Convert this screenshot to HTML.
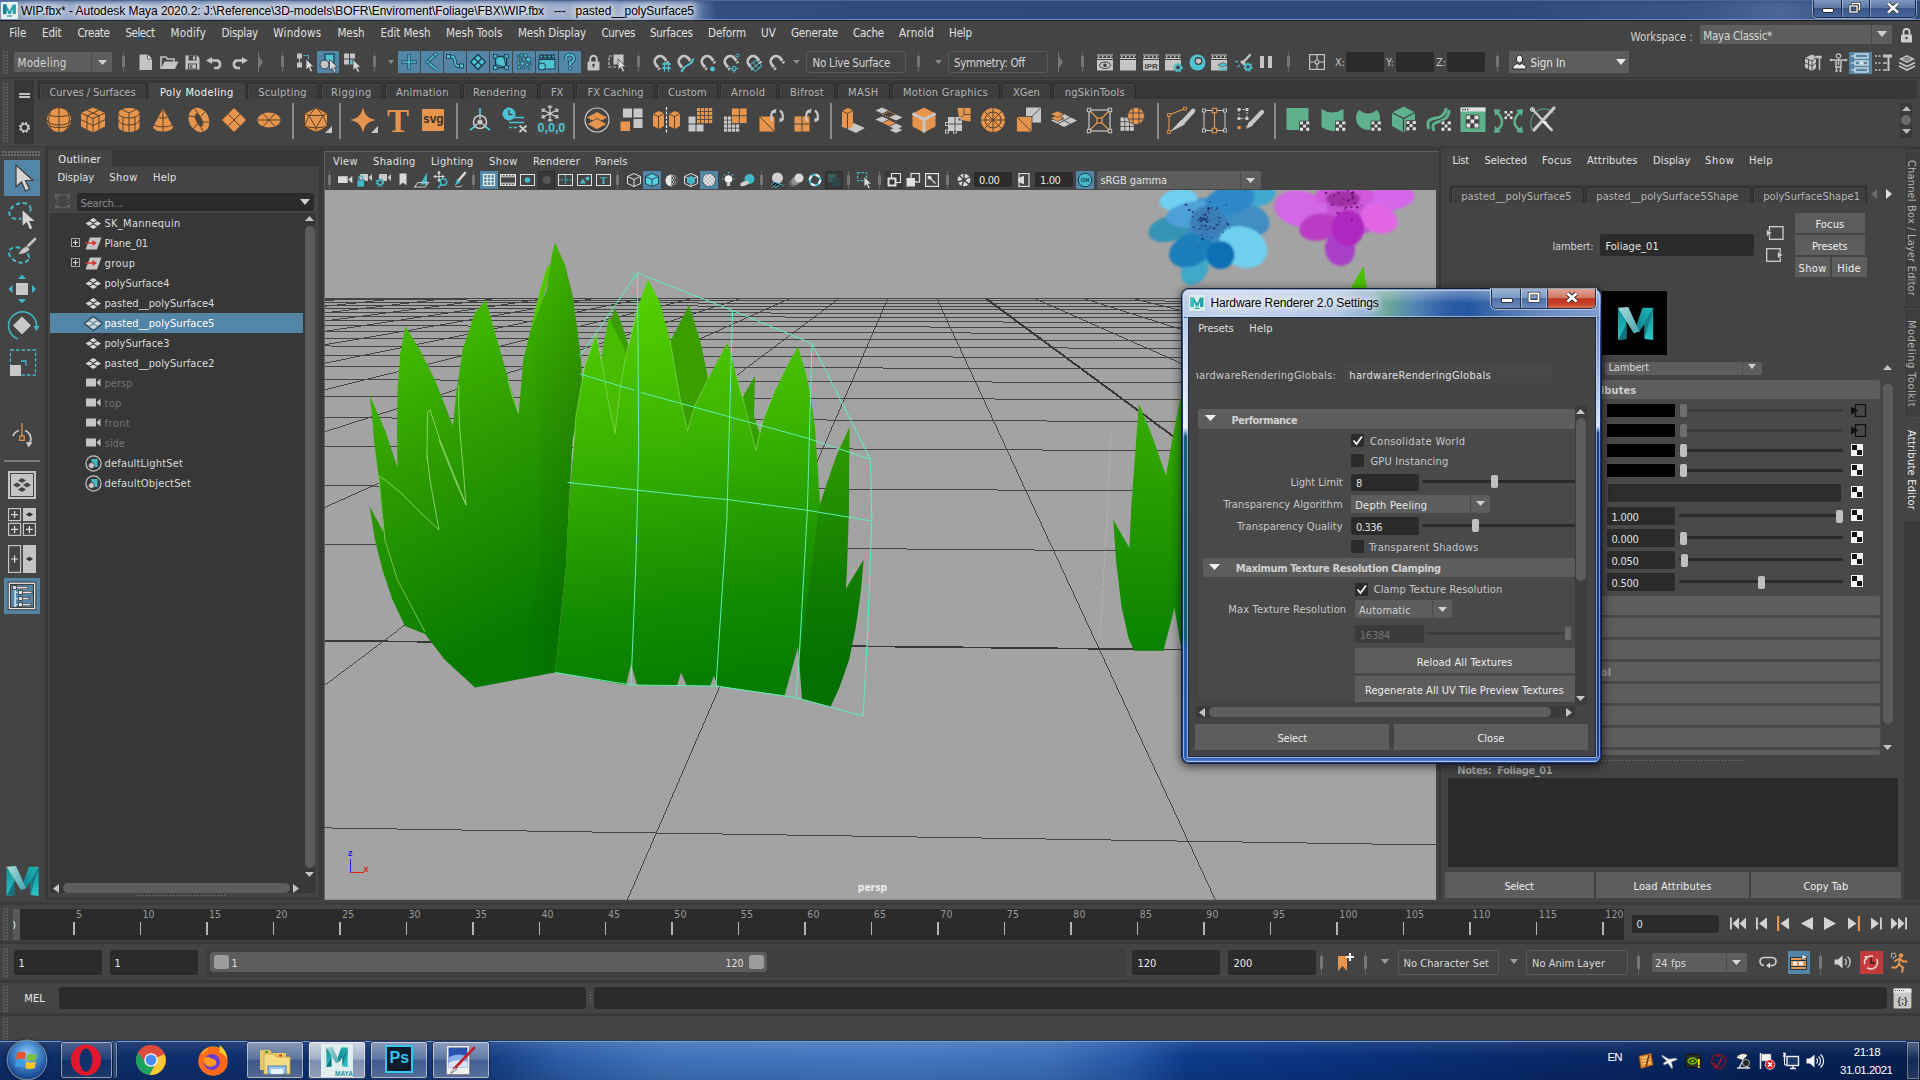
<!DOCTYPE html>
<html><head><meta charset="utf-8"><title>Maya</title><style>
html,body{margin:0;padding:0}
body{width:1920px;height:1080px;overflow:hidden;background:#444;position:relative;font-family:"DejaVu Sans Condensed","Liberation Sans",sans-serif;font-size:11px;color:#ddd}
body *{position:absolute;box-sizing:border-box}
.t{white-space:nowrap;line-height:14px;margin-top:1px}
svg{overflow:visible}
</style></head><body>
<!-- top -->
<div style="left:0px;top:0px;width:1920px;height:21px;background:#2e4b7c;background:linear-gradient(90deg,#7f93b8 0px,#9aaac8 60px,#a9b6cf 350px,#9aabca 640px,#8fa2c4 690px,#4f6c9e 704px,#31507f 716px,#2e4b7d 900px,#2c4a7b 1500px,#385688 1700px,#4a6797 1780px,#3a5788 1830px,#2f4c7e 1920px);"></div>
<div style="left:0px;top:0px;width:1920px;height:5px;background:linear-gradient(rgba(45,75,125,.55),rgba(45,75,125,0))"></div>
<div style="left:0px;top:0px;width:1920px;height:1px;background:#4a6898;"></div>
<div style="left:0px;top:19px;width:1920px;height:1px;background:#7d9ccc;opacity:.8"></div>
<div style="left:0px;top:20px;width:1920px;height:1px;background:#1a1a1a;"></div>
<div style="left:1px;top:2px;width:17px;height:17px;background:#e8f0f0;border-radius:1px"></div>
<svg style="left:2px;top:3px;" width="15" height="15" viewBox="0 0 15 15"><path d="M1 1.5 L4.2 1.5 L7.5 8 L10.8 1.5 L14 1.5 L14 11 L10.6 11 L10.6 6.5 L8.6 11 L6.4 11 L4.4 6.5 L4.4 11 L1 11 Z" fill="#2aa3ad"/><path d="M1 1.5 L4.2 1.5 L4.4 11 L1 11Z" fill="#1c7f8c"/><rect x="5" y="12.3" width="5" height="1.4" fill="#2aa3ad"/></svg>
<span class="t" style="left:21px;top:4px;color:#000;font-size:12px;letter-spacing:-0.052px;font-family:Liberation Sans,sans-serif;text-shadow:0 0 6px #fff,0 0 8px #fff,0 0 10px rgba(255,255,255,.8);white-space:pre;margin-top:0;">WIP.fbx* - Autodesk Maya 2020.2: J:\Reference\3D-models\BOFR\Enviroment\Foliage\FBX\WIP.fbx&nbsp;&nbsp; ---&nbsp;&nbsp; pasted__polySurface5</span>
<div style="left:1813px;top:0px;width:103px;height:18px;border:1px solid #1c2c4a;border-top:none;border-radius:0 0 5px 5px;box-shadow:0 0 0 1px rgba(255,255,255,.45);background:linear-gradient(#8098c0 0%,#5b78a8 45%,#38568a 50%,#46669c 100%);box-sizing:border-box"></div>
<div style="left:1841px;top:0px;width:1px;height:17px;background:#1c2c4a;box-shadow:1px 0 0 rgba(255,255,255,.35)"></div>
<div style="left:1869px;top:0px;width:1px;height:17px;background:#1c2c4a;box-shadow:1px 0 0 rgba(255,255,255,.35)"></div>
<div style="left:1822px;top:8px;width:12px;height:5px;background:#fff;border:1px solid #2a2a2a;border-radius:1px"></div>
<svg style="left:1848px;top:2px;" width="14" height="12" viewBox="0 0 14 12"><rect x="4.5" y="1.5" width="7" height="6" fill="none" stroke="#333" stroke-width="2.6"/><rect x="4.5" y="1.5" width="7" height="6" fill="none" stroke="#fff" stroke-width="1.3"/><rect x="2" y="4" width="7" height="6" fill="#3a5a90" stroke="#333" stroke-width="2.6"/><rect x="2" y="4" width="7" height="6" fill="none" stroke="#fff" stroke-width="1.3"/></svg>
<svg style="left:1886px;top:2px;" width="14" height="12" viewBox="0 0 14 12"><path d="M2 1.5 L12 10.5 M12 1.5 L2 10.5" stroke="#333" stroke-width="4.2"/><path d="M2 1.5 L12 10.5 M12 1.5 L2 10.5" stroke="#fff" stroke-width="2.4"/></svg>
<div style="left:0px;top:21px;width:1920px;height:26px;background:#444;"></div>
<span class="t" style="left:9.25px;top:25px;color:#e0e0e0;font-size:11.5px;letter-spacing:-0.059px;">File</span>
<span class="t" style="left:42px;top:25px;color:#e0e0e0;font-size:11.5px;letter-spacing:-0.134px;">Edit</span>
<span class="t" style="left:77.5px;top:25px;color:#e0e0e0;font-size:11.5px;letter-spacing:-0.392px;">Create</span>
<span class="t" style="left:125.5px;top:25px;color:#e0e0e0;font-size:11.5px;letter-spacing:-0.487px;">Select</span>
<span class="t" style="left:170.5px;top:25px;color:#e0e0e0;font-size:11.5px;letter-spacing:0.207px;">Modify</span>
<span class="t" style="left:221.5px;top:25px;color:#e0e0e0;font-size:11.5px;letter-spacing:-0.234px;">Display</span>
<span class="t" style="left:273.25px;top:25px;color:#e0e0e0;font-size:11.5px;letter-spacing:0.298px;">Windows</span>
<span class="t" style="left:337.5px;top:25px;color:#e0e0e0;font-size:11.5px;letter-spacing:-0.061px;">Mesh</span>
<span class="t" style="left:380.5px;top:25px;color:#e0e0e0;font-size:11.5px;letter-spacing:-0.063px;">Edit Mesh</span>
<span class="t" style="left:446px;top:25px;color:#e0e0e0;font-size:11.5px;letter-spacing:0.069px;">Mesh Tools</span>
<span class="t" style="left:518px;top:25px;color:#e0e0e0;font-size:11.5px;letter-spacing:-0.056px;">Mesh Display</span>
<span class="t" style="left:601.5px;top:25px;color:#e0e0e0;font-size:11.5px;letter-spacing:-0.402px;">Curves</span>
<span class="t" style="left:650px;top:25px;color:#e0e0e0;font-size:11.5px;letter-spacing:-0.288px;">Surfaces</span>
<span class="t" style="left:708px;top:25px;color:#e0e0e0;font-size:11.5px;letter-spacing:-0.072px;">Deform</span>
<span class="t" style="left:761px;top:25px;color:#e0e0e0;font-size:11.5px;letter-spacing:0.175px;">UV</span>
<span class="t" style="left:791px;top:25px;color:#e0e0e0;font-size:11.5px;letter-spacing:-0.166px;">Generate</span>
<span class="t" style="left:853px;top:25px;color:#e0e0e0;font-size:11.5px;letter-spacing:-0.236px;">Cache</span>
<span class="t" style="left:899px;top:25px;color:#e0e0e0;font-size:11.5px;letter-spacing:0.257px;">Arnold</span>
<span class="t" style="left:949px;top:25px;color:#e0e0e0;font-size:11.5px;letter-spacing:-0.149px;">Help</span>
<span class="t" style="left:1630.5px;top:29px;color:#cfcfcf;font-size:11.5px;letter-spacing:-0.114px;">Workspace :</span>
<div style="left:1700px;top:25px;width:192px;height:19px;background:#5d5d5d;border-radius:2px"></div>
<div style="left:1871px;top:25px;width:1px;height:19px;background:#4a4a4a;"></div>
<span class="t" style="left:1703.25px;top:28px;color:#d8d8d8;font-size:11.5px;letter-spacing:-0.248px;">Maya Classic*</span>
<svg style="left:1877px;top:31px;" width="10" height="6" viewBox="0 0 10 6"><path d="M0 0 L10 0 L5 6Z" fill="#d0d0d0"/></svg>
<svg style="left:1900px;top:27px;" width="13" height="16" viewBox="0 0 13 16"><path d="M3.5 8 V5 a3 3 0 0 1 6 0 V8" fill="none" stroke="#cfcfcf" stroke-width="1.8"/><rect x="1" y="7.5" width="11" height="8" rx="1" fill="#cfcfcf"/><circle cx="6.5" cy="11" r="1.3" fill="#444"/></svg>
<!-- status -->
<div style="left:0px;top:47px;width:1920px;height:31px;background:#444;"></div>
<div style="left:0px;top:77px;width:1920px;height:2px;background:#3a3a3a;"></div>
<div style="left:3px;top:51px;width:6px;height:24px;background-image:radial-gradient(circle at 1px 1px,#6c6c6c 0.6px,transparent 0.85px);background-size:3px 3px"></div>
<div style="left:14px;top:52px;width:98px;height:20px;background:#5d5d5d;border-radius:2px"></div>
<div style="left:91px;top:52px;width:1px;height:20px;background:#4c4c4c;"></div>
<span class="t" style="left:17.5px;top:55px;color:#d6d6d6;font-size:11.5px;letter-spacing:0.266px;">Modeling</span>
<svg style="left:98px;top:60px;" width="9" height="5" viewBox="0 0 9 5"><path d="M0 0 L9 0 L4.5 5Z" fill="#cfcfcf"/></svg>
<div style="left:123px;top:52px;width:1px;height:20px;background:#666;"></div><div style="left:122px;top:56px;width:3px;height:11px;background:#777;border-radius:1px"></div>
<svg style="left:139px;top:54px;" width="14" height="17" viewBox="0 0 14 17"><path d="M0.5 0.5 H8.5 L13 5 V16 H0.5Z" fill="#c4c4c4"/><path d="M8.5 0.5 V5 H13" fill="#e6e6e6" stroke="#444" stroke-width=".8"/></svg>
<svg style="left:160px;top:56px;" width="19" height="14" viewBox="0 0 19 14"><path d="M1 13 V1 H6 L7.5 3 H14 V5.5" fill="none" stroke="#c4c4c4" stroke-width="1.6"/><path d="M1 13 L4.5 5.5 H18.5 L15 13Z" fill="#c4c4c4"/></svg>
<svg style="left:185px;top:55px;" width="15" height="15" viewBox="0 0 15 15"><path d="M0.5 0.5 H12 L14.5 3 V14.5 H0.5Z" fill="#c4c4c4"/><rect x="3.5" y="0.5" width="8" height="5" fill="#444"/><rect x="8" y="1.3" width="2" height="3.2" fill="#c4c4c4"/><rect x="3" y="8.5" width="9" height="6" fill="#444"/><rect x="4" y="9.5" width="7" height="4" fill="#c4c4c4"/><rect x="5" y="10.5" width="2.4" height="2.2" fill="#444"/></svg>
<svg style="left:206px;top:57px;" width="18" height="12" viewBox="0 0 18 12"><path d="M6 0 L0 3.5 L6 7Z" fill="#c4c4c4"/><path d="M5 3.5 H11.5 A4 4 0 0 1 11.5 11 H8" fill="none" stroke="#c4c4c4" stroke-width="2.6"/></svg>
<svg style="left:230px;top:57px;" width="18" height="12" viewBox="0 0 18 12"><path d="M12 0 L18 3.5 L12 7Z" fill="#c4c4c4"/><path d="M13 3.5 H6.5 A4 4 0 0 0 6.5 11 H10" fill="none" stroke="#c4c4c4" stroke-width="2.6"/></svg>
<svg style="left:258px;top:52px;" width="5" height="20" viewBox="0 0 5 20"><path d="M0.5 0 V20" stroke="#777" stroke-width="1"/><path d="M1 4 L5 10 L1 16Z" fill="#777"/></svg>
<div style="left:282px;top:52px;width:1px;height:20px;background:#666;"></div><div style="left:281px;top:56px;width:3px;height:11px;background:#777;border-radius:1px"></div>
<svg style="left:296px;top:53px;" width="19" height="19" viewBox="0 0 19 19"><rect x="1" y="0.5" width="5" height="5" fill="#c4c4c4"/><rect x="1" y="9.5" width="5" height="5" fill="#c4c4c4"/><path d="M3.5 5.5 V9.5" stroke="#c4c4c4"/><path d="M7.5 2.5 H12.5 V7 " fill="none" stroke="#4fc3d3" stroke-width="1.2" stroke-dasharray="2 1"/><path d="M10.0 6.0 L10.0 17.0 L12.6 14.6 L14.6 19.0 L16.6 18.0 L14.6 13.8 L18.0 13.8Z" fill="#d8d8d8" stroke="#444" stroke-width="0.8"/></svg>
<div style="left:317px;top:51px;width:22px;height:22px;background:#5285a6;"></div>
<svg style="left:319px;top:53px;" width="19" height="19" viewBox="0 0 19 19"><rect x="6" y="1" width="9" height="9" fill="#4fc3d3" stroke="#1e3a4a" stroke-width="1.2"/><circle cx="5.5" cy="11.5" r="4.5" fill="#c4c4c4" stroke="#1e3a4a" stroke-width="1"/><path d="M10.5 6.5 L10.5 17.5 L13.1 15.1 L15.1 19.5 L17.1 18.5 L15.1 14.3 L18.5 14.3Z" fill="#d8d8d8" stroke="#444" stroke-width="0.8"/></svg>
<svg style="left:343px;top:53px;" width="19" height="19" viewBox="0 0 19 19"><rect x="1" y="0.5" width="5" height="5" fill="#c4c4c4"/><rect x="7" y="0.5" width="5" height="5" fill="#c4c4c4"/><rect x="1" y="6.5" width="5" height="5" fill="#c4c4c4"/><rect x="7" y="6.5" width="4" height="5" fill="#4fc3d3"/><path d="M10.0 6.5 L10.0 17.5 L12.6 15.1 L14.6 19.5 L16.6 18.5 L14.6 14.3 L18.0 14.3Z" fill="#d8d8d8" stroke="#444" stroke-width="0.8"/></svg>
<div style="left:374px;top:52px;width:1px;height:20px;background:#666;"></div><div style="left:373px;top:56px;width:3px;height:11px;background:#777;border-radius:1px"></div>
<svg style="left:388px;top:60px;" width="6" height="4" viewBox="0 0 6 4"><path d="M0 0 L6 0 L3.0 4Z" fill="#8a8a8a"/></svg>
<div style="left:398px;top:51px;width:22px;height:22px;background:#5285a6;"></div>
<svg style="left:398px;top:51px;" width="22" height="22" viewBox="0 0 22 22"><path d="M11 3 V19 M3 11 H19" stroke="#1e3a4a" stroke-width="3"/><path d="M11 3.6 V18.4 M3.6 11 H18.4" stroke="#4fc3d3" stroke-width="1.6"/></svg>
<div style="left:421px;top:51px;width:22px;height:22px;background:#5285a6;"></div>
<svg style="left:421px;top:51px;" width="22" height="22" viewBox="0 0 22 22"><path d="M14 3.5 L6.5 11 L15.5 18.5" fill="none" stroke="#1e3a4a" stroke-width="3.4" stroke-linejoin="round"/><path d="M14 3.5 L6.5 11 L15.5 18.5" fill="none" stroke="#4fc3d3" stroke-width="1.8" stroke-linejoin="round"/><circle cx="14.5" cy="3.5" r="1.8" fill="#4fc3d3" stroke="#1e3a4a" stroke-width=".8"/><circle cx="6.5" cy="11" r="1.8" fill="#4fc3d3" stroke="#1e3a4a" stroke-width=".8"/></svg>
<div style="left:444px;top:51px;width:22px;height:22px;background:#5285a6;"></div>
<svg style="left:444px;top:51px;" width="22" height="22" viewBox="0 0 22 22"><path d="M4.5 5.5 H8 C13 5.5 9 15 14 15 H17.5" fill="none" stroke="#1e3a4a" stroke-width="3.4"/><path d="M4.5 5.5 H8 C13 5.5 9 15 14 15 H17.5" fill="none" stroke="#4fc3d3" stroke-width="1.8"/><rect x="2.5" y="3.5" width="4" height="4" fill="#4fc3d3" stroke="#1e3a4a" stroke-width=".9"/><rect x="15.5" y="13" width="4" height="4" fill="#4fc3d3" stroke="#1e3a4a" stroke-width=".9"/></svg>
<div style="left:467px;top:51px;width:22px;height:22px;background:#5285a6;"></div>
<svg style="left:467px;top:51px;" width="22" height="22" viewBox="0 0 22 22"><path d="M11 3.5 L18.5 11 L11 18.5 L3.5 11Z" fill="#4fc3d3" stroke="#1e3a4a" stroke-width="1.3"/><path d="M7.2 7.2 L14.8 14.8 M14.8 7.2 L7.2 14.8" stroke="#1e3a4a" stroke-width="1.3"/></svg>
<div style="left:490px;top:51px;width:22px;height:22px;background:#5285a6;"></div>
<svg style="left:490px;top:51px;" width="22" height="22" viewBox="0 0 22 22"><path d="M5.5 5.5 H16.5 V16.5 H5.5Z" fill="#4fc3d3" stroke="#1e3a4a" stroke-width="1.6"/><path d="M5.5 13.5 L16.5 16.5 M13.5 5.5 L16.5 16.5" stroke="#1e3a4a" stroke-width=".9"/><rect x="3.5" y="3.5" width="3.6" height="3.6" fill="#4fc3d3" stroke="#1e3a4a" stroke-width=".9"/><rect x="14.8" y="3.5" width="3.6" height="3.6" fill="#4fc3d3" stroke="#1e3a4a" stroke-width=".9"/><rect x="3.5" y="14.8" width="3.6" height="3.6" fill="#4fc3d3" stroke="#1e3a4a" stroke-width=".9"/><rect x="14.8" y="14.8" width="3.6" height="3.6" fill="#4fc3d3" stroke="#1e3a4a" stroke-width=".9"/></svg>
<div style="left:513px;top:51px;width:22px;height:22px;background:#5285a6;"></div>
<svg style="left:513px;top:51px;" width="22" height="22" viewBox="0 0 22 22"><circle cx="5" cy="5" r="1.2" fill="#4fc3d3" stroke="#1e3a4a" stroke-width=".8"/><circle cx="8.5" cy="4" r="1.5" fill="#4fc3d3" stroke="#1e3a4a" stroke-width=".8"/><circle cx="12.5" cy="4.5" r="1.8" fill="#4fc3d3" stroke="#1e3a4a" stroke-width=".8"/><circle cx="7" cy="8" r="1.3" fill="#4fc3d3" stroke="#1e3a4a" stroke-width=".8"/><circle cx="11" cy="8.5" r="1.6" fill="#4fc3d3" stroke="#1e3a4a" stroke-width=".8"/><circle cx="15.5" cy="8.5" r="2.4" fill="#4fc3d3" stroke="#1e3a4a" stroke-width=".8"/><circle cx="5.5" cy="12" r="1.5" fill="#4fc3d3" stroke="#1e3a4a" stroke-width=".8"/><circle cx="9.5" cy="12.5" r="1.9" fill="#4fc3d3" stroke="#1e3a4a" stroke-width=".8"/><circle cx="14" cy="13.5" r="1.6" fill="#4fc3d3" stroke="#1e3a4a" stroke-width=".8"/><circle cx="6" cy="16.5" r="1.7" fill="#4fc3d3" stroke="#1e3a4a" stroke-width=".8"/><circle cx="10.5" cy="17" r="1.3" fill="#4fc3d3" stroke="#1e3a4a" stroke-width=".8"/><circle cx="16" cy="17.5" r="1.2" fill="#4fc3d3" stroke="#1e3a4a" stroke-width=".8"/><circle cx="17.5" cy="13" r="1.0" fill="#4fc3d3" stroke="#1e3a4a" stroke-width=".8"/></svg>
<div style="left:536px;top:51px;width:22px;height:22px;background:#5285a6;"></div>
<svg style="left:536px;top:51px;" width="22" height="22" viewBox="0 0 22 22"><rect x="3" y="8.5" width="16" height="9.5" fill="#4fc3d3" stroke="#1e3a4a" stroke-width="1"/><rect x="3" y="3.5" width="16" height="4" fill="#1e3a4a"/><path d="M4.5 4.2 l2.4 1.3 l-2.4 1.3z" fill="#4fc3d3"/><path d="M8.5 4.2 l2.4 1.3 l-2.4 1.3z" fill="#4fc3d3"/><path d="M12.5 4.2 l2.4 1.3 l-2.4 1.3z" fill="#4fc3d3"/><path d="M16.5 4.2 l2.4 1.3 l-2.4 1.3z" fill="#4fc3d3"/><circle cx="6" cy="15.5" r="3.6" fill="#4fc3d3" stroke="#1e3a4a" stroke-width="1"/></svg>
<div style="left:559px;top:51px;width:22px;height:22px;background:#5285a6;"></div>
<svg style="left:559px;top:51px;" width="22" height="22" viewBox="0 0 22 22"><path d="M7 8 A4 4 0 1 1 11 11.5 V14" fill="none" stroke="#1e3a4a" stroke-width="3.6"/><path d="M7 8 A4 4 0 1 1 11 11.5 V14" fill="none" stroke="#4fc3d3" stroke-width="2"/><circle cx="11" cy="17.3" r="1.7" fill="#4fc3d3" stroke="#1e3a4a" stroke-width=".8"/></svg>
<svg style="left:587px;top:54px;" width="13" height="17" viewBox="0 0 13 17"><path d="M3.3 8 V5 a3.2 3.2 0 0 1 6.4 0 V8" fill="none" stroke="#c4c4c4" stroke-width="2"/><rect x="0.5" y="7.5" width="12" height="9" rx="1" fill="#c4c4c4"/><circle cx="6.5" cy="11" r="1.3" fill="#444"/><rect x="6" y="11" width="1" height="3" fill="#444"/></svg>
<svg style="left:608px;top:54px;" width="19" height="18" viewBox="0 0 19 18"><rect x="5.5" y="0.5" width="10" height="10" fill="#c4c4c4"/><path d="M4 2 H1 V13 H8" fill="none" stroke="#c4c4c4" stroke-width="1.2" stroke-dasharray="3 1.5"/><path d="M10.0 5.0 L10.0 16.0 L12.6 13.6 L14.6 18.0 L16.6 17.0 L14.6 12.8 L18.0 12.8Z" fill="#d8d8d8" stroke="#444" stroke-width="0.8"/></svg>
<div style="left:638px;top:52px;width:1px;height:20px;background:#666;"></div><div style="left:637px;top:56px;width:3px;height:11px;background:#777;border-radius:1px"></div>
<svg style="left:652px;top:53px;" width="19" height="19" viewBox="0 0 19 19"><g transform="rotate(-38 8.5 9)"><path d="M3.2 14.5 V8.3 A5.3 5.3 0 0 1 13.800 8.3 V14.5" fill="none" stroke="#c4c4c4" stroke-width="2.800"/><path d="M1.500 12.200 H5 M12 12.200 H15.500" stroke="#444" stroke-width="1"/></g><path d="M10 11 H19 M10 15 H19 M12.5 9 V18.5 M16.5 9 V18.5" stroke="#4fc3d3" stroke-width="1.3"/></svg>
<svg style="left:676px;top:53px;" width="19" height="19" viewBox="0 0 19 19"><g transform="rotate(-38 8.5 9)"><path d="M3.2 14.5 V8.3 A5.3 5.3 0 0 1 13.800 8.3 V14.5" fill="none" stroke="#c4c4c4" stroke-width="2.800"/><path d="M1.500 12.200 H5 M12 12.200 H15.500" stroke="#444" stroke-width="1"/></g><path d="M6 18 C7 12 16 13 17.5 5.5" fill="none" stroke="#4fc3d3" stroke-width="1.8"/><circle cx="6" cy="18" r="1.3" fill="#4fc3d3"/></svg>
<svg style="left:699px;top:53px;" width="19" height="19" viewBox="0 0 19 19"><g transform="rotate(-38 8.5 9)"><path d="M3.2 14.5 V8.3 A5.3 5.3 0 0 1 13.800 8.3 V14.5" fill="none" stroke="#c4c4c4" stroke-width="2.800"/><path d="M1.500 12.200 H5 M12 12.200 H15.500" stroke="#444" stroke-width="1"/></g><circle cx="13.5" cy="16" r="2.4" fill="#4fc3d3"/></svg>
<svg style="left:722px;top:53px;" width="19" height="19" viewBox="0 0 19 19"><g transform="rotate(-38 8.5 9)"><path d="M3.2 14.5 V8.3 A5.3 5.3 0 0 1 13.800 8.3 V14.5" fill="none" stroke="#c4c4c4" stroke-width="2.800"/><path d="M1.500 12.200 H5 M12 12.200 H15.500" stroke="#444" stroke-width="1"/></g><circle cx="12" cy="15.5" r="2" fill="none" stroke="#4fc3d3" stroke-width="1.2"/><circle cx="15.5" cy="2.5" r="1.6" fill="none" stroke="#4fc3d3" stroke-width="1"/><path d="M8 15.5 H9.5 M14.5 15.5 H16.5 M12 18 V20" stroke="#4fc3d3" stroke-width="1"/></svg>
<svg style="left:745px;top:53px;" width="19" height="19" viewBox="0 0 19 19"><g transform="rotate(-38 8.5 9)"><path d="M3.2 14.5 V8.3 A5.3 5.3 0 0 1 13.800 8.3 V14.5" fill="none" stroke="#c4c4c4" stroke-width="2.800"/><path d="M1.500 12.200 H5 M12 12.200 H15.500" stroke="#444" stroke-width="1"/></g><path d="M5 12 L11 7 L17 13 L10 18.5Z M8 9.5 L14 15.5 M8.5 15 L14 10" fill="none" stroke="#4fc3d3" stroke-width="1"/></svg>
<svg style="left:768px;top:53px;" width="19" height="19" viewBox="0 0 19 19"><g transform="rotate(-38 8.5 9)"><path d="M3.2 14.5 V8.3 A5.3 5.3 0 0 1 13.800 8.3 V14.5" fill="none" stroke="#c4c4c4" stroke-width="2.800"/><path d="M1.500 12.200 H5 M12 12.200 H15.500" stroke="#444" stroke-width="1"/></g></svg>
<svg style="left:793px;top:60px;" width="7" height="4" viewBox="0 0 7 4"><path d="M0 0 L7 0 L3.5 4Z" fill="#8a8a8a"/></svg>
<div style="left:806px;top:51px;width:100px;height:22px;background:#444;border:1px solid #5a5a5a;border-radius:3px"></div>
<span class="t" style="left:812.5px;top:55px;color:#d6d6d6;font-size:11.5px;letter-spacing:-0.245px;">No Live Surface</span>
<div style="left:918px;top:52px;width:1px;height:20px;background:#666;"></div><div style="left:917px;top:56px;width:3px;height:11px;background:#777;border-radius:1px"></div>
<svg style="left:935px;top:60px;" width="7" height="4" viewBox="0 0 7 4"><path d="M0 0 L7 0 L3.5 4Z" fill="#8a8a8a"/></svg>
<div style="left:948px;top:51px;width:100px;height:22px;background:#444;border:1px solid #5a5a5a;border-radius:3px"></div>
<span class="t" style="left:954px;top:55px;color:#d6d6d6;font-size:11.5px;letter-spacing:-0.319px;">Symmetry: Off</span>
<svg style="left:1058px;top:52px;" width="5" height="20" viewBox="0 0 5 20"><path d="M0.5 0 V20" stroke="#777" stroke-width="1"/><path d="M1 4 L5 10 L1 16Z" fill="#777"/></svg>
<div style="left:1082px;top:52px;width:1px;height:20px;background:#666;"></div><div style="left:1081px;top:56px;width:3px;height:11px;background:#777;border-radius:1px"></div>
<svg style="left:1097px;top:54px;" width="17" height="17" viewBox="0 0 17 17"><rect x="0" y="6" width="16" height="10.5" fill="#c4c4c4"/><path d="M0 1 H16 M0 4.5 H16" stroke="#c4c4c4" stroke-width="1"/><path d="M1 1.5 l2 1.2 l-2 1.2z" fill="#c4c4c4"/><path d="M5 1.5 l2 1.2 l-2 1.2z" fill="#c4c4c4"/><path d="M9 1.5 l2 1.2 l-2 1.2z" fill="#c4c4c4"/><path d="M13 1.5 l2 1.2 l-2 1.2z" fill="#c4c4c4"/><ellipse cx="8" cy="11.2" rx="5.5" ry="3.2" fill="#c4c4c4" stroke="#444" stroke-width="1"/><circle cx="8" cy="11.2" r="1.8" fill="#444"/></svg>
<svg style="left:1120px;top:54px;" width="17" height="17" viewBox="0 0 17 17"><rect x="0" y="6" width="16" height="10.5" fill="#c4c4c4"/><path d="M0 1 H16 M0 4.5 H16" stroke="#c4c4c4" stroke-width="1"/><path d="M1 1.5 l2 1.2 l-2 1.2z" fill="#c4c4c4"/><path d="M5 1.5 l2 1.2 l-2 1.2z" fill="#c4c4c4"/><path d="M9 1.5 l2 1.2 l-2 1.2z" fill="#c4c4c4"/><path d="M13 1.5 l2 1.2 l-2 1.2z" fill="#c4c4c4"/></svg>
<svg style="left:1143px;top:54px;" width="17" height="17" viewBox="0 0 17 17"><rect x="0" y="6" width="16" height="10.5" fill="#c4c4c4"/><path d="M0 1 H16 M0 4.5 H16" stroke="#c4c4c4" stroke-width="1"/><path d="M1 1.5 l2 1.2 l-2 1.2z" fill="#c4c4c4"/><path d="M5 1.5 l2 1.2 l-2 1.2z" fill="#c4c4c4"/><path d="M9 1.5 l2 1.2 l-2 1.2z" fill="#c4c4c4"/><path d="M13 1.5 l2 1.2 l-2 1.2z" fill="#c4c4c4"/><text x="1.5" y="14.6" font-size="8" font-weight="bold" fill="#444" font-family="Liberation Sans,sans-serif" style="position:static">IPR</text></svg>
<svg style="left:1165px;top:54px;" width="17" height="17" viewBox="0 0 17 17"><rect x="0" y="6" width="16" height="10.5" fill="#c4c4c4"/><path d="M0 1 H16 M0 4.5 H16" stroke="#c4c4c4" stroke-width="1"/><path d="M1 1.5 l2 1.2 l-2 1.2z" fill="#c4c4c4"/><path d="M5 1.5 l2 1.2 l-2 1.2z" fill="#c4c4c4"/><path d="M9 1.5 l2 1.2 l-2 1.2z" fill="#c4c4c4"/><path d="M13 1.5 l2 1.2 l-2 1.2z" fill="#c4c4c4"/><circle cx="13" cy="13.5" r="3.6" fill="#444" stroke="#4fc3d3" stroke-width="2.2" stroke-dasharray="1.9 1.1"/><circle cx="13" cy="13.5" r="2.6" fill="none" stroke="#4fc3d3" stroke-width="1.3"/></svg>
<svg style="left:1189px;top:54px;" width="17" height="17" viewBox="0 0 17 17"><circle cx="8.5" cy="8.5" r="8" fill="#4fc3d3"/><circle cx="9.5" cy="7" r="4" fill="#444"/><circle cx="9.5" cy="7" r="2.6" fill="#c4c4c4"/></svg>
<svg style="left:1211px;top:54px;" width="17" height="17" viewBox="0 0 17 17"><rect x="0" y="6" width="16" height="10.5" fill="#c4c4c4"/><path d="M0 1 H16 M0 4.5 H16" stroke="#c4c4c4" stroke-width="1"/><path d="M1 1.5 l2 1.2 l-2 1.2z" fill="#c4c4c4"/><path d="M5 1.5 l2 1.2 l-2 1.2z" fill="#c4c4c4"/><path d="M9 1.5 l2 1.2 l-2 1.2z" fill="#c4c4c4"/><path d="M13 1.5 l2 1.2 l-2 1.2z" fill="#c4c4c4"/><path d="M12 8.5 l5 2.3 l-5 2.3 l-5 -2.3z" fill="#4fc3d3" stroke="#444" stroke-width=".6"/><path d="M7.5 13.5 l4.5 2.2 l4.5 -2.2" fill="none" stroke="#4fc3d3" stroke-width="1.6"/></svg>
<svg style="left:1234px;top:53px;" width="19" height="19" viewBox="0 0 19 19"><path d="M16 2 L9.5 9" stroke="#c4c4c4" stroke-width="2.4" stroke-linecap="round"/><path d="M7 8 l4 3.6" stroke="#c4c4c4" stroke-width="3"/><path d="M1 8 l3 1 M3.5 14 l2.5 -2" stroke="#4fc3d3" stroke-width="1.2"/><circle cx="14" cy="14" r="3.4" fill="#444" stroke="#4fc3d3" stroke-width="2.2" stroke-dasharray="1.9 1.0"/><circle cx="14" cy="14" r="2.4" fill="none" stroke="#4fc3d3" stroke-width="1.3"/></svg>
<div style="left:1260px;top:56px;width:4px;height:12px;background:#c4c4c4;"></div>
<div style="left:1268px;top:56px;width:4px;height:12px;background:#c4c4c4;"></div>
<div style="left:1288px;top:52px;width:1px;height:20px;background:#666;"></div><div style="left:1287px;top:56px;width:3px;height:11px;background:#777;border-radius:1px"></div>
<svg style="left:1309px;top:54px;" width="16" height="16" viewBox="0 0 16 16"><rect x="0.6" y="0.6" width="14.8" height="14.8" fill="none" stroke="#c4c4c4" stroke-width="1.2"/><path d="M8 1 V15 M1 8 H15" stroke="#c4c4c4" stroke-width="1.2"/><circle cx="8" cy="8" r="2" fill="#444" stroke="#c4c4c4" stroke-width="1.1"/></svg>
<span class="t" style="left:1335px;top:55px;color:#c8c8c8;font-size:11px;">X:</span>
<div style="left:1346px;top:52px;width:38px;height:20px;background:#2b2b2b;border-radius:2px"></div>
<span class="t" style="left:1386px;top:55px;color:#c8c8c8;font-size:11px;">Y:</span>
<div style="left:1396px;top:52px;width:38px;height:20px;background:#2b2b2b;border-radius:2px"></div>
<span class="t" style="left:1436px;top:55px;color:#c8c8c8;font-size:11px;">Z:</span>
<div style="left:1447px;top:52px;width:38px;height:20px;background:#2b2b2b;border-radius:2px"></div>
<div style="left:1497px;top:52px;width:1px;height:20px;background:#666;"></div><div style="left:1496px;top:56px;width:3px;height:11px;background:#777;border-radius:1px"></div>
<div style="left:1509px;top:51px;width:120px;height:22px;background:#5d5d5d;"></div>
<svg style="left:1512px;top:54px;" width="15" height="16" viewBox="0 0 15 16"><ellipse cx="7.5" cy="5" rx="3.2" ry="4" fill="#eee" stroke="#222" stroke-width="1"/><path d="M0.8 15 C1 10.5 4 10.5 5.5 9.5 C6.8 11 8.2 11 9.5 9.5 C11 10.5 14 10.5 14.2 15Z" fill="#eee" stroke="#222" stroke-width="1"/></svg>
<span class="t" style="left:1530.5px;top:55px;color:#e4e4e4;font-size:11.5px;letter-spacing:-0.067px;">Sign In</span>
<svg style="left:1616px;top:59px;" width="10" height="6" viewBox="0 0 10 6"><path d="M0 0 L10 0 L5 6Z" fill="#e8e8e8"/></svg>
<svg style="left:1804px;top:53px;" width="19" height="19" viewBox="0 0 19 19"><path d="M1 5 L8 1.5 L12 3.5 V15 L8 18 L1 14.5Z" fill="#c4c4c4"/><path d="M1 5 L8 8 V18 M8 8 L12 5 M4.5 6.5 V16.5 M1 9.8 L8 13 L12 10" stroke="#444" stroke-width=".9" fill="none"/><path d="M11 2.5 H18 V5.5 H16.5 V17 H14.5 V5.5 H11Z" fill="#c4c4c4" stroke="#444" stroke-width=".5"/></svg>
<svg style="left:1829px;top:53px;" width="19" height="19" viewBox="0 0 19 19"><circle cx="9.5" cy="3" r="2.2" fill="none" stroke="#c4c4c4" stroke-width="1.2"/><path d="M2 7 H17 M9.5 6 V12 M7 8 V14 H12 V8 M7.5 14 V17 M11.5 14 V17" stroke="#c4c4c4" stroke-width="1.5" fill="none"/><circle cx="2" cy="7" r="1.3" fill="#c4c4c4"/><circle cx="17" cy="7" r="1.3" fill="#c4c4c4"/><circle cx="7.5" cy="18" r="1.2" fill="#c4c4c4"/><circle cx="11.5" cy="18" r="1.2" fill="#c4c4c4"/></svg>
<div style="left:1849px;top:52px;width:23px;height:22px;background:#5285a6;"></div>
<svg style="left:1851px;top:53px;" width="19" height="20" viewBox="0 0 19 20"><rect x="4" y="1" width="13" height="4" fill="none" stroke="#e8e8e8" stroke-width="1.2"/><rect x="4" y="8" width="13" height="4" fill="none" stroke="#e8e8e8" stroke-width="1.2"/><rect x="4" y="15" width="13" height="4" fill="none" stroke="#e8e8e8" stroke-width="1.2"/><path d="M0 3 H4 M0 10 H4 M0 17 H4" stroke="#e8e8e8" stroke-width="1.2"/><rect x="8.5" y="8.6" width="4" height="2.8" fill="#e8e8e8"/></svg>
<svg style="left:1875px;top:53px;" width="19" height="19" viewBox="0 0 19 19"><path d="M0 3 H6 M0 10 H6 M0 17 H6" stroke="#c4c4c4" stroke-width="1.6" stroke-dasharray="2 1.5"/><path d="M8 1.5 H17 V4.5 H14.5 V18 H12.5 V4.5 H8Z" fill="#c4c4c4"/><path d="M8 10 H12 M8 17 H12" stroke="#c4c4c4" stroke-width="1.4"/></svg>
<svg style="left:1898px;top:54px;" width="18" height="18" viewBox="0 0 18 18"><path d="M9 1 L17 5 L9 9 L1 5Z" fill="#c4c4c4"/><path d="M1 8.5 L9 12.5 L17 8.5 M1 12 L9 16 L17 12" fill="none" stroke="#c4c4c4" stroke-width="1.7"/><path d="M5 5 H13 M6.5 3.6 H11.5 M6.5 6.4 H11.5" stroke="#444" stroke-width=".7"/></svg>
<!-- shelf -->
<div style="left:0px;top:79px;width:1920px;height:68px;background:#444;"></div>
<div style="left:3px;top:83px;width:6px;height:60px;background-image:radial-gradient(circle at 1px 1px,#6c6c6c 0.6px,transparent 0.85px);background-size:3px 3px"></div>
<div style="left:14px;top:80px;width:20px;height:63.5px;background:#373737;"></div>
<div style="left:19px;top:93px;width:11px;height:1.6px;background:#c0c0c0;"></div>
<div style="left:19px;top:96px;width:11px;height:1.6px;background:#c0c0c0;"></div>
<svg style="left:18px;top:121px;" width="13" height="13" viewBox="0 0 13 13"><circle cx="6.5" cy="6.5" r="4.2" fill="none" stroke="#c8c8c8" stroke-width="2.6" stroke-dasharray="2 1.3"/><circle cx="6.5" cy="6.5" r="3.4" fill="none" stroke="#c8c8c8" stroke-width="1.4"/></svg>
<div style="left:37px;top:80px;width:1880px;height:19px;background:#373737;"></div>
<div style="left:39px;top:83px;width:108px;height:16px;background:#3d3d3d;border-radius:3px 3px 0 0;border:1px solid #2c2c2c;border-bottom:none;box-shadow:inset 1px 1px 0 #484848"></div>
<span class="t" style="left:49.5px;top:85px;color:#b4b4b4;font-size:11px;letter-spacing:-0.049px;">Curves / Surfaces</span>
<div style="left:149px;top:83px;width:96px;height:17px;background:#444;border-radius:3px 3px 0 0"></div>
<span class="t" style="left:160px;top:85px;color:#f0f0f0;font-size:11px;letter-spacing:0.407px;">Poly Modeling</span>
<div style="left:247px;top:83px;width:72px;height:16px;background:#3d3d3d;border-radius:3px 3px 0 0;border:1px solid #2c2c2c;border-bottom:none;box-shadow:inset 1px 1px 0 #484848"></div>
<span class="t" style="left:258.3px;top:85px;color:#b4b4b4;font-size:11px;letter-spacing:0.242px;">Sculpting</span>
<div style="left:321px;top:83px;width:62px;height:16px;background:#3d3d3d;border-radius:3px 3px 0 0;border:1px solid #2c2c2c;border-bottom:none;box-shadow:inset 1px 1px 0 #484848"></div>
<span class="t" style="left:331px;top:85px;color:#b4b4b4;font-size:11px;letter-spacing:0.457px;">Rigging</span>
<div style="left:385px;top:83px;width:76px;height:16px;background:#3d3d3d;border-radius:3px 3px 0 0;border:1px solid #2c2c2c;border-bottom:none;box-shadow:inset 1px 1px 0 #484848"></div>
<span class="t" style="left:396px;top:85px;color:#b4b4b4;font-size:11px;letter-spacing:0.250px;">Animation</span>
<div style="left:463px;top:83px;width:75px;height:16px;background:#3d3d3d;border-radius:3px 3px 0 0;border:1px solid #2c2c2c;border-bottom:none;box-shadow:inset 1px 1px 0 #484848"></div>
<span class="t" style="left:473px;top:85px;color:#b4b4b4;font-size:11px;letter-spacing:0.356px;">Rendering</span>
<div style="left:540px;top:83px;width:34px;height:16px;background:#3d3d3d;border-radius:3px 3px 0 0;border:1px solid #2c2c2c;border-bottom:none;box-shadow:inset 1px 1px 0 #484848"></div>
<span class="t" style="left:551px;top:85px;color:#b4b4b4;font-size:11px;letter-spacing:-0.236px;">FX</span>
<div style="left:576px;top:83px;width:79px;height:16px;background:#3d3d3d;border-radius:3px 3px 0 0;border:1px solid #2c2c2c;border-bottom:none;box-shadow:inset 1px 1px 0 #484848"></div>
<span class="t" style="left:587.5px;top:85px;color:#b4b4b4;font-size:11px;letter-spacing:0.058px;">FX Caching</span>
<div style="left:657px;top:83px;width:61px;height:16px;background:#3d3d3d;border-radius:3px 3px 0 0;border:1px solid #2c2c2c;border-bottom:none;box-shadow:inset 1px 1px 0 #484848"></div>
<span class="t" style="left:668px;top:85px;color:#b4b4b4;font-size:11px;letter-spacing:0.131px;">Custom</span>
<div style="left:720px;top:83px;width:57px;height:16px;background:#3d3d3d;border-radius:3px 3px 0 0;border:1px solid #2c2c2c;border-bottom:none;box-shadow:inset 1px 1px 0 #484848"></div>
<span class="t" style="left:731px;top:85px;color:#b4b4b4;font-size:11px;letter-spacing:0.416px;">Arnold</span>
<div style="left:779px;top:83px;width:56px;height:16px;background:#3d3d3d;border-radius:3px 3px 0 0;border:1px solid #2c2c2c;border-bottom:none;box-shadow:inset 1px 1px 0 #484848"></div>
<span class="t" style="left:790px;top:85px;color:#b4b4b4;font-size:11px;letter-spacing:0.295px;">Bifrost</span>
<div style="left:837px;top:83px;width:53px;height:16px;background:#3d3d3d;border-radius:3px 3px 0 0;border:1px solid #2c2c2c;border-bottom:none;box-shadow:inset 1px 1px 0 #484848"></div>
<span class="t" style="left:848px;top:85px;color:#b4b4b4;font-size:11px;letter-spacing:0.415px;">MASH</span>
<div style="left:892px;top:83px;width:108px;height:16px;background:#3d3d3d;border-radius:3px 3px 0 0;border:1px solid #2c2c2c;border-bottom:none;box-shadow:inset 1px 1px 0 #484848"></div>
<span class="t" style="left:903px;top:85px;color:#b4b4b4;font-size:11px;letter-spacing:0.307px;">Motion Graphics</span>
<div style="left:1002px;top:83px;width:49px;height:16px;background:#3d3d3d;border-radius:3px 3px 0 0;border:1px solid #2c2c2c;border-bottom:none;box-shadow:inset 1px 1px 0 #484848"></div>
<span class="t" style="left:1013px;top:85px;color:#b4b4b4;font-size:11px;letter-spacing:-0.029px;">XGen</span>
<div style="left:1053px;top:83px;width:83px;height:16px;background:#3d3d3d;border-radius:3px 3px 0 0;border:1px solid #2c2c2c;border-bottom:none;box-shadow:inset 1px 1px 0 #484848"></div>
<span class="t" style="left:1064.7px;top:85px;color:#b4b4b4;font-size:11px;letter-spacing:0.229px;">ngSkinTools</span>
<div style="left:37px;top:99px;width:1880px;height:46.5px;background:#444;"></div>
<div style="left:0px;top:145.5px;width:1920px;height:2px;background:#3c3c3c;"></div>
<svg style="left:46px;top:107px;" width="26" height="26" viewBox="0 0 26 26"><circle cx="13" cy="13" r="12" fill="#e5954d"/><path d="M1 13 A12 5 0 0 0 25 13 M2.5 7.5 A12 4 0 0 0 23.5 7.5 M2.5 18.5 A12 4 0 0 0 23.5 18.5 M13 1 V25 M13 1 A7 12 0 0 0 7 24 M13 1 A7 12 0 0 1 19 24" stroke="#5a4028" stroke-width="1" fill="none"/></svg>
<svg style="left:80px;top:107px;" width="26" height="26" viewBox="0 0 26 26"><path d="M13 0.5 L25 6 V19.5 L13 25.5 L1 19.5 V6Z" fill="#e5954d"/><path d="M1 6 L13 11.5 L25 6 M13 11.5 V25.5 M7 3.2 L19 8.8 V22.5 M19 3.2 L7 8.8 V22.5 M1 12.7 L13 18.5 L25 12.7" stroke="#5a4028" stroke-width="1" fill="none"/></svg>
<svg style="left:116px;top:107px;" width="26" height="26" viewBox="0 0 26 26"><path d="M2.5 6 A10.5 5 0 0 1 23.5 6 V20 A10.5 5 0 0 1 2.5 20Z" fill="#e5954d"/><path d="M2.5 6 A10.5 5 0 0 0 23.5 6 M2.5 13 A10.5 5 0 0 0 23.5 13 M13 11 V25 M7 10 V24 M19 10 V24 M13 6 L6 2.5 M13 6 L20 2.5 M13 6 V11" stroke="#5a4028" stroke-width="1" fill="none"/></svg>
<svg style="left:150px;top:107px;" width="26" height="26" viewBox="0 0 26 26"><path d="M13 1.5 L23 20 A10 4.5 0 0 1 3 20Z" fill="#e5954d"/><path d="M13 1.5 V24.5 M4 18 A10 3.5 0 0 0 22 18 M8.5 10 A5 2 0 0 0 17.500 10" stroke="#5a4028" stroke-width="1" fill="none"/></svg>
<svg style="left:186px;top:107px;" width="26" height="26" viewBox="0 0 26 26"><ellipse cx="13" cy="13" rx="10" ry="12.5" fill="#e5954d" transform="rotate(-25 13 13)"/><ellipse cx="13" cy="13" rx="2.6" ry="6.5" fill="#444" stroke="#5a4028" stroke-width="1" transform="rotate(-25 13 13)"/><path d="M3 9 L10 10 M9 2 L12.5 7.5 M20 4 L15 9 M23 15 L16 15 M17 24 L14 18.5 M7 22 L11 17" stroke="#5a4028" stroke-width="1" fill="none"/></svg>
<svg style="left:221px;top:107px;" width="26" height="26" viewBox="0 0 26 26"><path d="M13 1 L25 13 L13 25 L1 13Z" fill="#e5954d"/><path d="M7 7 L19 19 M19 7 L7 19" stroke="#5a4028" stroke-width="1" fill="none"/></svg>
<svg style="left:256px;top:107px;" width="26" height="26" viewBox="0 0 26 26"><ellipse cx="13" cy="13" rx="11.5" ry="7.5" fill="#e5954d"/><path d="M1.5 13 H24.500 M7 6.5 L19 19.5 M19 6.5 L7 19.5" stroke="#5a4028" stroke-width="1" fill="none"/></svg>
<div style="left:292px;top:103px;width:2px;height:36px;background:#8a8a8a;"></div>
<svg style="left:304px;top:107px;" width="26" height="26" viewBox="0 0 26 26"><path d="M12 0.5 L23.5 6.5 V19.5 L12 25.5 L0.5 19.5 V6.5Z" fill="#e5954d"/><path d="M12 0.5 L23.500 6.5 V19.5 L12 25.5 L0.5 19.5 V6.5Z M12 0.5 L5 8.5 H19Z M5 8.5 L12 21 L19 8.5 M0.500 6.500 L5 8.5 L0.5 19.5 L12 21 L23.5 19.5 L19 8.5 L23.5 6.5 M12 21 V25.5" stroke="#5a4028" stroke-width="1" fill="none"/><path d="M28 19 V26 H21Z" fill="#c8c8c8"/></svg>
<div style="left:339px;top:103px;width:2px;height:36px;background:#8a8a8a;"></div>
<svg style="left:350px;top:107px;" width="26" height="26" viewBox="0 0 26 26"><path d="M13 0 C14.5 8 18 11.500 26 13 C18 14.5 14.5 18 13 26 C11.5 18 8 14.5 0 13 C8 11.5 11.5 8 13 0Z" fill="#e5954d"/><path d="M28 19 V26 H21Z" fill="#c8c8c8"/></svg>
<svg style="left:385px;top:102px;" width="26" height="34" viewBox="0 0 26 34"><text x="13" y="30" text-anchor="middle" font-family="Liberation Serif,serif" font-weight="bold" font-size="33" fill="#e5954d" style="position:static">T</text></svg>
<div style="left:422px;top:109px;width:22px;height:22px;background:#e5954d;"></div>
<span class="t" style="left:423px;top:110.5px;color:#3c3028;font-size:12px;font-weight:bold;font-family:Liberation Sans,sans-serif;letter-spacing:-0.2pxmargin-top:0;">svg</span>
<div style="left:456px;top:103px;width:2px;height:36px;background:#8a8a8a;"></div>
<svg style="left:467px;top:107px;" width="26" height="26" viewBox="0 0 26 26"><path d="M13 1 V9 M3 23 L9 18.500 M23 23 L17 18.5" stroke="#4fc3d3" stroke-width="1.8"/><circle cx="13" cy="15" r="6.5" fill="none" stroke="#c8c8c8" stroke-width="1.6"/><circle cx="13" cy="15" r="2.6" fill="#c8c8c8"/><path d="M13 9 V12 M8 18.500 L10.5 16.8 M18 18.5 L15.5 16.8" stroke="#c8c8c8" stroke-width="1.4"/></svg>
<svg style="left:502px;top:107px;" width="26" height="26" viewBox="0 0 26 26"><circle cx="7" cy="7" r="6.5" fill="#4fc3d3"/><path d="M7 3 V7.500 H10.5" stroke="#444" stroke-width="1.4" fill="none"/><path d="M12 10.500 H22 M7 15.5 H22 M7 20.5 H9.5 M11.5 20.5 H15" stroke="#4fc3d3" stroke-width="1.3"/><path d="M17.500 18.500 L24.5 25 M24.5 18.5 L17.5 25" stroke="#c8c8c8" stroke-width="2"/></svg>
<svg style="left:537px;top:105px;" width="26" height="18" viewBox="0 0 26 18"><path d="M13 8.500 L13.0 0.0 M13.0 3.0 L10.7 1.3 M13.0 3.0 L15.3 1.3 M13 8.500 L21.7 4.3 M18.6 5.8 L19.2 3.2 M18.6 5.8 L21.4 6.6 M13 8.500 L21.7 12.8 M18.6 11.2 L21.4 10.4 M18.6 11.2 L19.2 13.8 M13 8.500 L13.0 17.0 M13.0 14.0 L15.3 15.7 M13.0 14.0 L10.7 15.7 M13 8.500 L4.3 12.8 M7.4 11.2 L6.8 13.8 M7.4 11.2 L4.6 10.4 M13 8.500 L4.3 4.2 M7.4 5.8 L4.6 6.6 M7.4 5.8 L6.8 3.2 " stroke="#c8c8c8" stroke-width="1.300" fill="none"/><circle cx="13" cy="8.500" r="1.800" fill="#c8c8c8"/></svg>
<div style="left:536px;top:122px;width:29px;height:13px;background:#4a4a4a;"></div>
<span class="t" style="left:537.5px;top:119.5px;color:#4fc3d3;font-size:12.5px;font-weight:bold;font-family:Liberation Sans,sans-serif;letter-spacing:-0.2pxmargin-top:0;">0,0,0</span>
<div style="left:573px;top:103px;width:2px;height:36px;background:#8a8a8a;"></div>
<svg style="left:584px;top:107px;" width="26" height="26" viewBox="0 0 26 26"><circle cx="13" cy="13" r="12" fill="none" stroke="#c8c8c8" stroke-width="1.2"/><path d="M13 5 L23 10.5 L13 16 L3 10.500Z" fill="#e5954d"/><path d="M13 11.500 L23 17 L13 22.5 L3 17Z" fill="#e5954d" stroke="#444" stroke-width=".8"/></svg>
<svg style="left:619px;top:107px;" width="26" height="26" viewBox="0 0 26 26"><rect x="4" y="1.500" width="9" height="9" fill="#c8c8c8"/><rect x="14.5" y="1.5" width="9" height="9" fill="#c8c8c8"/><rect x="14.5" y="12" width="9" height="9" fill="#c8c8c8"/><rect x="1.5" y="14.5" width="9.5" height="9.5" fill="#e5954d"/></svg>
<svg style="left:653px;top:107px;" width="26" height="26" viewBox="0 0 26 26"><path d="M0 7 L6 4 L11 6.500 V19 L6 22 L0 19Z" fill="#e5954d"/><path d="M0 7 L5.500 9.5 L11 6.5 M5.5 9.5 V22" stroke="#5a4028" stroke-width="1" fill="none"/><path d="M16 7 L22 4 L27 6.500 V19 L22 22 L16 19Z" fill="#e5954d"/><path d="M16 7 L21.5 9.5 L27 6.5 M21.5 9.5 V22" stroke="#5a4028" stroke-width="1" fill="none"/><path d="M13.5 0 V26" stroke="#e8e8e8" stroke-width="1.2" stroke-dasharray="3 1.5"/></svg>
<svg style="left:688px;top:107px;" width="26" height="26" viewBox="0 0 26 26"><rect x="0.500" y="9.500" width="7" height="7" fill="#c8c8c8"/><rect x="0.5" y="17.5" width="7" height="7" fill="#c8c8c8"/><rect x="8.5" y="17.5" width="7" height="7" fill="#c8c8c8"/><rect x="9" y="1" width="3.2" height="3.2" fill="#e5954d"/><rect x="9" y="5" width="3.2" height="3.2" fill="#e5954d"/><rect x="9" y="9" width="3.2" height="3.2" fill="#e5954d"/><rect x="9" y="13" width="3.2" height="3.2" fill="#e5954d"/><rect x="13" y="1" width="3.2" height="3.2" fill="#e5954d"/><rect x="13" y="5" width="3.2" height="3.2" fill="#e5954d"/><rect x="13" y="9" width="3.2" height="3.2" fill="#e5954d"/><rect x="13" y="13" width="3.2" height="3.2" fill="#e5954d"/><rect x="17" y="1" width="3.2" height="3.2" fill="#e5954d"/><rect x="17" y="5" width="3.2" height="3.2" fill="#e5954d"/><rect x="17" y="9" width="3.2" height="3.2" fill="#e5954d"/><rect x="17" y="13" width="3.2" height="3.2" fill="#e5954d"/><rect x="21" y="1" width="3.2" height="3.2" fill="#e5954d"/><rect x="21" y="5" width="3.2" height="3.2" fill="#e5954d"/><rect x="21" y="9" width="3.2" height="3.2" fill="#e5954d"/><rect x="21" y="13" width="3.2" height="3.2" fill="#e5954d"/></svg>
<svg style="left:723px;top:107px;" width="26" height="26" viewBox="0 0 26 26"><rect x="1" y="9.5" width="3.2" height="3.2" fill="#c8c8c8"/><rect x="1" y="13.5" width="3.2" height="3.2" fill="#c8c8c8"/><rect x="1" y="17.5" width="3.2" height="3.2" fill="#c8c8c8"/><rect x="1" y="21.5" width="3.2" height="3.2" fill="#c8c8c8"/><rect x="5" y="9.5" width="3.2" height="3.2" fill="#c8c8c8"/><rect x="5" y="13.5" width="3.2" height="3.2" fill="#c8c8c8"/><rect x="5" y="17.5" width="3.2" height="3.2" fill="#c8c8c8"/><rect x="5" y="21.5" width="3.2" height="3.2" fill="#c8c8c8"/><rect x="9" y="9.5" width="3.2" height="3.2" fill="#c8c8c8"/><rect x="9" y="13.5" width="3.2" height="3.2" fill="#c8c8c8"/><rect x="9" y="17.5" width="3.2" height="3.2" fill="#c8c8c8"/><rect x="9" y="21.5" width="3.2" height="3.2" fill="#c8c8c8"/><rect x="13" y="9.5" width="3.2" height="3.2" fill="#c8c8c8"/><rect x="13" y="13.5" width="3.2" height="3.2" fill="#c8c8c8"/><rect x="13" y="17.5" width="3.2" height="3.2" fill="#c8c8c8"/><rect x="13" y="21.5" width="3.2" height="3.2" fill="#c8c8c8"/><rect x="8.5" y="1" width="15.5" height="15.5" fill="#e5954d" stroke="#444" stroke-width=".8"/><path d="M16.3 1 V16.500 M8.500 8.700 H24" stroke="#444" stroke-width=".9"/></svg>
<svg style="left:759px;top:107px;" width="26" height="26" viewBox="0 0 26 26"><rect x="0.500" y="9.500" width="15" height="15" fill="#e5954d"/><path d="M0.500 9.500 L15.500 24.5" stroke="#5a4028" stroke-width="1" fill="none"/><path d="M15 3.5 A6 7 0 0 0 13.500 14 M21 3.500 A6 7 0 0 1 22.500 14" fill="none" stroke="#c8c8c8" stroke-width="2.2"/><path d="M12 4.500 L17.500 1.500 L16.500 6.500Z M25.500 12 L20.500 15.500 L20.500 11Z" fill="#c8c8c8"/></svg>
<svg style="left:794px;top:107px;" width="26" height="26" viewBox="0 0 26 26"><rect x="0.500" y="9.500" width="15" height="15" fill="#e5954d"/><path d="M8 9.500 V24.500 M0.500 17 H15.500" stroke="#444" stroke-width="1"/><path d="M15 3.5 A6 7 0 0 0 13.500 14 M21 3.500 A6 7 0 0 1 22.500 14" fill="none" stroke="#c8c8c8" stroke-width="2.2"/><path d="M12 4.500 L17.500 1.500 L16.500 6.500Z M25.500 12 L20.500 15.500 L20.500 11Z" fill="#c8c8c8"/></svg>
<div style="left:830px;top:103px;width:2px;height:36px;background:#8a8a8a;"></div>
<svg style="left:841px;top:107px;" width="26" height="26" viewBox="0 0 26 26"><path d="M8 14 L24 21 L15 26 L0 19Z" fill="#c8c8c8"/><path d="M8 18 L16 14" stroke="#444" stroke-width=".8"/><path d="M1 4 L7 1 L12 3.500 V19.500 L7 22 L1 19Z" fill="#e5954d"/><path d="M1 4 L6.500 6.500 L12 3.500 M6.500 6.500 V22" stroke="#5a4028" stroke-width="1" fill="none"/></svg>
<svg style="left:874px;top:107px;" width="31" height="27" viewBox="0 0 31 27"><path d="M8 0.5 L14.5 3.5 L8 6.5 L1.5 3.5Z" fill="#c8c8c8" /><path d="M22 7.5 L28.5 10.5 L22 13.5 L15.5 10.5Z" fill="#c8c8c8" /><path d="M8 9.5 L14.5 12.5 L8 15.5 L1.5 12.5Z" fill="#c8c8c8" /><path d="M15 13 L21.5 16 L15 19 L8.5 16Z" fill="#e5954d" /><path d="M22 16.5 L28.5 19.5 L22 22.5 L15.5 19.5Z" fill="#c8c8c8" /><path d="M22 20 L28.5 23 L22 26 L15.5 23Z" fill="#c8c8c8" /><path d="M15 4.500 L21.500 7.500 L15 10.500 L8.500 7.500Z" fill="none" stroke="#e5954d" stroke-width="1" stroke-dasharray="1.5 1"/></svg>
<svg style="left:912px;top:107px;" width="24" height="26" viewBox="0 0 24 26"><path d="M12 0.500 L23.500 6.500 V19.500 L12 25.500 L0.500 19.500 V6.500Z" fill="#e5954d"/><path d="M12 25.500 V14 M0.500 6.500 L12 12.500 L23.500 6.500" stroke="#c8c8c8" stroke-width="3" fill="none"/><path d="M12 12.500 l-2 -1 l2 -1 l2 1z" fill="#c8c8c8"/></svg>
<svg style="left:945px;top:107px;" width="26" height="26" viewBox="0 0 26 26"><rect x="3" y="10" width="14" height="14" fill="#c8c8c8"/><path d="M10 10 V24 M3 17 H17" stroke="#444" stroke-width=".9"/><path d="M12 0.500 H26 V15 L16 13.500 L13.500 10Z" fill="#e5954d" stroke="#444" stroke-width=".8"/><path d="M19 0.500 V7.500 H26 M19 7.500 L15 12" stroke="#444" stroke-width=".9" fill="none"/><rect x="0.5" y="15.5" width="3" height="3" fill="#444" stroke="#c8c8c8" stroke-width=".9"/><rect x="0.5" y="23" width="3" height="3" fill="#444" stroke="#c8c8c8" stroke-width=".9"/><rect x="8.5" y="23" width="3" height="3" fill="#444" stroke="#c8c8c8" stroke-width=".9"/><rect x="13" y="11" width="3" height="3" fill="#444" stroke="#c8c8c8" stroke-width=".9"/></svg>
<svg style="left:980px;top:107px;" width="26" height="26" viewBox="0 0 26 26"><circle cx="13" cy="13" r="12" fill="#e5954d"/><circle cx="13" cy="13" r="8" fill="none" stroke="#5a4028" stroke-width="1"/><path d="M13 1 V25 M1 13 H25 M4.500 4.500 L21.500 21.500 M21.500 4.500 L4.500 21.500" stroke="#5a4028" stroke-width="1" fill="none"/></svg>
<svg style="left:1016px;top:107px;" width="26" height="26" viewBox="0 0 26 26"><rect x="10" y="0.500" width="15" height="15" fill="#c8c8c8"/><path d="M10 15.500 L25 0.500" stroke="#444" stroke-width=".9"/><rect x="0.500" y="9.500" width="15.500" height="15.500" fill="#e5954d" stroke="#444" stroke-width=".8"/><path d="M0.500 9.500 L16 25" stroke="#5a4028" stroke-width="1" fill="none"/></svg>
<svg style="left:1050px;top:107px;" width="28" height="26" viewBox="0 0 28 26"><path d="M14 7 L27 13.500 L14 20 L1 13.500Z" fill="#c8c8c8"/><path d="M7.500 10 L20.500 17 M20.500 10 L7.500 17" stroke="#444" stroke-width=".9"/><path d="M7.500 8 L14 11 L7.500 14.500 L0.500 11Z" fill="#e5954d" stroke="#444" stroke-width=".7"/><path d="M7.500 4 L14 7 L7.500 10.500 L0.500 7Z" fill="#e5954d" stroke="#444" stroke-width=".7"/></svg>
<svg style="left:1087px;top:108px;" width="25" height="25" viewBox="0 0 25 25"><rect x="2" y="2" width="21" height="21" fill="none" stroke="#c8c8c8" stroke-width="1.2"/><path d="M3 3 L10 10 M22 3 L15 10 M3 22 L10 15 M22 22 L15 15" stroke="#e5954d" stroke-width="1.2"/><rect x="10" y="10" width="5" height="5" fill="none" stroke="#e5954d" stroke-width="1.3"/><rect x="0.3" y="0.3" width="3.400" height="3.400" fill="#444" stroke="#c8c8c8" stroke-width="1"/><rect x="21.3" y="0.3" width="3.400" height="3.400" fill="#444" stroke="#c8c8c8" stroke-width="1"/><rect x="0.3" y="21.3" width="3.400" height="3.400" fill="#444" stroke="#c8c8c8" stroke-width="1"/><rect x="21.3" y="21.3" width="3.400" height="3.400" fill="#444" stroke="#c8c8c8" stroke-width="1"/></svg>
<svg style="left:1120px;top:107px;" width="26" height="26" viewBox="0 0 26 26"><rect x="0.5" y="10.5" width="3.900" height="3.900" fill="#c8c8c8"/><rect x="0.5" y="15.2" width="3.900" height="3.900" fill="#c8c8c8"/><rect x="0.5" y="19.9" width="3.900" height="3.900" fill="#c8c8c8"/><rect x="5.2" y="10.5" width="3.900" height="3.900" fill="#c8c8c8"/><rect x="5.2" y="15.2" width="3.900" height="3.900" fill="#c8c8c8"/><rect x="5.2" y="19.9" width="3.900" height="3.900" fill="#c8c8c8"/><rect x="9.9" y="10.5" width="3.900" height="3.900" fill="#c8c8c8"/><rect x="9.9" y="15.2" width="3.900" height="3.900" fill="#c8c8c8"/><rect x="9.9" y="19.9" width="3.900" height="3.900" fill="#c8c8c8"/><circle cx="16" cy="9" r="8.500" fill="#e5954d" stroke="#444" stroke-width=".8"/><path d="M13 1 V17 M19 1 V17 M8 6 H24 M8 12 H24" stroke="#444" stroke-width=".9"/></svg>
<div style="left:1157px;top:103px;width:2px;height:36px;background:#8a8a8a;"></div>
<svg style="left:1167px;top:106px;" width="29" height="28" viewBox="0 0 29 28"><path d="M2 9 L18 2.500 M2 9 V26" stroke="#e5954d" stroke-width="1.100" fill="none"/><path d="M26 5 L15 17" stroke="#c8c8c8" stroke-width="4.500" stroke-linecap="round"/><path d="M14 14 L18 18.500 L3 26Z" fill="#c8c8c8"/><rect x="0.6" y="7.6" width="2.800" height="2.800" fill="#444" stroke="#e5954d" stroke-width=".9"/><rect x="16.6" y="1.2" width="2.800" height="2.800" fill="#444" stroke="#e5954d" stroke-width=".9"/><rect x="0.6" y="24.6" width="2.800" height="2.800" fill="#444" stroke="#e5954d" stroke-width=".9"/></svg>
<svg style="left:1202px;top:108px;" width="25" height="25" viewBox="0 0 25 25"><path d="M2 2.500 H23 M2 22.500 H23 M2 2.500 V22.500 M23 2.500 V22.500" stroke="#c8c8c8" stroke-width="1"/><path d="M12.500 2.500 V22.500" stroke="#e5954d" stroke-width="1.200"/><rect x="0.5" y="1" width="3" height="3" fill="#444" stroke="#c8c8c8" stroke-width=".9"/><rect x="21.5" y="1" width="3" height="3" fill="#444" stroke="#c8c8c8" stroke-width=".9"/><rect x="0.5" y="21" width="3" height="3" fill="#444" stroke="#c8c8c8" stroke-width=".9"/><rect x="21.5" y="21" width="3" height="3" fill="#444" stroke="#c8c8c8" stroke-width=".9"/><rect x="10.3" y="0.3" width="4.400" height="4.400" fill="#444" stroke="#e5954d" stroke-width="1.100"/><rect x="10.3" y="20.3" width="4.400" height="4.400" fill="#444" stroke="#e5954d" stroke-width="1.100"/></svg>
<svg style="left:1237px;top:106px;" width="29" height="28" viewBox="0 0 29 28"><path d="M2 3.500 H10 V12.500 H2Z" fill="none" stroke="#c8c8c8" stroke-width="1" stroke-dasharray="2 1.500"/><rect x="0.5" y="2" width="3" height="3" fill="#c8c8c8"/><rect x="8.5" y="2" width="3" height="3" fill="#c8c8c8"/><rect x="0.5" y="11" width="3" height="3" fill="#c8c8c8"/><rect x="8.5" y="11" width="3" height="3" fill="#c8c8c8"/><rect x="0.500" y="20" width="3.200" height="3.200" fill="#e5954d"/><path d="M25 6 L14 17.500" stroke="#c8c8c8" stroke-width="4.200" stroke-linecap="round"/><path d="M12 15.500 L16 19.500 L9 23Z" fill="#c8c8c8"/><path d="M9 20 l2 2" stroke="#e5954d" stroke-width="1"/></svg>
<div style="left:1274px;top:103px;width:2px;height:36px;background:#8a8a8a;"></div>
<svg style="left:1286px;top:107px;" width="26" height="26" viewBox="0 0 26 26"><rect x="0.500" y="1" width="22" height="22" fill="#5fb08c"/><rect x="13.2" y="13.7" width="10.9" height="10.9" fill="#444"/><rect x="14.0" y="14.5" width="3.1" height="3.1" fill="#e0e0e0"/><rect x="14.0" y="17.6" width="3.1" height="3.1" fill="#444"/><rect x="14.0" y="20.7" width="3.1" height="3.1" fill="#e0e0e0"/><rect x="17.1" y="14.5" width="3.1" height="3.1" fill="#444"/><rect x="17.1" y="17.6" width="3.1" height="3.1" fill="#e0e0e0"/><rect x="17.1" y="20.7" width="3.1" height="3.1" fill="#444"/><rect x="20.2" y="14.5" width="3.1" height="3.1" fill="#e0e0e0"/><rect x="20.2" y="17.6" width="3.1" height="3.1" fill="#444"/><rect x="20.2" y="20.7" width="3.1" height="3.1" fill="#e0e0e0"/></svg>
<svg style="left:1321px;top:107px;" width="27" height="26" viewBox="0 0 27 26"><path d="M0.500 2 Q11 9 22.500 2 V22 Q11 27 0.500 20Z" fill="#5fb08c"/><rect x="14.2" y="13.7" width="10.9" height="10.9" fill="#444"/><rect x="15.0" y="14.5" width="3.1" height="3.1" fill="#e0e0e0"/><rect x="15.0" y="17.6" width="3.1" height="3.1" fill="#444"/><rect x="15.0" y="20.7" width="3.1" height="3.1" fill="#e0e0e0"/><rect x="18.1" y="14.5" width="3.1" height="3.1" fill="#444"/><rect x="18.1" y="17.6" width="3.1" height="3.1" fill="#e0e0e0"/><rect x="18.1" y="20.7" width="3.1" height="3.1" fill="#444"/><rect x="21.2" y="14.5" width="3.1" height="3.1" fill="#e0e0e0"/><rect x="21.2" y="17.6" width="3.1" height="3.1" fill="#444"/><rect x="21.2" y="20.7" width="3.1" height="3.1" fill="#e0e0e0"/></svg>
<svg style="left:1356px;top:107px;" width="27" height="26" viewBox="0 0 27 26"><path d="M3 3 Q12 10 21 3 A12 12 0 1 1 3 3Z" fill="#5fb08c"/><rect x="14.7" y="13.7" width="10.9" height="10.9" fill="#444"/><rect x="15.5" y="14.5" width="3.1" height="3.1" fill="#e0e0e0"/><rect x="15.5" y="17.6" width="3.1" height="3.1" fill="#444"/><rect x="15.5" y="20.7" width="3.1" height="3.1" fill="#e0e0e0"/><rect x="18.6" y="14.5" width="3.1" height="3.1" fill="#444"/><rect x="18.6" y="17.6" width="3.1" height="3.1" fill="#e0e0e0"/><rect x="18.6" y="20.7" width="3.1" height="3.1" fill="#444"/><rect x="21.7" y="14.5" width="3.1" height="3.1" fill="#e0e0e0"/><rect x="21.7" y="17.6" width="3.1" height="3.1" fill="#444"/><rect x="21.7" y="20.7" width="3.1" height="3.1" fill="#e0e0e0"/></svg>
<svg style="left:1391px;top:106px;" width="27" height="27" viewBox="0 0 27 27"><path d="M12.500 0.500 L24 6.500 V20 L12.500 26.500 L1 20 V6.500Z" fill="#5fb08c"/><path d="M1 6.500 L12.500 12.500 L24 6.500 M12.500 12.500 V26.500" stroke="#444" stroke-width="1.300" fill="none"/><rect x="14.7" y="14.2" width="10.9" height="10.9" fill="#444"/><rect x="15.5" y="15.0" width="3.1" height="3.1" fill="#e0e0e0"/><rect x="15.5" y="18.1" width="3.1" height="3.1" fill="#444"/><rect x="15.5" y="21.2" width="3.1" height="3.1" fill="#e0e0e0"/><rect x="18.6" y="15.0" width="3.1" height="3.1" fill="#444"/><rect x="18.6" y="18.1" width="3.1" height="3.1" fill="#e0e0e0"/><rect x="18.6" y="21.2" width="3.1" height="3.1" fill="#444"/><rect x="21.7" y="15.0" width="3.1" height="3.1" fill="#e0e0e0"/><rect x="21.7" y="18.1" width="3.1" height="3.1" fill="#444"/><rect x="21.7" y="21.2" width="3.1" height="3.1" fill="#e0e0e0"/></svg>
<svg style="left:1426px;top:107px;" width="27" height="26" viewBox="0 0 27 26"><path d="M3 22 C-2 10 10 12 14 10 C18 8 20 5 20 1" fill="none" stroke="#5fb08c" stroke-width="3"/><path d="M8 24 C4 14 12 16 17 13 C21 11 23 8 23 3" fill="none" stroke="#5fb08c" stroke-width="3"/><rect x="14.7" y="13.7" width="10.9" height="10.9" fill="#444"/><rect x="15.5" y="14.5" width="3.1" height="3.1" fill="#e0e0e0"/><rect x="15.5" y="17.6" width="3.1" height="3.1" fill="#444"/><rect x="15.5" y="20.7" width="3.1" height="3.1" fill="#e0e0e0"/><rect x="18.6" y="14.5" width="3.1" height="3.1" fill="#444"/><rect x="18.6" y="17.6" width="3.1" height="3.1" fill="#e0e0e0"/><rect x="18.6" y="20.7" width="3.1" height="3.1" fill="#444"/><rect x="21.7" y="14.5" width="3.1" height="3.1" fill="#e0e0e0"/><rect x="21.7" y="17.6" width="3.1" height="3.1" fill="#444"/><rect x="21.7" y="20.7" width="3.1" height="3.1" fill="#e0e0e0"/></svg>
<svg style="left:1460px;top:107px;" width="26" height="26" viewBox="0 0 26 26"><rect x="0.500" y="0.500" width="25" height="24.500" fill="#5fb08c"/><rect x="0.500" y="0.500" width="25" height="4" fill="#e0e0e0"/><rect x="2" y="1.800" width="1.500" height="1.500" fill="#444"/><rect x="4.500" y="1.800" width="1.500" height="1.500" fill="#444"/><rect x="7" y="1.800" width="1.500" height="1.500" fill="#444"/><rect x="5.7" y="7.7" width="13.6" height="13.6" fill="#444"/><rect x="6.5" y="8.5" width="4" height="4" fill="#e0e0e0"/><rect x="6.5" y="12.5" width="4" height="4" fill="#444"/><rect x="6.5" y="16.5" width="4" height="4" fill="#e0e0e0"/><rect x="10.5" y="8.5" width="4" height="4" fill="#444"/><rect x="10.5" y="12.5" width="4" height="4" fill="#e0e0e0"/><rect x="10.5" y="16.5" width="4" height="4" fill="#444"/><rect x="14.5" y="8.5" width="4" height="4" fill="#e0e0e0"/><rect x="14.5" y="12.5" width="4" height="4" fill="#444"/><rect x="14.5" y="16.5" width="4" height="4" fill="#e0e0e0"/></svg>
<svg style="left:1494px;top:109px;" width="29" height="24" viewBox="0 0 29 24"><path d="M2 2 Q14 14 2 22 M27 2 Q14 14 27 22" fill="none" stroke="#5fb08c" stroke-width="2.600"/><path d="M0 0 L7 1 L1 7Z M29 0 L22 1 L28 7Z M0 24 L1 17 L7 23Z M29 24 L28 17 L22 23Z" fill="#5fb08c"/><rect x="9.7" y="1.2" width="9.700000000000001" height="9.700000000000001" fill="#444"/><rect x="10.5" y="2.0" width="2.7" height="2.7" fill="#e0e0e0"/><rect x="10.5" y="4.7" width="2.7" height="2.7" fill="#444"/><rect x="10.5" y="7.4" width="2.7" height="2.7" fill="#e0e0e0"/><rect x="13.2" y="2.0" width="2.7" height="2.7" fill="#444"/><rect x="13.2" y="4.7" width="2.7" height="2.7" fill="#e0e0e0"/><rect x="13.2" y="7.4" width="2.7" height="2.7" fill="#444"/><rect x="15.9" y="2.0" width="2.7" height="2.7" fill="#e0e0e0"/><rect x="15.9" y="4.7" width="2.7" height="2.7" fill="#444"/><rect x="15.9" y="7.4" width="2.7" height="2.7" fill="#e0e0e0"/></svg>
<svg style="left:1529px;top:106px;" width="28" height="28" viewBox="0 0 28 28"><path d="M3 24 C-1 12 6 2 16 3 C22 3 25 8 25 8" fill="none" stroke="#5fb08c" stroke-width="1"/><path d="M25 2 L5 24" stroke="#c8c8c8" stroke-width="3.200" stroke-linecap="round"/><path d="M3 3 L23 24" stroke="#c8c8c8" stroke-width="2.400" stroke-linecap="round"/><path d="M12 15 L23 26 L17 15Z" fill="#e8e8e8"/><circle cx="3.500" cy="3.500" r="2" fill="none" stroke="#c8c8c8" stroke-width="1.200"/></svg>
<div style="left:1900px;top:103px;width:12px;height:35px;background:#3a3a3a;"></div>
<svg style="left:1902px;top:106px;" width="9" height="5" viewBox="0 0 9 5"><path d="M0 5 L9 5 L4.500 0Z" fill="#bbb"/></svg>
<div style="left:1901px;top:115px;width:10px;height:10px;background:#6a6a6a;border-radius:5px"></div>
<svg style="left:1902px;top:129px;" width="9" height="5" viewBox="0 0 9 5"><path d="M0 0 L9 0 L4.500 5Z" fill="#bbb"/></svg>
<!-- toolbox -->
<div style="left:0px;top:147px;width:1920px;height:753px;background:#3c3c3c;"></div>
<div style="left:0px;top:147px;width:45px;height:753px;background:#444;"></div>
<div style="left:2px;top:151px;width:39px;height:6px;background-image:radial-gradient(circle at 1px 1px,#707070 0.7px,transparent 0.9px);background-size:3px 3px"></div>
<div style="left:4px;top:160px;width:36px;height:36px;background:#5285a6;"></div>
<svg style="left:4px;top:160px;" width="36" height="36" viewBox="0 0 36 36"><path d="M12 5 L12 27 L17.5 22 L21.5 31 L25.5 29 L21.5 20.5 L29 20.500Z" fill="#d4d4d4" stroke="#3a3a3a" stroke-width="1.2"/></svg>
<svg style="left:4px;top:197px;" width="36" height="36" viewBox="0 0 36 36"><ellipse cx="16" cy="14" rx="11" ry="7.5" fill="none" stroke="#45b8c8" stroke-width="2" stroke-dasharray="4.5 2.500" transform="rotate(-20 16 14)"/><path d="M18 12 L18 30 L22.5 26 L25.500 33 L29 31.500 L26 24.500 L32 24.500Z" fill="#d4d4d4" stroke="#444" stroke-width="1.2"/></svg>
<svg style="left:4px;top:233px;" width="36" height="36" viewBox="0 0 36 36"><ellipse cx="15" cy="22" rx="10.5" ry="7" fill="none" stroke="#45b8c8" stroke-width="2" stroke-dasharray="4.5 2.500" transform="rotate(25 15 22)"/><path d="M31 6 L22 15" stroke="#c8c8c8" stroke-width="2.600" stroke-linecap="round"/><path d="M23 13 L26 16.500 C23 20 18 22 14 21 C16 19 17 15 23 13Z" fill="#c8c8c8" stroke="#444" stroke-width=".8"/></svg>
<svg style="left:4px;top:271px;" width="36" height="36" viewBox="0 0 36 36"><rect x="12" y="12" width="12" height="12" fill="#c8c8c8"/><path d="M18 3.500 L22 8 H14Z M18 32.500 L22 28 H14Z M4.500 18 L8.500 14 V22Z M32 18 L28 14 V22Z" fill="#45b8c8"/></svg>
<svg style="left:4px;top:307px;" width="36" height="36" viewBox="0 0 36 36"><path d="M18 9.500 L27 18.500 L18 27.500 L9 18.500Z" fill="#c8c8c8"/><path d="M14 32 A14 14 0 1 1 32.500 20" fill="none" stroke="#45b8c8" stroke-width="1.500"/><path d="M29.500 19 L35.500 19 L32.500 24Z" fill="#45b8c8"/></svg>
<svg style="left:4px;top:344px;" width="36" height="36" viewBox="0 0 36 36"><rect x="6.500" y="6" width="25" height="25" fill="none" stroke="#45b8c8" stroke-width="1.300" stroke-dasharray="3.500 2"/><rect x="6" y="21" width="11" height="11" fill="#c8c8c8"/><path d="M17 17 H22 V22" fill="none" stroke="#45b8c8" stroke-width="1.300"/></svg>
<svg style="left:8px;top:421px;" width="28" height="32" viewBox="0 0 28 32"><path d="M5 15 A9 9 0 0 1 11 9.500 M17 9.500 A9 9 0 0 1 22 22" fill="none" stroke="#c8c8c8" stroke-width="1.800"/><path d="M18 21 L24.500 21.500 L20.500 26.500Z" fill="#c8c8c8"/><path d="M14 2 V15" stroke="#e5954d" stroke-width="1.200"/><rect x="11.800" y="15" width="4.400" height="4.400" fill="none" stroke="#e5954d" stroke-width="1.200"/></svg>
<div style="left:4px;top:460px;width:36px;height:2px;background:#7a7a7a;"></div>
<div style="left:8px;top:471px;width:28px;height:28px;background:#444;border:2px solid #c4c4c4;"></div>
<div style="left:10px;top:473px;width:24px;height:24px;background:#c4c4c4;border:1.5px solid #444"></div>
<svg style="left:10px;top:473px;" width="24" height="24" viewBox="0 0 24 24"><path d="M12 5.02 L16 7.5 L12 9.98 L8 7.5Z" fill="#444"/><path d="M7 9.52 L11 12 L7 14.48 L3 12Z" fill="#444"/><path d="M17 9.52 L21 12 L17 14.48 L13 12Z" fill="#444"/><path d="M12 14.02 L16 16.5 L12 18.98 L8 16.5Z" fill="#444"/></svg>
<svg style="left:8px;top:508px;" width="28" height="28" viewBox="0 0 28 28"><rect x="0.6" y="0.6" width="12" height="12" fill="#444" stroke="#c4c4c4" stroke-width="1.200"/><path d="M6.6 3.1 V10.1 M3.1 6.6 H10.1" stroke="#e0e0e0" stroke-width="1.200"/><rect x="0.6" y="15.4" width="12" height="12" fill="#444" stroke="#c4c4c4" stroke-width="1.200"/><path d="M6.6 17.9 V24.9 M3.1 21.4 H10.1" stroke="#e0e0e0" stroke-width="1.200"/><rect x="15.4" y="15.4" width="12" height="12" fill="#444" stroke="#c4c4c4" stroke-width="1.200"/><path d="M21.4 17.9 V24.9 M17.9 21.4 H24.9" stroke="#e0e0e0" stroke-width="1.200"/><rect x="15" y="0" width="13" height="13" fill="#c4c4c4"/><path d="M21.5 4.268 L25.1 6.5 L21.5 8.732 L17.9 6.5Z" fill="#333"/></svg>
<svg style="left:8px;top:545px;" width="28" height="28" viewBox="0 0 28 28"><rect x="0.600" y="0.600" width="12" height="26.800" fill="#444" stroke="#c4c4c4" stroke-width="1.200"/><path d="M6.600 10.500 V17.500 M3.100 14 H10.100" stroke="#e0e0e0" stroke-width="1.200"/><rect x="15" y="0" width="13" height="28" fill="#c4c4c4"/><path d="M21.5 11.768 L25.1 14 L21.5 16.232 L17.9 14Z" fill="#333"/></svg>
<div style="left:4px;top:578px;width:36px;height:36px;background:#5285a6;"></div>
<svg style="left:4px;top:578px;" width="36" height="36" viewBox="0 0 36 36"><rect x="3.700" y="3.600" width="28.600" height="28.600" fill="#3a3432"/><rect x="4.700" y="4.600" width="26.600" height="26.600" fill="#e6e6e6"/><rect x="6" y="5.900" width="24" height="24" fill="#3a3432"/><rect x="7" y="6.900" width="22" height="22" fill="#5285a6"/><rect x="10.200" y="12" width="1.800" height="17" fill="#c4d4e4"/><rect x="12.1" y="8.2" width="12.200000000000001" height="2.800" fill="#3a3432"/><rect x="12.1" y="8.8" width="11.4" height="1.600" fill="#e6e6e6"/><rect x="8.1" y="7.3" width="4.600" height="4.600" fill="#3a3432"/><rect x="8.9" y="8.1" width="3" height="3" fill="#e6e6e6"/><rect x="11" y="13.799999999999999" width="3.500" height="1.300" fill="#c4d4e4"/><rect x="18.1" y="13.1" width="10.299999999999999" height="2.800" fill="#3a3432"/><rect x="18.1" y="13.7" width="9.499999999999998" height="1.600" fill="#e6e6e6"/><rect x="14.1" y="12.2" width="4.600" height="4.600" fill="#3a3432"/><rect x="14.9" y="13.0" width="3" height="3" fill="#e6e6e6"/><rect x="11" y="19.900000000000002" width="3.500" height="1.300" fill="#c4d4e4"/><rect x="18.1" y="19.2" width="7.299999999999999" height="2.800" fill="#3a3432"/><rect x="18.1" y="19.8" width="6.499999999999999" height="1.600" fill="#e6e6e6"/><rect x="14.1" y="18.3" width="4.600" height="4.600" fill="#3a3432"/><rect x="14.9" y="19.1" width="3" height="3" fill="#e6e6e6"/><rect x="11" y="25.900000000000002" width="3.500" height="1.300" fill="#c4d4e4"/><rect x="18.1" y="25.2" width="9.200000000000001" height="2.800" fill="#3a3432"/><rect x="18.1" y="25.8" width="8.4" height="1.600" fill="#e6e6e6"/><rect x="14.1" y="24.3" width="4.600" height="4.600" fill="#3a3432"/><rect x="14.9" y="25.1" width="3" height="3" fill="#e6e6e6"/></svg>
<svg style="left:5.5px;top:866px" width="33.2" height="30" viewBox="0 0 35.2 33"><defs><linearGradient id="mA1" x1="0" y1="0" x2="1" y2="1"><stop offset="0" stop-color="#a8dcdc"/><stop offset="1" stop-color="#4aa4a8"/></linearGradient><linearGradient id="mB1" x1="0" y1="0" x2="0" y2="1"><stop offset="0" stop-color="#0f8f98"/><stop offset="1" stop-color="#2cc4c4"/></linearGradient><linearGradient id="mC1" x1="1" y1="0" x2="0" y2="1"><stop offset="0" stop-color="#1fb8bc"/><stop offset="1" stop-color="#0c7884"/></linearGradient></defs><path d="M0 0.800 L8.400 9 V32 L0 33Z" fill="url(#mB1)"/><path d="M0 33 L8.400 17 V32Z" fill="#16707e"/><path d="M35.200 0.800 V33 L26.500 32 V17Z" fill="url(#mB1)"/><path d="M35.200 0.800 L26.500 32 V17Z" fill="#157686" opacity=".85"/><path d="M24.500 0.800 H35.200 L26.500 17 L21.500 24.400 L15.700 26.300 Z" fill="url(#mC1)"/><path d="M0 0.800 L10.300 0 L21.500 24.400 L15.700 26.300 Z" fill="url(#mA1)"/></svg>
<!-- outliner -->
<div style="left:45px;top:147px;width:4px;height:753px;background:#393939;"></div>
<div style="left:48px;top:150px;width:271px;height:16px;background:#373737;"></div>
<div style="left:48px;top:150px;width:64px;height:17px;background:#444;border-radius:3px 3px 0 0"></div>
<span class="t" style="left:58.3px;top:152px;color:#eee;font-size:11px;letter-spacing:0.353px;">Outliner</span>
<div style="left:48px;top:166px;width:271px;height:731px;background:#444;"></div>
<div style="left:319px;top:147px;width:4px;height:753px;background:#393939;"></div>
<span class="t" style="left:57.4px;top:170px;color:#e0e0e0;font-size:11px;letter-spacing:0.045px;">Display</span>
<span class="t" style="left:109.2px;top:170px;color:#e0e0e0;font-size:11px;letter-spacing:0.524px;">Show</span>
<span class="t" style="left:153px;top:170px;color:#e0e0e0;font-size:11px;letter-spacing:0.257px;">Help</span>
<svg style="left:55px;top:193px;" width="15" height="16" viewBox="0 0 15 16"><path d="M4 1.500 H11 M4 14.500 H11 M2 4 V12 M13 4 V12" stroke="#666" stroke-width="1.100" stroke-dasharray="2.500 1.500"/><path d="M0 0 L5 2.500 L0 5Z M0 11 L5 13.500 L0 16Z M10 2.500 L15 0 V5Z M10 13.500 L15 11 V16Z" fill="#606060"/></svg>
<div style="left:77px;top:193px;width:237px;height:18px;background:#2b2b2b;border-radius:3px"></div>
<span class="t" style="left:80.5px;top:195.5px;color:#8c8c8c;font-size:11px;letter-spacing:-0.156px;">Search...</span>
<svg style="left:300px;top:199px;" width="10" height="6" viewBox="0 0 10 6"><path d="M0 0 L10 0 L5 6Z" fill="#d0d0d0"/></svg>
<div style="left:50px;top:213px;width:265px;height:680px;background:#373737;"></div>
<svg style="left:305px;top:216px;" width="9" height="5" viewBox="0 0 9 5"><path d="M0 5 L9 5 L4.500 0Z" fill="#c4c4c4"/></svg>
<div style="left:305px;top:226px;width:10px;height:642px;background:#5d5d5d;border-radius:5px"></div>
<svg style="left:305px;top:872px;" width="9" height="5" viewBox="0 0 9 5"><path d="M0 0 L9 0 L4.500 5Z" fill="#c4c4c4"/></svg>
<svg style="left:84.5px;top:216.5px;" width="17" height="13" viewBox="0 0 17 13"><path d="M8.3 0.9000000000000004 L12.0 3.2 L8.3 5.5 L4.6000000000000005 3.2Z" fill="#d8d8d8"/><path d="M4.2 4.2 L7.9 6.5 L4.2 8.8 L0.5 6.5Z" fill="#d8d8d8"/><path d="M12.4 4.2 L16.1 6.5 L12.4 8.8 L8.7 6.5Z" fill="#d8d8d8"/><path d="M8.3 7.500000000000001 L12.0 9.8 L8.3 12.100000000000001 L4.6000000000000005 9.8Z" fill="#d8d8d8"/></svg>
<span class="t" style="left:104.5px;top:216px;color:#dcdcdc;font-size:11px;letter-spacing:0.288px;">SK_Mannequin</span>
<svg style="left:85px;top:236.5px;" width="17" height="13" viewBox="0 0 17 13"><path d="M5 0.500 H16.500 L12 12.500 H0.500Z" fill="#c4c4c4"/><path d="M0 6 H9" stroke="#e03030" stroke-width="1.400"/><path d="M7.500 3 L12 6 L7.500 9Z" fill="#e03030"/></svg>
<svg style="left:71px;top:238px;" width="9" height="9" viewBox="0 0 9 9"><rect x="0.500" y="0.500" width="8" height="8" fill="none" stroke="#aaa" stroke-width="1"/><path d="M4.500 2 V7 M2 4.500 H7" stroke="#ddd" stroke-width="1"/></svg>
<span class="t" style="left:104.5px;top:236px;color:#dcdcdc;font-size:11px;letter-spacing:-0.148px;">Plane_01</span>
<svg style="left:85px;top:256.5px;" width="17" height="13" viewBox="0 0 17 13"><path d="M5 0.500 H16.500 L12 12.500 H0.500Z" fill="#c4c4c4"/><path d="M0 6 H9" stroke="#e03030" stroke-width="1.400"/><path d="M7.500 3 L12 6 L7.500 9Z" fill="#e03030"/></svg>
<svg style="left:71px;top:258px;" width="9" height="9" viewBox="0 0 9 9"><rect x="0.500" y="0.500" width="8" height="8" fill="none" stroke="#aaa" stroke-width="1"/><path d="M4.500 2 V7 M2 4.500 H7" stroke="#ddd" stroke-width="1"/></svg>
<span class="t" style="left:104.5px;top:256px;color:#dcdcdc;font-size:11px;letter-spacing:0.456px;">group</span>
<svg style="left:84.5px;top:276.5px;" width="17" height="13" viewBox="0 0 17 13"><path d="M8.3 0.9000000000000004 L12.0 3.2 L8.3 5.5 L4.6000000000000005 3.2Z" fill="#d8d8d8"/><path d="M4.2 4.2 L7.9 6.5 L4.2 8.8 L0.5 6.5Z" fill="#d8d8d8"/><path d="M12.4 4.2 L16.1 6.5 L12.4 8.8 L8.7 6.5Z" fill="#d8d8d8"/><path d="M8.3 7.500000000000001 L12.0 9.8 L8.3 12.100000000000001 L4.6000000000000005 9.8Z" fill="#d8d8d8"/></svg>
<span class="t" style="left:104.5px;top:276px;color:#dcdcdc;font-size:11px;letter-spacing:0.005px;">polySurface4</span>
<svg style="left:84.5px;top:296.5px;" width="17" height="13" viewBox="0 0 17 13"><path d="M8.3 0.9000000000000004 L12.0 3.2 L8.3 5.5 L4.6000000000000005 3.2Z" fill="#d8d8d8"/><path d="M4.2 4.2 L7.9 6.5 L4.2 8.8 L0.5 6.5Z" fill="#d8d8d8"/><path d="M12.4 4.2 L16.1 6.5 L12.4 8.8 L8.7 6.5Z" fill="#d8d8d8"/><path d="M8.3 7.500000000000001 L12.0 9.8 L8.3 12.100000000000001 L4.6000000000000005 9.8Z" fill="#d8d8d8"/></svg>
<span class="t" style="left:104.5px;top:296px;color:#dcdcdc;font-size:11px;letter-spacing:0.070px;">pasted__polySurface4</span>
<div style="left:50px;top:313px;width:253px;height:20px;background:#5285a6;"></div>
<svg style="left:84.5px;top:316.5px;" width="17" height="13" viewBox="0 0 17 13"><path d="M8.500 -1 L18 6.500 L8.500 14 L-1 6.500Z" fill="none" stroke="#333" stroke-width="1"/><path d="M8.3 0.9000000000000004 L12.0 3.2 L8.3 5.5 L4.6000000000000005 3.2Z" fill="#d8d8d8"/><path d="M4.2 4.2 L7.9 6.5 L4.2 8.8 L0.5 6.5Z" fill="#d8d8d8"/><path d="M12.4 4.2 L16.1 6.5 L12.4 8.8 L8.7 6.5Z" fill="#d8d8d8"/><path d="M8.3 7.500000000000001 L12.0 9.8 L8.3 12.100000000000001 L4.6000000000000005 9.8Z" fill="#d8d8d8"/></svg>
<span class="t" style="left:104.5px;top:316px;color:#ffffff;font-size:11px;letter-spacing:0.070px;">pasted__polySurface5</span>
<svg style="left:84.5px;top:336.5px;" width="17" height="13" viewBox="0 0 17 13"><path d="M8.3 0.9000000000000004 L12.0 3.2 L8.3 5.5 L4.6000000000000005 3.2Z" fill="#d8d8d8"/><path d="M4.2 4.2 L7.9 6.5 L4.2 8.8 L0.5 6.5Z" fill="#d8d8d8"/><path d="M12.4 4.2 L16.1 6.5 L12.4 8.8 L8.7 6.5Z" fill="#d8d8d8"/><path d="M8.3 7.500000000000001 L12.0 9.8 L8.3 12.100000000000001 L4.6000000000000005 9.8Z" fill="#d8d8d8"/></svg>
<span class="t" style="left:104.5px;top:336px;color:#dcdcdc;font-size:11px;letter-spacing:0.005px;">polySurface3</span>
<svg style="left:84.5px;top:356.5px;" width="17" height="13" viewBox="0 0 17 13"><path d="M8.3 0.9000000000000004 L12.0 3.2 L8.3 5.5 L4.6000000000000005 3.2Z" fill="#d8d8d8"/><path d="M4.2 4.2 L7.9 6.5 L4.2 8.8 L0.5 6.5Z" fill="#d8d8d8"/><path d="M12.4 4.2 L16.1 6.5 L12.4 8.8 L8.7 6.5Z" fill="#d8d8d8"/><path d="M8.3 7.500000000000001 L12.0 9.8 L8.3 12.100000000000001 L4.6000000000000005 9.8Z" fill="#d8d8d8"/></svg>
<span class="t" style="left:104.5px;top:356px;color:#dcdcdc;font-size:11px;letter-spacing:0.070px;">pasted__polySurface2</span>
<svg style="left:86px;top:378px;" width="16" height="10" viewBox="0 0 16 10"><rect x="0" y="0.500" width="10" height="8" fill="#c4c4c4"/><path d="M10.500 4.500 L14.500 0.500 V8.500Z" fill="#c4c4c4"/></svg>
<span class="t" style="left:104.5px;top:376px;color:#767676;font-size:11px;letter-spacing:0.023px;">persp</span>
<svg style="left:86px;top:398px;" width="16" height="10" viewBox="0 0 16 10"><rect x="0" y="0.500" width="10" height="8" fill="#c4c4c4"/><path d="M10.500 4.500 L14.500 0.500 V8.500Z" fill="#c4c4c4"/></svg>
<span class="t" style="left:104.5px;top:396px;color:#767676;font-size:11px;letter-spacing:0.261px;">top</span>
<svg style="left:86px;top:418px;" width="16" height="10" viewBox="0 0 16 10"><rect x="0" y="0.500" width="10" height="8" fill="#c4c4c4"/><path d="M10.500 4.500 L14.500 0.500 V8.500Z" fill="#c4c4c4"/></svg>
<span class="t" style="left:104.5px;top:416px;color:#767676;font-size:11px;letter-spacing:0.498px;">front</span>
<svg style="left:86px;top:438px;" width="16" height="10" viewBox="0 0 16 10"><rect x="0" y="0.500" width="10" height="8" fill="#c4c4c4"/><path d="M10.500 4.500 L14.500 0.500 V8.500Z" fill="#c4c4c4"/></svg>
<span class="t" style="left:104.5px;top:436px;color:#767676;font-size:11px;letter-spacing:0.054px;">side</span>
<svg style="left:84.5px;top:454.5px;" width="17" height="17" viewBox="0 0 17 17"><circle cx="8.500" cy="8.500" r="7.600" fill="none" stroke="#c8c8c8" stroke-width="1.200"/><path d="M6 4 H12.500 V12 H8Z" fill="#45b8c8"/><circle cx="6.500" cy="10.500" r="3" fill="#c8c8c8" stroke="#373737" stroke-width=".8"/></svg>
<span class="t" style="left:104.5px;top:456px;color:#dcdcdc;font-size:11px;letter-spacing:0.181px;">defaultLightSet</span>
<svg style="left:84.5px;top:474.5px;" width="17" height="17" viewBox="0 0 17 17"><circle cx="8.500" cy="8.500" r="7.600" fill="none" stroke="#c8c8c8" stroke-width="1.200"/><path d="M6 4 H12.500 V12 H8Z" fill="#45b8c8"/><circle cx="6.500" cy="10.500" r="3" fill="#c8c8c8" stroke="#373737" stroke-width=".8"/></svg>
<span class="t" style="left:104.5px;top:476px;color:#dcdcdc;font-size:11px;letter-spacing:0.199px;">defaultObjectSet</span>
<svg style="left:53px;top:884px;" width="6" height="9" viewBox="0 0 6 9"><path d="M6 0 L6 9 L0 4.500Z" fill="#c4c4c4"/></svg>
<div style="left:63px;top:883px;width:227px;height:10px;background:#5d5d5d;border-radius:5px"></div>
<svg style="left:293px;top:884px;" width="6" height="9" viewBox="0 0 6 9"><path d="M0 0 L0 9 L6 4.500Z" fill="#c4c4c4"/></svg>
<div style="left:137px;top:895px;width:90px;height:1px;background-image:linear-gradient(90deg,#777 1px,transparent 1px);background-size:3px 1px"></div>
<!-- viewport -->
<div style="left:324px;top:150.5px;width:1115px;height:750px;background:#444;border:1px solid #626262;border-right-color:#444;border-bottom-color:#444"></div>
<span class="t" style="left:333px;top:154px;color:#e0e0e0;font-size:11px;letter-spacing:0.385px;">View</span>
<span class="t" style="left:373px;top:154px;color:#e0e0e0;font-size:11px;letter-spacing:0.355px;">Shading</span>
<span class="t" style="left:431px;top:154px;color:#e0e0e0;font-size:11px;letter-spacing:0.337px;">Lighting</span>
<span class="t" style="left:489px;top:154px;color:#e0e0e0;font-size:11px;letter-spacing:0.574px;">Show</span>
<span class="t" style="left:533px;top:154px;color:#e0e0e0;font-size:11px;letter-spacing:0.237px;">Renderer</span>
<span class="t" style="left:595px;top:154px;color:#e0e0e0;font-size:11px;letter-spacing:0.115px;">Panels</span>
<div style="left:329px;top:171px;width:1px;height:18px;background:#666;"></div><div style="left:328px;top:175px;width:3px;height:10px;background:#777;border-radius:1px"></div>
<svg style="left:338px;top:175px;" width="15" height="10" viewBox="0 0 15 10"><rect x="0" y="1.200" width="9.700" height="6.800" fill="#d8d8d8"/><path d="M10.200 4.600 L14.300 1 V8.200Z" fill="#d8d8d8"/></svg>
<svg style="left:357px;top:172px;" width="15" height="16" viewBox="0 0 15 16"><rect x="3" y="2" width="8" height="7" fill="#c8c8c8"/><path d="M11.500 5.500 L15 2 V9Z" fill="#c8c8c8"/><rect x="0" y="8" width="7.500" height="7" fill="#45b8c8" stroke="#333" stroke-width=".6"/><path d="M1.800 8 V6 a2 2 0 0 1 4 0 V8" fill="none" stroke="#45b8c8" stroke-width="1.300"/></svg>
<svg style="left:375px;top:172px;" width="16" height="16" viewBox="0 0 16 16"><rect x="4" y="2" width="8" height="7" fill="#c8c8c8"/><path d="M12.500 5.500 L16 2 V9Z" fill="#c8c8c8"/><circle cx="5" cy="10.500" r="3.300" fill="#444" stroke="#45b8c8" stroke-width="2" stroke-dasharray="1.700 1"/><circle cx="5" cy="10.500" r="2.200" fill="none" stroke="#45b8c8" stroke-width="1.100"/></svg>
<svg style="left:399px;top:173px;" width="8" height="13" viewBox="0 0 8 13"><path d="M0.500 0.500 H7.500 V12.500 L4 9.500 L0.500 12.500Z" fill="#d8d8d8"/></svg>
<svg style="left:414px;top:172px;" width="15" height="16" viewBox="0 0 15 16"><path d="M6 12.500 L13 0.500 V12.500Z" fill="#45b8c8"/><path d="M0.500 15 L4 10.500 H14.500 L11 15Z" fill="none" stroke="#c8c8c8" stroke-width="1.100"/></svg>
<svg style="left:433px;top:171px;" width="16" height="18" viewBox="0 0 16 18"><path d="M6 0 V11 M0.500 5.500 H11.500" stroke="#d8d8d8" stroke-width="1.200"/><path d="M6 0 l-2 2.500 h4z M6 11 l-2 -2.500 h4z M0.500 5.500 l2.500 -2 v4z M11.500 5.500 l-2.500 -2 v4z" fill="#d8d8d8"/><circle cx="10.500" cy="11" r="3.200" fill="#444" stroke="#45b8c8" stroke-width="1.500"/><path d="M8 13.500 L5 17" stroke="#45b8c8" stroke-width="1.800"/></svg>
<svg style="left:452px;top:172px;" width="15" height="16" viewBox="0 0 15 16"><path d="M13 1 L6.500 8.500" stroke="#d8d8d8" stroke-width="2.600" stroke-linecap="round"/><path d="M5 7 L8.500 10.500 L3 13.500 Z" fill="#45b8c8"/><path d="M3 13.500 C5 16 9 15 10.500 13" fill="none" stroke="#c8c8c8" stroke-width="1"/></svg>
<div style="left:617px;top:171px;width:1px;height:18px;background:#666;"></div><div style="left:616px;top:175px;width:3px;height:10px;background:#777;border-radius:1px"></div>
<div style="left:480px;top:171px;width:18px;height:18px;background:#5285a6;"></div>
<svg style="left:483px;top:174px;" width="12" height="12" viewBox="0 0 12 12"><rect x="0.500" y="0.500" width="11" height="11" fill="none" stroke="#f0f0f0" stroke-width="1.200"/><path d="M4.200 0.500 V11.500 M7.800 0.500 V11.500 M0.500 4.200 H11.500 M0.500 7.800 H11.500" stroke="#f0f0f0" stroke-width="1.100"/></svg>
<svg style="left:500px;top:174px;" width="16" height="12" viewBox="0 0 16 12"><rect x="0.500" y="0.500" width="15" height="11" fill="none" stroke="#e0e0e0" stroke-width="1"/><path d="M0.500 2.800 H15.500 M0.500 9.200 H15.500" stroke="#e0e0e0" stroke-width="1"/><path d="M1.500 1.600 H15 M1.500 10.400 H15" stroke="#e0e0e0" stroke-width="1" stroke-dasharray="1.500 1.500"/></svg>
<svg style="left:520px;top:174px;" width="15" height="12" viewBox="0 0 15 12"><rect x="0.500" y="0.500" width="14" height="11" fill="none" stroke="#e0e0e0" stroke-width="1"/><circle cx="7.500" cy="6" r="2.800" fill="#45b8c8"/></svg>
<div style="left:538px;top:171px;width:17px;height:18px;background:#383838;border:1px solid #2e2e2e"></div>
<div style="left:543px;top:176px;width:8px;height:8px;background:#555;border-radius:4px"></div>
<svg style="left:558px;top:174px;" width="15" height="12" viewBox="0 0 15 12"><rect x="0.500" y="0.500" width="14" height="11" fill="none" stroke="#e0e0e0" stroke-width="1"/><path d="M7.500 1 V11 M1 6 H14" stroke="#45b8c8" stroke-width="1.200" stroke-dasharray="1.500 1"/></svg>
<svg style="left:577px;top:174px;" width="15" height="12" viewBox="0 0 15 12"><rect x="0.500" y="0.500" width="14" height="11" fill="none" stroke="#e0e0e0" stroke-width="1"/><path d="M2.500 9.500 L6 4.500 L9 9.500Z" fill="#45b8c8"/><circle cx="10.500" cy="4.500" r="2" fill="#45b8c8"/></svg>
<svg style="left:596px;top:174px;" width="15" height="12" viewBox="0 0 15 12"><rect x="0.500" y="0.500" width="14" height="11" fill="none" stroke="#e0e0e0" stroke-width="1"/><text x="7.500" y="10.300" text-anchor="middle" font-size="10.500" font-weight="bold" font-family="Liberation Serif,serif" fill="#45b8c8" style="position:static">T</text></svg>
<div style="left:473px;top:171px;width:1px;height:18px;background:#666;"></div><div style="left:472px;top:175px;width:3px;height:10px;background:#777;border-radius:1px"></div>
<svg style="left:627px;top:173px;" width="14" height="14" viewBox="0 0 14 14"><path d="M7 0.500 L13.500 3.500 V10.500 L7 13.500 L0.500 10.500 V3.500Z" fill="none" stroke="#e0e0e0" stroke-width="1"/><path d="M0.500 3.500 L7 6.500 L13.500 3.500 M7 6.500 V13.500" fill="none" stroke="#e0e0e0" stroke-width="1"/></svg>
<div style="left:643px;top:171px;width:18px;height:18px;background:#5285a6;"></div>
<svg style="left:645px;top:173px;" width="14" height="14" viewBox="0 0 14 14"><path d="M7 0.500 L13.500 3.500 V10.500 L7 13.500 L0.500 10.500 V3.500Z" fill="#58d0e0" stroke="#1e3a4a" stroke-width="0.9"/><path d="M0.500 3.500 L7 6.500 L13.500 3.500 M7 6.500 V13.500" fill="none" stroke="#1e3a4a" stroke-width="0.9"/></svg>
<svg style="left:665px;top:174px;" width="13" height="13" viewBox="0 0 13 13"><circle cx="6.500" cy="6.500" r="6" fill="#e8e8e8"/><path d="M6.500 0.500 A6 6 0 0 1 6.500 12.500Z" fill="#444"/><rect x="7" y="1.5" width="1" height="1" fill="#e8e8e8"/><rect x="8" y="3.5" width="1" height="1" fill="#e8e8e8"/><rect x="7" y="5.5" width="1" height="1" fill="#e8e8e8"/><rect x="8" y="7.5" width="1" height="1" fill="#e8e8e8"/><rect x="7" y="9.5" width="1" height="1" fill="#e8e8e8"/><rect x="9" y="1.5" width="1" height="1" fill="#e8e8e8"/><rect x="10" y="3.5" width="1" height="1" fill="#e8e8e8"/><rect x="9" y="5.5" width="1" height="1" fill="#e8e8e8"/><rect x="10" y="7.5" width="1" height="1" fill="#e8e8e8"/><rect x="9" y="9.5" width="1" height="1" fill="#e8e8e8"/><rect x="7" y="1.5" width="1" height="1" fill="#e8e8e8"/><rect x="8" y="3.5" width="1" height="1" fill="#e8e8e8"/><rect x="7" y="5.5" width="1" height="1" fill="#e8e8e8"/><rect x="8" y="7.5" width="1" height="1" fill="#e8e8e8"/><rect x="7" y="9.5" width="1" height="1" fill="#e8e8e8"/></svg>
<svg style="left:684px;top:173px;" width="14" height="14" viewBox="0 0 14 14"><path d="M7 0.500 L13.500 3.500 V10.500 L7 13.500 L0.500 10.500 V3.500Z" fill="none" stroke="#e0e0e0" stroke-width="1"/><path d="M0.500 3.500 L7 6.500 L13.500 3.500 M7 6.500 V13.500" fill="none" stroke="#e0e0e0" stroke-width="1"/><path d="M7 3 L11 5 V9.500 L7 11.500 L3 9.500 V5Z" fill="#45b8c8"/></svg>
<div style="left:700px;top:171px;width:18px;height:18px;background:#5285a6;"></div>
<svg style="left:702px;top:173px;" width="14" height="14" viewBox="0 0 14 14"><circle cx="7" cy="7" r="6.500" fill="#e8e8e8" stroke="#1e3a4a" stroke-width=".6"/><rect x="1.5" y="5.5" width="1" height="1" fill="#333"/><rect x="1.5" y="9.5" width="1" height="1" fill="#333"/><rect x="3.5" y="3.5" width="1" height="1" fill="#333"/><rect x="3.5" y="7.5" width="1" height="1" fill="#333"/><rect x="3.5" y="11.5" width="1" height="1" fill="#333"/><rect x="5.5" y="1.5" width="1" height="1" fill="#333"/><rect x="5.5" y="5.5" width="1" height="1" fill="#333"/><rect x="5.5" y="9.5" width="1" height="1" fill="#333"/><rect x="7.5" y="3.5" width="1" height="1" fill="#333"/><rect x="7.5" y="7.5" width="1" height="1" fill="#333"/><rect x="7.5" y="11.5" width="1" height="1" fill="#333"/><rect x="9.5" y="1.5" width="1" height="1" fill="#333"/><rect x="9.5" y="5.5" width="1" height="1" fill="#333"/><rect x="9.5" y="9.5" width="1" height="1" fill="#333"/><rect x="11.5" y="3.5" width="1" height="1" fill="#333"/><rect x="11.5" y="7.5" width="1" height="1" fill="#333"/></svg>
<svg style="left:721px;top:172px;" width="15" height="16" viewBox="0 0 15 16"><circle cx="7.500" cy="7" r="3.800" fill="#f0f0f0"/><rect x="5.800" y="10.500" width="3.400" height="3.500" fill="#d0d0d0"/><path d="M7.500 0 V1.800 M1 7 H2.500 M12.500 7 H14 M2.800 2.300 L4 3.500 M12.200 2.300 L11 3.500" stroke="#45b8c8" stroke-width="1.100"/></svg>
<svg style="left:740px;top:173px;" width="15" height="14" viewBox="0 0 15 14"><circle cx="9.500" cy="6" r="5" fill="#45b8c8"/><ellipse cx="4.500" cy="10.500" rx="4.500" ry="2.200" fill="#d0d0d0" transform="rotate(-20 4.500 10.500)"/></svg>
<div style="left:761px;top:171px;width:1px;height:18px;background:#666;"></div><div style="left:760px;top:175px;width:3px;height:10px;background:#777;border-radius:1px"></div>
<svg style="left:770px;top:172px;" width="15" height="16" viewBox="0 0 15 16"><circle cx="7.500" cy="6" r="5.500" fill="#d0d0d0"/><path d="M1 13 L5 10 L14 14 M2 15.500 L7 11.500 M5 16 L11 12" stroke="#45b8c8" stroke-width="1"/></svg>
<svg style="left:789px;top:173px;" width="15" height="14" viewBox="0 0 15 14"><circle cx="4" cy="10" r="3.800" fill="#6a6a6a"/><circle cx="6.500" cy="8" r="4" fill="#909090"/><circle cx="10" cy="5" r="4.500" fill="#d8d8d8"/></svg>
<svg style="left:808px;top:173px;" width="14" height="14" viewBox="0 0 14 14"><circle cx="7" cy="7" r="5.200" fill="none" stroke="#45b8c8" stroke-width="2.400"/><circle cx="7" cy="7" r="5.200" fill="none" stroke="#f0f0f0" stroke-width="2.400" stroke-dasharray="4 4.200"/></svg>
<div style="left:825px;top:171px;width:18px;height:18px;background:#383838;border:1px solid #2e2e2e"></div>
<div style="left:828px;top:174px;width:8px;height:8px;background:#3d5a5c;"></div>
<div style="left:832px;top:178px;width:8px;height:8px;background:#2f4a4c;"></div>
<div style="left:848px;top:171px;width:1px;height:18px;background:#666;"></div><div style="left:847px;top:175px;width:3px;height:10px;background:#777;border-radius:1px"></div>
<svg style="left:857px;top:172px;" width="15" height="16" viewBox="0 0 15 16"><rect x="0.600" y="0.600" width="9" height="8" fill="none" stroke="#45b8c8" stroke-width="1.200" stroke-dasharray="2.500 1.500"/><path d="M7.0 4.5 L7.0 14.9 L9.5 12.7 L11.4 16.9 L13.3 15.9 L11.4 11.9 L14.6 11.9Z" fill="#d8d8d8" stroke="#444" stroke-width="0.8"/></svg>
<div style="left:879px;top:171px;width:1px;height:18px;background:#666;"></div><div style="left:878px;top:175px;width:3px;height:10px;background:#777;border-radius:1px"></div>
<div style="left:885px;top:171px;width:18px;height:18px;background:#383838;"></div>
<svg style="left:887px;top:173px;" width="14" height="14" viewBox="0 0 14 14"><rect x="4.500" y="0.500" width="9" height="9" fill="none" stroke="#e0e0e0" stroke-width="1.200"/><rect x="0.500" y="4.500" width="9" height="9" fill="#e0e0e0"/><rect x="2.500" y="6.500" width="5" height="5" fill="#383838"/></svg>
<svg style="left:906px;top:173px;" width="14" height="14" viewBox="0 0 14 14"><rect x="5" y="0.500" width="8.500" height="8.500" fill="none" stroke="#e0e0e0" stroke-width="1.200"/><rect x="0.500" y="5" width="8.500" height="8.500" fill="#e0e0e0"/></svg>
<svg style="left:925px;top:173px;" width="14" height="14" viewBox="0 0 14 14"><rect x="0.600" y="0.600" width="12.800" height="12.800" fill="none" stroke="#e0e0e0" stroke-width="1.200"/><path d="M4 4 L10.500 10.500" stroke="#e0e0e0" stroke-width="1.300"/><circle cx="4.500" cy="4.500" r="2" fill="#e0e0e0"/></svg>
<div style="left:947px;top:171px;width:1px;height:18px;background:#666;"></div><div style="left:946px;top:175px;width:3px;height:10px;background:#777;border-radius:1px"></div>
<svg style="left:957px;top:173px;" width="14" height="14" viewBox="0 0 14 14"><circle cx="7" cy="7" r="6.300" fill="#d8d8d8"/><path d="M7 7 L7 0.500 M7 7 L12.800 4 M7 7 L12 11.500 M7 7 L5 13 M7 7 L0.800 9 M7 7 L2.500 2.500" stroke="#444" stroke-width="1.400"/><circle cx="7" cy="7" r="2" fill="#444"/></svg>
<div style="left:974px;top:172px;width:38px;height:15px;background:#2b2b2b;border-radius:2px"></div>
<span class="t" style="left:979px;top:173px;color:#e8e8e8;font-size:11px;letter-spacing:-0.382px;">0.00</span>
<svg style="left:1018px;top:173px;" width="12" height="14" viewBox="0 0 12 14"><rect x="1" y="0.600" width="10" height="12.800" fill="none" stroke="#d8d8d8" stroke-width="1.200"/><path d="M6 3 A4 4 0 0 0 6 11Z" fill="#d8d8d8"/><circle cx="3" cy="7" r="3" fill="#d8d8d8"/></svg>
<div style="left:1035px;top:172px;width:38px;height:15px;background:#2b2b2b;border-radius:2px"></div>
<span class="t" style="left:1040px;top:173px;color:#e8e8e8;font-size:11px;letter-spacing:-0.382px;">1.00</span>
<div style="left:1076px;top:171px;width:18px;height:18px;background:#5285a6;"></div>
<svg style="left:1077px;top:172px;" width="16" height="16" viewBox="0 0 16 16"><circle cx="8" cy="8" r="6.800" fill="#45b8c8" stroke="#1e3a4a" stroke-width="1"/><text x="8" y="10.200" text-anchor="middle" font-size="5.600" font-weight="bold" font-family="Liberation Sans,sans-serif" fill="#1e3a4a" style="position:static">ON</text></svg>
<div style="left:1097px;top:171px;width:164px;height:18px;background:#5d5d5d;border-radius:2px"></div>
<div style="left:1240px;top:171px;width:1px;height:18px;background:#4a4a4a;"></div>
<span class="t" style="left:1100.5px;top:173px;color:#e0e0e0;font-size:11px;letter-spacing:-0.083px;">sRGB gamma</span>
<svg style="left:1246px;top:178px;" width="9" height="5" viewBox="0 0 9 5"><path d="M0 0 L9 0 L4.500 5Z" fill="#d8d8d8"/></svg>
<svg style="left:325px;top:190px;overflow:hidden" width="1111" height="709.8" viewBox="0 0 1111 709.8"><defs><linearGradient id="g1" x1="0" y1="0" x2="0.25" y2="1"><stop offset="0" stop-color="#54ca00"/><stop offset="0.3" stop-color="#3eb400"/><stop offset="0.55" stop-color="#2c9a00"/><stop offset="1" stop-color="#067800"/></linearGradient><linearGradient id="g2" x1="0" y1="0" x2="0.1" y2="1"><stop offset="0" stop-color="#58d400"/><stop offset="0.4" stop-color="#3cb400"/><stop offset="0.8" stop-color="#128a00"/><stop offset="1" stop-color="#067c00"/></linearGradient><linearGradient id="g3" x1="0" y1="0" x2="0" y2="1"><stop offset="0" stop-color="#3cb000"/><stop offset="1" stop-color="#088000"/></linearGradient><linearGradient id="gsh" x1="0" y1="0" x2="1" y2="0"><stop offset="0" stop-color="#000" stop-opacity="0"/><stop offset="1" stop-color="#000" stop-opacity=".10"/></linearGradient><filter id="bl"><feGaussianBlur stdDeviation="0.8"/></filter></defs><rect x="0" y="0" width="1111" height="709.8" fill="#a3a3a3"/><g shape-rendering="crispEdges"><line x1="0" y1="637.9" x2="1111" y2="655.0" stroke="#444" stroke-width="1"/><line x1="0" y1="450.7" x2="1111" y2="462.3" stroke="#383838" stroke-width="1.7"/><line x1="0" y1="354.4" x2="1111" y2="363.2" stroke="#444" stroke-width="1"/><line x1="0" y1="295.7" x2="1111" y2="302.8" stroke="#444" stroke-width="1"/><line x1="0" y1="256.2" x2="1111" y2="262.1" stroke="#444" stroke-width="1"/><line x1="0" y1="227.7" x2="1111" y2="232.8" stroke="#444" stroke-width="1"/><line x1="0" y1="206.3" x2="1111" y2="210.8" stroke="#444" stroke-width="1"/><line x1="0" y1="189.6" x2="1111" y2="193.6" stroke="#444" stroke-width="1"/><line x1="0" y1="176.2" x2="1111" y2="179.8" stroke="#444" stroke-width="1"/><line x1="0" y1="165.2" x2="1111" y2="168.4" stroke="#444" stroke-width="1"/><line x1="0" y1="156.0" x2="1111" y2="159.0" stroke="#444" stroke-width="1"/><line x1="0" y1="148.2" x2="1111" y2="151.0" stroke="#444" stroke-width="1"/><line x1="0" y1="141.5" x2="1111" y2="144.1" stroke="#444" stroke-width="1"/><line x1="0" y1="135.7" x2="1111" y2="138.1" stroke="#444" stroke-width="1"/><line x1="0" y1="130.6" x2="1111" y2="132.9" stroke="#444" stroke-width="1"/><line x1="0" y1="126.1" x2="1111" y2="128.3" stroke="#444" stroke-width="1"/><line x1="0" y1="122.2" x2="1111" y2="124.2" stroke="#444" stroke-width="1"/><line x1="0" y1="118.6" x2="1111" y2="120.5" stroke="#444" stroke-width="1"/><line x1="0" y1="115.4" x2="1111" y2="117.2" stroke="#444" stroke-width="1"/><line x1="0" y1="112.4" x2="1111" y2="114.2" stroke="#444" stroke-width="1"/><line x1="0" y1="109.8" x2="1111" y2="111.4" stroke="#444" stroke-width="1"/><line x1="0" y1="108.1" x2="1111" y2="109.1" stroke="#444" stroke-width="1"/><line x1="-28.3" y1="108.8" x2="-6755.3" y2="710.0" stroke="#444" stroke-width="1"/><line x1="21.0" y1="108.8" x2="-6167.2" y2="710.0" stroke="#444" stroke-width="1"/><line x1="70.2" y1="108.8" x2="-5579.0" y2="710.0" stroke="#444" stroke-width="1"/><line x1="119.5" y1="108.8" x2="-4990.9" y2="710.0" stroke="#444" stroke-width="1"/><line x1="168.7" y1="108.8" x2="-4402.8" y2="710.0" stroke="#444" stroke-width="1"/><line x1="218.0" y1="108.8" x2="-3814.6" y2="710.0" stroke="#444" stroke-width="1"/><line x1="267.2" y1="108.8" x2="-3226.5" y2="710.0" stroke="#444" stroke-width="1"/><line x1="316.5" y1="108.8" x2="-2638.4" y2="710.0" stroke="#444" stroke-width="1"/><line x1="365.7" y1="108.8" x2="-2050.2" y2="710.0" stroke="#444" stroke-width="1"/><line x1="415.0" y1="108.8" x2="-1462.1" y2="710.0" stroke="#444" stroke-width="1"/><line x1="464.2" y1="108.8" x2="-874.0" y2="710.0" stroke="#444" stroke-width="1"/><line x1="513.5" y1="108.8" x2="-285.8" y2="710.0" stroke="#444" stroke-width="1"/><line x1="562.7" y1="108.8" x2="302.3" y2="710.0" stroke="#444" stroke-width="1"/><line x1="612.0" y1="108.8" x2="890.4" y2="710.0" stroke="#444" stroke-width="1"/><line x1="661.2" y1="108.8" x2="1478.5" y2="710.0" stroke="#383838" stroke-width="2"/><line x1="710.5" y1="108.8" x2="2066.7" y2="710.0" stroke="#444" stroke-width="1"/><line x1="759.7" y1="108.8" x2="2654.8" y2="710.0" stroke="#444" stroke-width="1"/><line x1="809.0" y1="108.8" x2="3242.9" y2="710.0" stroke="#444" stroke-width="1"/><line x1="858.2" y1="108.8" x2="3831.1" y2="710.0" stroke="#444" stroke-width="1"/><line x1="907.5" y1="108.8" x2="4419.2" y2="710.0" stroke="#444" stroke-width="1"/><line x1="956.7" y1="108.8" x2="5007.3" y2="710.0" stroke="#444" stroke-width="1"/><line x1="1006.0" y1="108.8" x2="5595.5" y2="710.0" stroke="#444" stroke-width="1"/><line x1="1055.2" y1="108.8" x2="6183.6" y2="710.0" stroke="#444" stroke-width="1"/><line x1="1104.5" y1="108.8" x2="6771.7" y2="710.0" stroke="#444" stroke-width="1"/><line x1="1153.7" y1="108.8" x2="7359.9" y2="710.0" stroke="#444" stroke-width="1"/><line x1="1203.0" y1="108.8" x2="7948.0" y2="710.0" stroke="#444" stroke-width="1"/></g><polygon points="223.0,74.5 219.0,87.0 215.0,100.0 210.0,121.0 204.5,144.0 215.0,120.0 226.0,78.0" fill="#55cc00"/><polygon points="44.5,205.0 47.0,225.0 49.0,250.0 53.5,286.0 56.0,315.0 58.7,342.5 44.5,316.0 50.0,350.0 57.5,380.0 67.5,410.0 80.0,436.0 100.0,444.0 120.0,470.0 150.0,497.5 230.0,482.5 241.0,375.0 244.0,312.0 247.5,250.0 250.5,237.0 257.5,200.0 256.0,170.0 252.5,140.0 247.5,105.0 240.0,75.0 230.0,52.5 227.5,62.5 224.5,80.0 221.7,100.0 213.5,121.0 205.0,142.0 198.3,170.0 193.7,223.7 185.0,195.0 175.0,160.0 161.0,110.0 150.0,122.5 137.5,160.0 131.0,205.0 128.0,236.0 110.0,190.0 95.0,160.0 80.5,136.0 75.0,165.0 72.5,200.0 72.0,240.0 72.5,277.5 60.0,240.0" fill="url(#g1)"/><polygon points="205.0,140.0 230.0,52.5 240.0,75.0 247.5,105.0 252.5,140.0 256.0,170.0 257.5,200.0 250.5,237.0 247.5,250.0 244.0,312.0 241.0,375.0 230.0,482.5 195.0,489.0 215.0,370.0 215.0,240.0" fill="url(#gsh)"/><polyline points="102.0,270.0 102.5,222.0 105.0,220.0 115.0,250.0 141.0,315.0" fill="none" stroke="#9fdc80" stroke-width="0.8"/><polyline points="53.5,286.0 60.0,290.0 75.0,302.0 93.0,320.0 114.0,340.0 105.0,290.0 102.0,265.0" fill="none" stroke="#9fdc80" stroke-width="0.8"/><polyline points="114.0,250.0 130.0,290.0 141.0,315.0 138.3,280.0 136.3,257.0 134.6,237.0 133.5,210.0 134.0,195.0" fill="none" stroke="#9fdc80" stroke-width="0.8"/><polyline points="53.5,286.0 60.0,350.0 72.5,390.0 100.0,442.0" fill="none" stroke="#8fd070" stroke-width="0.8"/><polyline points="183.0,190.0 187.0,205.0 193.5,223.0" fill="none" stroke="#9fdc80" stroke-width="0.8"/><polygon points="290.0,117.5 283.0,140.0 279.0,170.0 290.0,250.0 307.0,180.0 305.0,160.0 297.0,135.0" fill="#3a9e00"/><polygon points="364.0,115.0 346.0,150.0 340.0,190.0 362.5,245.0 387.0,210.0 382.5,185.0 375.0,150.0" fill="#3a9e00"/><polygon points="430.0,185.8 418.7,205.0 415.0,240.0 430.8,265.0 437.0,250.0 429.0,226.0" fill="#36a000"/><polygon points="283.7,127.5 277.5,160.0 275.0,190.0 290.0,250.0 303.0,190.0 300.0,160.0" fill="#48bc00"/><polygon points="247.5,270.0 251.0,225.0 260.0,175.0 271.0,144.0 277.5,175.0 283.0,210.0 290.0,243.7 295.0,200.0 300.0,170.0 312.5,117.5 323.0,89.5 335.0,112.5 345.0,150.0 355.0,207.5 362.5,241.0 370.0,215.0 385.0,185.0 402.5,152.5 410.8,183.0 420.0,216.7 430.8,260.8 438.0,230.0 448.0,205.0 461.7,176.7 473.0,156.3 480.0,180.0 485.0,203.0 490.0,236.7 493.0,282.0 495.0,314.4 503.0,290.0 511.7,265.0 524.5,237.0 524.0,280.0 524.0,317.0 522.0,379.0 520.8,399.0 538.7,369.5 536.0,400.0 530.7,438.0 524.0,470.0 514.6,497.0 505.7,516.6 477.0,509.0 473.0,456.7 459.6,505.6 392.5,496.0 389.0,486.0 385.0,496.0 362.0,496.0 356.0,482.5 352.0,496.0 312.0,495.0 306.0,474.0 301.0,495.0 230.0,482.5 241.0,375.0 244.0,312.0" fill="url(#g2)"/><polyline points="271.0,144.0 277.5,175.0 283.0,210.0 290.0,243.7 295.0,200.0 300.0,170.0 312.5,117.5" fill="none" stroke="#b4eca0" stroke-width="0.7" opacity=".6"/><polyline points="345.0,150.0 355.0,207.5 362.5,241.0 370.0,215.0 385.0,185.0" fill="none" stroke="#b4eca0" stroke-width="0.7" opacity=".6"/><polyline points="410.8,183.0 420.0,216.7 430.8,260.8 438.0,230.0 448.0,205.0" fill="none" stroke="#b4eca0" stroke-width="0.7" opacity=".6"/><polyline points="247.5,270.0 251.0,225.0 260.0,175.0 271.0,144.0" fill="none" stroke="#b4eca0" stroke-width="0.7" opacity=".6"/><polygon points="495.0,314.4 503.0,290.0 511.7,265.0 524.5,237.0 524.0,317.0 522.0,379.0 520.8,399.0 538.7,369.5 536.0,400.0 530.7,438.0 524.0,470.0 514.6,497.0 505.7,516.6 477.0,509.0 475.0,470.0 487.0,370.0" fill="#000" opacity=".10"/><polygon points="813.9,213.6 827.0,245.5 841.0,285.8 848.0,245.5 855.0,209.4 865.0,190.0 865.0,470.0 855.5,454.0 849.4,417.8 845.3,434.4 838.3,460.8 809.0,460.8 803.6,448.3 796.7,417.8 791.0,370.5 788.3,329.7 804.4,358.0 806.4,315.0 810.5,259.4" fill="url(#g3)"/><polyline points="786.0,240.0 782.0,330.0 775.0,450.0" fill="none" stroke="#c8e8a8" stroke-width="0.8" stroke-dasharray="5 3" opacity=".4"/><polyline points="255.0,166.0 312.5,83.0 407.5,120.5 487.0,153.5 545.5,269.3 546.8,330.5 542.8,438.0 538.2,526.0 470.8,507.7 391.0,496.0 306.0,495.0 230.0,482.5" fill="none" stroke="#5cf2b6" stroke-width="1"/><polyline points="312.5,83.0 313.7,260.0 311.0,370.0 306.0,495.0" fill="none" stroke="#5cf2b6" stroke-width="1"/><polyline points="407.5,120.5 404.0,250.0 401.8,330.5 391.0,496.0" fill="none" stroke="#5cf2b6" stroke-width="1"/><polyline points="487.0,153.5 484.3,250.0 482.4,320.0 474.3,465.0 470.8,507.7" fill="none" stroke="#5cf2b6" stroke-width="1"/><polyline points="255.0,184.0 308.7,200.0" fill="none" stroke="#5cf2b6" stroke-width="1"/><polyline points="316.0,202.5 480.0,247.5 545.5,269.3" fill="none" stroke="#5cf2b6" stroke-width="1"/><polyline points="242.5,292.5 375.0,307.0 403.0,309.6 482.4,320.3 546.8,331.0" fill="none" stroke="#5cf2b6" stroke-width="1"/><g filter="url(#bl)"><ellipse cx="887.0" cy="36.0" rx="38" ry="28" transform="rotate(10 887.0 36.0)" fill="#3a8cc6"/><ellipse cx="1023.0" cy="24.0" rx="36" ry="22" transform="rotate(0 1023.0 24.0)" fill="#c452d4"/><ellipse cx="934.0" cy="6.0" rx="17" ry="10" transform="rotate(-15 934.0 6.0)" fill="#40a8d0"/><ellipse cx="853.5" cy="10.0" rx="19" ry="11" transform="rotate(-8 853.5 10.0)" fill="#6fd0ef"/><ellipse cx="844.0" cy="39.0" rx="21" ry="12.5" transform="rotate(-15 844.0 39.0)" fill="#3494b4"/><ellipse cx="870.0" cy="78.0" rx="13" ry="18" transform="rotate(28 870.0 78.0)" fill="#40a8c8"/><ellipse cx="866.0" cy="60.0" rx="23" ry="16" transform="rotate(-25 866.0 60.0)" fill="#1c7fba"/><ellipse cx="926.0" cy="30.5" rx="19" ry="15" transform="rotate(20 926.0 30.5)" fill="#3f8ec4"/><ellipse cx="918.0" cy="57.0" rx="25" ry="20" transform="rotate(25 918.0 57.0)" fill="#6fd0ef"/><ellipse cx="895.5" cy="65.0" rx="14" ry="14" transform="rotate(0 895.5 65.0)" fill="#0a6fb5"/><ellipse cx="870.0" cy="24.0" rx="29" ry="13" transform="rotate(-8 870.0 24.0)" fill="#4fa0d8"/><ellipse cx="905.0" cy="10.0" rx="25" ry="14" transform="rotate(-12 905.0 10.0)" fill="#2e88c8"/><ellipse cx="883.0" cy="32.0" rx="18" ry="16" transform="rotate(0 883.0 32.0)" fill="#3d7fb8"/><ellipse cx="976.0" cy="19.0" rx="27" ry="18" transform="rotate(12 976.0 19.0)" fill="#d268e6"/><ellipse cx="1064.0" cy="9.0" rx="26" ry="12" transform="rotate(-8 1064.0 9.0)" fill="#d468e8"/><ellipse cx="1054.0" cy="29.0" rx="19" ry="14" transform="rotate(20 1054.0 29.0)" fill="#e266e4"/><ellipse cx="994.0" cy="37.0" rx="20" ry="13.5" transform="rotate(-12 994.0 37.0)" fill="#bb3cc4"/><ellipse cx="1015.0" cy="59.0" rx="15" ry="17" transform="rotate(-12 1015.0 59.0)" fill="#a840c8"/><ellipse cx="1023.0" cy="38.0" rx="16" ry="18" transform="rotate(0 1023.0 38.0)" fill="#b028c0"/><ellipse cx="1020.0" cy="6.0" rx="30" ry="11" transform="rotate(0 1020.0 6.0)" fill="#cf58dc"/><ellipse cx="1018.0" cy="9.0" rx="17" ry="8" transform="rotate(0 1018.0 9.0)" fill="#a030a8"/></g><circle cx="882.4" cy="32.1" r="1.0" fill="#1c2c6c" opacity=".8"/><circle cx="877.9" cy="28.5" r="0.5" fill="#1c2c6c" opacity=".8"/><circle cx="864.5" cy="39.4" r="0.5" fill="#1c2c6c" opacity=".8"/><circle cx="884.1" cy="38.7" r="0.8" fill="#1c2c6c" opacity=".8"/><circle cx="885.3" cy="11.8" r="0.8" fill="#1c2c6c" opacity=".8"/><circle cx="886.9" cy="47.7" r="0.8" fill="#1c2c6c" opacity=".8"/><circle cx="884.0" cy="22.5" r="0.8" fill="#1c2c6c" opacity=".8"/><circle cx="877.2" cy="45.1" r="0.8" fill="#1c2c6c" opacity=".8"/><circle cx="893.2" cy="34.2" r="1.0" fill="#1c2c6c" opacity=".8"/><circle cx="876.0" cy="27.8" r="1.0" fill="#1c2c6c" opacity=".8"/><circle cx="877.7" cy="48.8" r="1.3" fill="#1c2c6c" opacity=".8"/><circle cx="882.6" cy="27.1" r="0.8" fill="#1c2c6c" opacity=".8"/><circle cx="864.2" cy="20.0" r="1.3" fill="#1c2c6c" opacity=".8"/><circle cx="885.4" cy="36.7" r="0.8" fill="#1c2c6c" opacity=".8"/><circle cx="876.8" cy="30.2" r="0.8" fill="#1c2c6c" opacity=".8"/><circle cx="881.0" cy="43.7" r="0.5" fill="#1c2c6c" opacity=".8"/><circle cx="894.9" cy="31.5" r="0.8" fill="#1c2c6c" opacity=".8"/><circle cx="868.2" cy="26.5" r="0.8" fill="#1c2c6c" opacity=".8"/><circle cx="890.8" cy="38.4" r="0.5" fill="#1c2c6c" opacity=".8"/><circle cx="876.5" cy="31.1" r="1.0" fill="#1c2c6c" opacity=".8"/><circle cx="880.5" cy="36.1" r="1.3" fill="#1c2c6c" opacity=".8"/><circle cx="876.7" cy="38.2" r="0.8" fill="#1c2c6c" opacity=".8"/><circle cx="884.8" cy="29.9" r="0.6" fill="#1c2c6c" opacity=".8"/><circle cx="879.8" cy="39.5" r="0.6" fill="#1c2c6c" opacity=".8"/><circle cx="898.1" cy="42.3" r="0.8" fill="#1c2c6c" opacity=".8"/><circle cx="879.3" cy="28.7" r="0.5" fill="#1c2c6c" opacity=".8"/><circle cx="901.0" cy="14.7" r="0.8" fill="#1c2c6c" opacity=".8"/><circle cx="889.9" cy="28.8" r="0.6" fill="#1c2c6c" opacity=".8"/><circle cx="883.6" cy="19.1" r="1.3" fill="#1c2c6c" opacity=".8"/><circle cx="880.4" cy="24.8" r="1.3" fill="#1c2c6c" opacity=".8"/><circle cx="885.7" cy="36.9" r="0.6" fill="#1c2c6c" opacity=".8"/><circle cx="882.0" cy="39.9" r="0.6" fill="#1c2c6c" opacity=".8"/><circle cx="881.4" cy="29.1" r="0.5" fill="#1c2c6c" opacity=".8"/><circle cx="873.2" cy="30.4" r="0.8" fill="#1c2c6c" opacity=".8"/><circle cx="894.5" cy="27.8" r="1.0" fill="#1c2c6c" opacity=".8"/><circle cx="892.0" cy="26.9" r="0.6" fill="#1c2c6c" opacity=".8"/><circle cx="884.6" cy="30.1" r="0.6" fill="#1c2c6c" opacity=".8"/><circle cx="861.0" cy="14.8" r="1.3" fill="#1c2c6c" opacity=".8"/><circle cx="892.8" cy="30.6" r="0.6" fill="#1c2c6c" opacity=".8"/><circle cx="880.9" cy="30.1" r="1.3" fill="#1c2c6c" opacity=".8"/><circle cx="873.3" cy="56.8" r="0.6" fill="#1c2c6c" opacity=".8"/><circle cx="874.9" cy="28.9" r="1.0" fill="#1c2c6c" opacity=".8"/><circle cx="875.3" cy="28.3" r="1.0" fill="#1c2c6c" opacity=".8"/><circle cx="882.2" cy="46.5" r="0.6" fill="#1c2c6c" opacity=".8"/><circle cx="879.6" cy="28.0" r="0.8" fill="#1c2c6c" opacity=".8"/><circle cx="881.8" cy="38.7" r="0.6" fill="#1c2c6c" opacity=".8"/><circle cx="875.5" cy="31.4" r="0.8" fill="#1c2c6c" opacity=".8"/><circle cx="902.9" cy="34.4" r="1.3" fill="#1c2c6c" opacity=".8"/><circle cx="891.3" cy="35.7" r="0.5" fill="#1c2c6c" opacity=".8"/><circle cx="877.8" cy="28.1" r="0.6" fill="#1c2c6c" opacity=".8"/><circle cx="893.3" cy="23.1" r="0.6" fill="#1c2c6c" opacity=".8"/><circle cx="874.7" cy="39.0" r="0.8" fill="#1c2c6c" opacity=".8"/><circle cx="886.7" cy="18.1" r="0.8" fill="#1c2c6c" opacity=".8"/><circle cx="876.9" cy="35.5" r="1.0" fill="#1c2c6c" opacity=".8"/><circle cx="904.8" cy="38.6" r="0.6" fill="#1c2c6c" opacity=".8"/><circle cx="901.8" cy="33.2" r="0.6" fill="#1c2c6c" opacity=".8"/><circle cx="882.8" cy="21.1" r="0.5" fill="#1c2c6c" opacity=".8"/><circle cx="892.0" cy="18.2" r="1.0" fill="#1c2c6c" opacity=".8"/><circle cx="867.6" cy="21.9" r="1.0" fill="#1c2c6c" opacity=".8"/><circle cx="882.2" cy="28.7" r="0.6" fill="#1c2c6c" opacity=".8"/><circle cx="901.6" cy="29.5" r="0.5" fill="#1c2c6c" opacity=".8"/><circle cx="869.0" cy="37.2" r="1.0" fill="#1c2c6c" opacity=".8"/><circle cx="890.7" cy="20.3" r="0.6" fill="#1c2c6c" opacity=".8"/><circle cx="888.9" cy="38.2" r="1.3" fill="#1c2c6c" opacity=".8"/><circle cx="883.6" cy="18.2" r="1.3" fill="#1c2c6c" opacity=".8"/><circle cx="878.4" cy="29.3" r="1.3" fill="#1c2c6c" opacity=".8"/><circle cx="891.3" cy="35.4" r="0.8" fill="#1c2c6c" opacity=".8"/><circle cx="877.9" cy="25.0" r="0.8" fill="#1c2c6c" opacity=".8"/><circle cx="899.3" cy="36.7" r="0.5" fill="#1c2c6c" opacity=".8"/><circle cx="879.4" cy="35.8" r="0.5" fill="#1c2c6c" opacity=".8"/><circle cx="1029.7" cy="13.3" r="1.0" fill="#5a1060" opacity=".8"/><circle cx="1026.8" cy="29.7" r="1.0" fill="#5a1060" opacity=".8"/><circle cx="1021.1" cy="17.5" r="1.0" fill="#5a1060" opacity=".8"/><circle cx="1023.7" cy="10.3" r="1.3" fill="#5a1060" opacity=".8"/><circle cx="1022.6" cy="0.5" r="1.0" fill="#5a1060" opacity=".8"/><circle cx="1007.7" cy="14.6" r="1.0" fill="#5a1060" opacity=".8"/><circle cx="1037.0" cy="15.0" r="0.6" fill="#5a1060" opacity=".8"/><circle cx="1006.5" cy="-6.4" r="1.0" fill="#5a1060" opacity=".8"/><circle cx="1005.8" cy="14.9" r="0.6" fill="#5a1060" opacity=".8"/><circle cx="1016.3" cy="11.6" r="0.6" fill="#5a1060" opacity=".8"/><circle cx="1011.7" cy="22.5" r="0.8" fill="#5a1060" opacity=".8"/><circle cx="1001.2" cy="3.4" r="0.6" fill="#5a1060" opacity=".8"/><circle cx="1027.8" cy="8.2" r="1.3" fill="#5a1060" opacity=".8"/><circle cx="1032.1" cy="17.3" r="1.3" fill="#5a1060" opacity=".8"/><circle cx="1016.4" cy="8.3" r="0.6" fill="#5a1060" opacity=".8"/><circle cx="1013.6" cy="11.6" r="0.6" fill="#5a1060" opacity=".8"/><circle cx="1022.7" cy="-15.9" r="0.5" fill="#5a1060" opacity=".8"/><circle cx="1014.5" cy="-2.1" r="0.8" fill="#5a1060" opacity=".8"/><circle cx="1001.0" cy="3.1" r="1.3" fill="#5a1060" opacity=".8"/><circle cx="1013.8" cy="23.6" r="1.0" fill="#5a1060" opacity=".8"/><circle cx="1012.6" cy="2.2" r="0.6" fill="#5a1060" opacity=".8"/><circle cx="1019.9" cy="19.1" r="0.8" fill="#5a1060" opacity=".8"/><circle cx="1022.5" cy="10.5" r="0.6" fill="#5a1060" opacity=".8"/><circle cx="1014.3" cy="-2.3" r="0.8" fill="#5a1060" opacity=".8"/><circle cx="1027.1" cy="3.4" r="1.3" fill="#5a1060" opacity=".8"/><circle cx="1023.7" cy="-3.9" r="0.5" fill="#5a1060" opacity=".8"/><circle cx="1031.5" cy="13.5" r="0.6" fill="#5a1060" opacity=".8"/><circle cx="1015.8" cy="15.0" r="0.6" fill="#5a1060" opacity=".8"/><circle cx="1019.4" cy="9.7" r="0.5" fill="#5a1060" opacity=".8"/><circle cx="1005.1" cy="5.9" r="0.5" fill="#5a1060" opacity=".8"/><circle cx="1025.2" cy="-6.2" r="0.5" fill="#5a1060" opacity=".8"/><circle cx="1026.5" cy="17.2" r="1.0" fill="#5a1060" opacity=".8"/><circle cx="1005.1" cy="-13.9" r="0.5" fill="#5a1060" opacity=".8"/><circle cx="1021.5" cy="-13.6" r="0.5" fill="#5a1060" opacity=".8"/><circle cx="1024.8" cy="16.3" r="0.6" fill="#5a1060" opacity=".8"/><circle cx="1007.5" cy="-2.5" r="0.8" fill="#5a1060" opacity=".8"/><circle cx="1028.3" cy="-2.1" r="1.3" fill="#5a1060" opacity=".8"/><circle cx="1020.8" cy="17.5" r="0.6" fill="#5a1060" opacity=".8"/><circle cx="1017.6" cy="13.6" r="0.8" fill="#5a1060" opacity=".8"/><circle cx="1009.2" cy="5.7" r="1.0" fill="#5a1060" opacity=".8"/><circle cx="1027.3" cy="3.1" r="1.0" fill="#5a1060" opacity=".8"/><circle cx="1027.7" cy="6.6" r="1.0" fill="#5a1060" opacity=".8"/><circle cx="1018.8" cy="8.7" r="0.6" fill="#5a1060" opacity=".8"/><circle cx="1028.0" cy="2.5" r="1.3" fill="#5a1060" opacity=".8"/><circle cx="1013.6" cy="2.8" r="1.0" fill="#5a1060" opacity=".8"/><polygon points="1038.4,75.8 1025.0,100.0 1042.0,100.0" fill="#4cc000"/><path d="M25.5 669 V683" stroke="#2020e0" stroke-width="1"/><path d="M25.5 682.5 H39" stroke="#e02020" stroke-width="1"/><text x="23" y="666.5" font-size="9" font-weight="bold" fill="#2020e0" font-family="Liberation Sans,sans-serif" style="position:static">z</text><text x="38.5" y="682.5" font-size="9" font-weight="bold" fill="#e02020" font-family="Liberation Sans,sans-serif" style="position:static">x</text><text x="547.5" y="701" font-size="10.2" font-weight="bold" text-anchor="middle" fill="#ececec" font-family="DejaVu Sans Condensed,Liberation Sans,sans-serif" style="position:static">persp</text></svg>
<!-- attred -->
<div style="left:1439px;top:147px;width:4px;height:753px;background:#393939;"></div>
<div style="left:1441px;top:149px;width:463px;height:751px;background:#444;"></div>
<div style="left:1904px;top:147px;width:16px;height:753px;background:#3a3a3a;"></div>
<div style="left:1904px;top:150px;width:16px;height:156px;background:#3e3e3e;border:1px solid #4a4a4a;border-right:none;border-radius:3px 0 0 3px"></div>
<div style="left:1904px;top:308px;width:16px;height:110px;background:#3e3e3e;border:1px solid #4a4a4a;border-right:none;border-radius:3px 0 0 3px"></div>
<div style="left:1903px;top:418px;width:17px;height:103px;background:#444;border-radius:3px 0 0 3px"></div>
<span class="t" style="left:1917.5px;top:159px;transform-origin:0 0;transform:rotate(90deg);color:#b4b4b4;font-size:11px;letter-spacing:0.162px;">Channel Box / Layer Editor</span>
<span class="t" style="left:1917.5px;top:318.5px;transform-origin:0 0;transform:rotate(90deg);color:#b4b4b4;font-size:11px;letter-spacing:0.465px;">Modeling Toolkit</span>
<span class="t" style="left:1917.5px;top:428.5px;transform-origin:0 0;transform:rotate(90deg);color:#f0f0f0;font-size:11px;letter-spacing:0.243px;">Attribute Editor</span>
<span class="t" style="left:1452.4px;top:152.7px;color:#e0e0e0;font-size:11px;letter-spacing:-0.224px;">List</span>
<span class="t" style="left:1484.4px;top:152.7px;color:#e0e0e0;font-size:11px;letter-spacing:-0.040px;">Selected</span>
<span class="t" style="left:1542px;top:152.7px;color:#e0e0e0;font-size:11px;letter-spacing:0.295px;">Focus</span>
<span class="t" style="left:1587px;top:152.7px;color:#e0e0e0;font-size:11px;letter-spacing:0.187px;">Attributes</span>
<span class="t" style="left:1653px;top:152.7px;color:#e0e0e0;font-size:11px;letter-spacing:0.131px;">Display</span>
<span class="t" style="left:1705px;top:152.7px;color:#e0e0e0;font-size:11px;letter-spacing:0.674px;">Show</span>
<span class="t" style="left:1749px;top:152.7px;color:#e0e0e0;font-size:11px;letter-spacing:0.282px;">Help</span>
<div style="left:1449px;top:185px;width:418px;height:18px;background:#373737;"></div>
<div style="left:1451px;top:187px;width:132.5px;height:16px;background:#3f3f3f;border-radius:3px 3px 0 0;border:1px solid #2c2c2c;border-bottom:none;box-shadow:inset 1px 1px 0 #4a4a4a"></div>
<span class="t" style="left:1461.2px;top:188.5px;color:#b4b4b4;font-size:11px;letter-spacing:0.090px;">pasted__polySurface5</span>
<div style="left:1585.7px;top:187px;width:164.89999999999986px;height:16px;background:#3f3f3f;border-radius:3px 3px 0 0;border:1px solid #2c2c2c;border-bottom:none;box-shadow:inset 1px 1px 0 #4a4a4a"></div>
<span class="t" style="left:1596.3px;top:188.5px;color:#b4b4b4;font-size:11px;letter-spacing:0.104px;">pasted__polySurface5Shape</span>
<div style="left:1752.6px;top:187px;width:114.40000000000009px;height:16px;background:#3f3f3f;border-radius:3px 3px 0 0;border:1px solid #2c2c2c;border-bottom:none;box-shadow:inset 1px 1px 0 #4a4a4a"></div>
<span class="t" style="left:1763.2px;top:188.5px;color:#b4b4b4;font-size:11px;letter-spacing:0.051px;">polySurfaceShape1</span>
<svg style="left:1871px;top:189px;" width="6" height="10" viewBox="0 0 6 10"><path d="M6 0 L6 10 L0 5Z" fill="#6a6a6a"/></svg>
<svg style="left:1885.5px;top:189px;" width="6" height="10" viewBox="0 0 6 10"><path d="M0 0 L0 10 L6 5Z" fill="#e0e0e0"/></svg>
<span class="t" style="left:1552.5px;top:238.5px;color:#d0d0d0;font-size:11px;letter-spacing:-0.139px;">lambert:</span>
<div style="left:1600px;top:234px;width:154px;height:22px;background:#2b2b2b;border-radius:2px"></div>
<span class="t" style="left:1605.4px;top:238.5px;color:#e4e4e4;font-size:11px;letter-spacing:0.057px;">Foliage_01</span>
<svg style="left:1766px;top:226px;" width="18" height="14" viewBox="0 0 18 14"><rect x="3.500" y="0.700" width="13.500" height="12.600" fill="none" stroke="#d0d0d0" stroke-width="1.300"/><path d="M0.500 3.500 L6 7 L0.500 10.500Z" fill="#d0d0d0" stroke="#444" stroke-width=".6"/></svg>
<svg style="left:1766px;top:248px;" width="18" height="14" viewBox="0 0 18 14"><rect x="0.700" y="0.700" width="13.500" height="12.600" fill="none" stroke="#d0d0d0" stroke-width="1.300"/><path d="M11.500 3.500 L17 7 L11.500 10.500Z" fill="#d0d0d0" stroke="#444" stroke-width=".6"/></svg>
<div style="left:1795px;top:213px;width:70px;height:20px;background:#5d5d5d;"></div>
<span class="t" style="left:1815.4px;top:217px;color:#eee;font-size:11px;letter-spacing:0.155px;">Focus</span>
<div style="left:1795px;top:235px;width:70px;height:20px;background:#5d5d5d;"></div>
<span class="t" style="left:1812px;top:239px;color:#eee;font-size:11px;letter-spacing:-0.082px;">Presets</span>
<div style="left:1795px;top:257px;width:35px;height:20px;background:#5d5d5d;"></div>
<span class="t" style="left:1798.5px;top:261px;color:#eee;font-size:11px;letter-spacing:0.374px;">Show</span>
<div style="left:1832px;top:257px;width:35px;height:20px;background:#5d5d5d;"></div>
<span class="t" style="left:1837.3px;top:261px;color:#eee;font-size:11px;letter-spacing:0.232px;">Hide</span>
<div style="left:1602px;top:291px;width:65px;height:64px;background:#000;"></div>
<svg style="left:1617.8px;top:307px" width="35.2" height="33" viewBox="0 0 35.2 33"><defs><linearGradient id="mA2" x1="0" y1="0" x2="1" y2="1"><stop offset="0" stop-color="#a8dcdc"/><stop offset="1" stop-color="#4aa4a8"/></linearGradient><linearGradient id="mB2" x1="0" y1="0" x2="0" y2="1"><stop offset="0" stop-color="#0f8f98"/><stop offset="1" stop-color="#2cc4c4"/></linearGradient><linearGradient id="mC2" x1="1" y1="0" x2="0" y2="1"><stop offset="0" stop-color="#1fb8bc"/><stop offset="1" stop-color="#0c7884"/></linearGradient></defs><path d="M0 0.800 L8.400 9 V32 L0 33Z" fill="url(#mB2)"/><path d="M0 33 L8.400 17 V32Z" fill="#16707e"/><path d="M35.200 0.800 V33 L26.500 32 V17Z" fill="url(#mB2)"/><path d="M35.200 0.800 L26.500 32 V17Z" fill="#157686" opacity=".85"/><path d="M24.500 0.800 H35.200 L26.500 17 L21.500 24.400 L15.700 26.300 Z" fill="url(#mC2)"/><path d="M0 0.800 L10.300 0 L21.500 24.400 L15.700 26.300 Z" fill="url(#mA2)"/></svg>
<div style="left:1605px;top:362px;width:157px;height:13px;background:#5d5d5d;border-radius:2px"></div>
<div style="left:1742px;top:362px;width:1px;height:13px;background:#4a4a4a;"></div>
<span class="t" style="left:1608.5px;top:360px;color:#d8d8d8;font-size:11px;letter-spacing:-0.148px;">Lambert</span>
<svg style="left:1748px;top:364px;" width="8" height="5" viewBox="0 0 8 5"><path d="M0 0 L8 0 L4 5Z" fill="#d0d0d0"/></svg>
<div style="left:1447px;top:379px;width:434px;height:375px;background:#494949;"></div>
<div style="left:1449px;top:379.5px;width:431px;height:19px;background:#5d5d5d;border-radius:2px"></div>
<span class="t" style="left:1475.1px;top:382.5px;color:#cfcfcf;font-size:11px;font-weight:bold;letter-spacing:0.1px">Common Material Attributes</span>
<svg style="left:1883px;top:365px;" width="9" height="5" viewBox="0 0 9 5"><path d="M0 5 L9 5 L4.500 0Z" fill="#c4c4c4"/></svg>
<div style="left:1883px;top:384px;width:10px;height:340px;background:#5d5d5d;border-radius:5px"></div>
<svg style="left:1883px;top:745px;" width="9" height="5" viewBox="0 0 9 5"><path d="M0 0 L9 0 L4.500 5Z" fill="#c4c4c4"/></svg>
<div style="left:1607px;top:404px;width:68px;height:13px;background:#000;"></div>
<div style="left:1679px;top:409px;width:164px;height:3px;background:#3b3b3b;border-radius:1.500px"></div>
<div style="left:1680px;top:404px;width:7px;height:13px;background:#6e6e6e;border-radius:2px"></div>
<svg style="left:1850.5px;top:403.5px;" width="15" height="13" viewBox="0 0 15 13"><rect x="4.500" y="0.600" width="10" height="11.800" fill="none" stroke="#111" stroke-width="1.200"/><path d="M0 2.500 L7.500 6.500 L0 10.500Z" fill="#111"/></svg>
<div style="left:1607px;top:424px;width:68px;height:13px;background:#000;"></div>
<div style="left:1679px;top:429px;width:164px;height:3px;background:#3b3b3b;border-radius:1.500px"></div>
<div style="left:1680px;top:424px;width:7px;height:13px;background:#6e6e6e;border-radius:2px"></div>
<svg style="left:1850.5px;top:423.5px;" width="15" height="13" viewBox="0 0 15 13"><rect x="4.500" y="0.600" width="10" height="11.800" fill="none" stroke="#111" stroke-width="1.200"/><path d="M0 2.500 L7.500 6.500 L0 10.500Z" fill="#111"/></svg>
<div style="left:1607px;top:444px;width:68px;height:13px;background:#000;"></div>
<div style="left:1679px;top:449px;width:164px;height:3px;background:#2b2b2b;border-radius:1.500px"></div>
<div style="left:1680px;top:444px;width:7px;height:13px;background:#c0c0c0;border-radius:2px"></div>
<svg style="left:1851px;top:443.5px;" width="12" height="12" viewBox="0 0 12 12"><rect x="0" y="0" width="12" height="12" fill="#f4f4f4"/><rect x="1" y="1" width="5" height="5" fill="#111"/><rect x="6" y="6" width="5" height="5" fill="#111"/></svg>
<div style="left:1607px;top:464px;width:68px;height:13px;background:#000;"></div>
<div style="left:1679px;top:469px;width:164px;height:3px;background:#2b2b2b;border-radius:1.500px"></div>
<div style="left:1680px;top:464px;width:7px;height:13px;background:#c0c0c0;border-radius:2px"></div>
<svg style="left:1851px;top:463.5px;" width="12" height="12" viewBox="0 0 12 12"><rect x="0" y="0" width="12" height="12" fill="#f4f4f4"/><rect x="1" y="1" width="5" height="5" fill="#111"/><rect x="6" y="6" width="5" height="5" fill="#111"/></svg>
<div style="left:1608px;top:484px;width:233px;height:18px;background:#2d2d2d;border-radius:2px"></div>
<svg style="left:1850.5px;top:485.5px;" width="12" height="12" viewBox="0 0 12 12"><rect x="0" y="0" width="12" height="12" fill="#f4f4f4"/><rect x="1" y="1" width="5" height="5" fill="#111"/><rect x="6" y="6" width="5" height="5" fill="#111"/></svg>
<div style="left:1607px;top:507px;width:68px;height:18px;background:#2b2b2b;border-radius:2px"></div>
<span class="t" style="left:1611.5px;top:509.5px;color:#e0e0e0;font-size:11px;letter-spacing:-0.264px;">1.000</span>
<div style="left:1679px;top:514px;width:164px;height:3px;background:#2b2b2b;border-radius:1.500px"></div>
<div style="left:1836px;top:509.5px;width:7px;height:13px;background:#c0c0c0;border-radius:2px"></div>
<svg style="left:1851px;top:509px;" width="12" height="12" viewBox="0 0 12 12"><rect x="0" y="0" width="12" height="12" fill="#f4f4f4"/><rect x="1" y="1" width="5" height="5" fill="#111"/><rect x="6" y="6" width="5" height="5" fill="#111"/></svg>
<div style="left:1607px;top:529px;width:68px;height:18px;background:#2b2b2b;border-radius:2px"></div>
<span class="t" style="left:1611.5px;top:531.5px;color:#e0e0e0;font-size:11px;letter-spacing:-0.264px;">0.000</span>
<div style="left:1679px;top:536px;width:164px;height:3px;background:#2b2b2b;border-radius:1.500px"></div>
<div style="left:1680px;top:531.5px;width:7px;height:13px;background:#c0c0c0;border-radius:2px"></div>
<svg style="left:1851px;top:531px;" width="12" height="12" viewBox="0 0 12 12"><rect x="0" y="0" width="12" height="12" fill="#f4f4f4"/><rect x="1" y="1" width="5" height="5" fill="#111"/><rect x="6" y="6" width="5" height="5" fill="#111"/></svg>
<div style="left:1607px;top:551px;width:68px;height:18px;background:#2b2b2b;border-radius:2px"></div>
<span class="t" style="left:1611.5px;top:553.5px;color:#e0e0e0;font-size:11px;letter-spacing:-0.264px;">0.050</span>
<div style="left:1679px;top:558px;width:164px;height:3px;background:#2b2b2b;border-radius:1.500px"></div>
<div style="left:1681px;top:553.5px;width:7px;height:13px;background:#c0c0c0;border-radius:2px"></div>
<svg style="left:1851px;top:553px;" width="12" height="12" viewBox="0 0 12 12"><rect x="0" y="0" width="12" height="12" fill="#f4f4f4"/><rect x="1" y="1" width="5" height="5" fill="#111"/><rect x="6" y="6" width="5" height="5" fill="#111"/></svg>
<div style="left:1607px;top:573px;width:68px;height:18px;background:#2b2b2b;border-radius:2px"></div>
<span class="t" style="left:1611.5px;top:575.5px;color:#e0e0e0;font-size:11px;letter-spacing:-0.264px;">0.500</span>
<div style="left:1679px;top:580px;width:164px;height:3px;background:#2b2b2b;border-radius:1.500px"></div>
<div style="left:1758px;top:575.5px;width:7px;height:13px;background:#c0c0c0;border-radius:2px"></div>
<svg style="left:1851px;top:575px;" width="12" height="12" viewBox="0 0 12 12"><rect x="0" y="0" width="12" height="12" fill="#f4f4f4"/><rect x="1" y="1" width="5" height="5" fill="#111"/><rect x="6" y="6" width="5" height="5" fill="#111"/></svg>
<div style="left:1449px;top:595.5px;width:431px;height:19px;background:#5d5d5d;border-radius:2px"></div>
<div style="left:1449px;top:617.5px;width:431px;height:19px;background:#5d5d5d;border-radius:2px"></div>
<div style="left:1449px;top:639.5px;width:431px;height:19px;background:#5d5d5d;border-radius:2px"></div>
<div style="left:1449px;top:661.5px;width:431px;height:19px;background:#5d5d5d;border-radius:2px"></div>
<div style="left:1449px;top:683.5px;width:431px;height:19px;background:#5d5d5d;border-radius:2px"></div>
<div style="left:1449px;top:705.5px;width:431px;height:19px;background:#5d5d5d;border-radius:2px"></div>
<div style="left:1449px;top:727.5px;width:431px;height:19px;background:#5d5d5d;border-radius:2px"></div>
<div style="left:1449px;top:749.5px;width:431px;height:5px;background:#5d5d5d;border-radius:2px"></div>
<span class="t" style="left:1476px;top:598.5px;color:#9a9a9a;font-size:11px;font-weight:bold">Special Effects</span>
<span class="t" style="left:1476px;top:620.5px;color:#9a9a9a;font-size:11px;font-weight:bold">Matte Opacity</span>
<span class="t" style="left:1476px;top:642.5px;color:#9a9a9a;font-size:11px;font-weight:bold">Raytrace Options</span>
<span class="t" style="left:1476px;top:686.5px;color:#9a9a9a;font-size:11px;font-weight:bold">Node Behavior</span>
<span class="t" style="left:1476px;top:708.5px;color:#9a9a9a;font-size:11px;font-weight:bold">UUID</span>
<span class="t" style="left:1476px;top:730.5px;color:#9a9a9a;font-size:11px;font-weight:bold">Extra Attributes</span>
<span class="t" style="left:1473.4px;top:665px;color:#9a9a9a;font-size:11px;font-weight:bold;letter-spacing:0.1px">Vector Renderer Control</span>
<div style="left:1593px;top:760px;width:153px;height:1px;background-image:linear-gradient(90deg,#777 1px,transparent 1px);background-size:3px 1px"></div>
<span class="t" style="left:1457.3px;top:763.2px;color:#a4a4a4;font-size:11px;letter-spacing:-0.409px;font-weight:bold;">Notes:&nbsp; Foliage_01</span>
<div style="left:1448px;top:777.5px;width:450px;height:89.5px;background:#2b2b2b;"></div>
<div style="left:1445px;top:872px;width:149px;height:25.5px;background:#5d5d5d;"></div>
<span class="t" style="left:1504.4px;top:879px;color:#eee;font-size:11px;letter-spacing:-0.223px;">Select</span>
<div style="left:1596px;top:872px;width:153px;height:25.5px;background:#5d5d5d;"></div>
<span class="t" style="left:1633.4px;top:879px;color:#eee;font-size:11px;letter-spacing:0.167px;">Load Attributes</span>
<div style="left:1751px;top:872px;width:149.5px;height:25.5px;background:#5d5d5d;"></div>
<span class="t" style="left:1803.4px;top:879px;color:#eee;font-size:11px;letter-spacing:-0.003px;">Copy Tab</span>
<!-- timeline -->
<div style="left:0px;top:900px;width:1920px;height:141px;background:#444;"></div>
<div style="left:0px;top:901.5px;width:1920px;height:3.5px;background:#3b3b3b;"></div>
<div style="left:3px;top:908px;width:6px;height:32px;background-image:radial-gradient(circle at 1px 1px,#6c6c6c 0.6px,transparent 0.85px);background-size:3px 3px"></div>
<div style="left:13px;top:909px;width:1611px;height:31px;background:#2b2b2b;"></div>
<div style="left:13px;top:909px;width:7px;height:31px;background:#5a5a5a;overflow:hidden"><span class="t" style="left:-3.5px;top:8.5px;color:#e8e8e8;font-size:11px;">0</span></div>
<div style="left:73.0px;top:922px;width:1.6px;height:12.5px;background:#b4b4b4;"></div>
<span class="t" style="left:76.0px;top:905.5px;color:#9a9a9a;font-size:10.5px;letter-spacing:0.2px">5</span>
<div style="left:139.5px;top:922px;width:1.6px;height:12.5px;background:#b4b4b4;"></div>
<span class="t" style="left:142.4px;top:905.5px;color:#9a9a9a;font-size:10.5px;letter-spacing:0.2px">10</span>
<div style="left:206.0px;top:922px;width:1.6px;height:12.5px;background:#b4b4b4;"></div>
<span class="t" style="left:208.9px;top:905.5px;color:#9a9a9a;font-size:10.5px;letter-spacing:0.2px">15</span>
<div style="left:272.5px;top:922px;width:1.6px;height:12.5px;background:#b4b4b4;"></div>
<span class="t" style="left:275.4px;top:905.5px;color:#9a9a9a;font-size:10.5px;letter-spacing:0.2px">20</span>
<div style="left:339.0px;top:922px;width:1.6px;height:12.5px;background:#b4b4b4;"></div>
<span class="t" style="left:341.9px;top:905.5px;color:#9a9a9a;font-size:10.5px;letter-spacing:0.2px">25</span>
<div style="left:405.5px;top:922px;width:1.6px;height:12.5px;background:#b4b4b4;"></div>
<span class="t" style="left:408.4px;top:905.5px;color:#9a9a9a;font-size:10.5px;letter-spacing:0.2px">30</span>
<div style="left:472.0px;top:922px;width:1.6px;height:12.5px;background:#b4b4b4;"></div>
<span class="t" style="left:474.9px;top:905.5px;color:#9a9a9a;font-size:10.5px;letter-spacing:0.2px">35</span>
<div style="left:538.5px;top:922px;width:1.6px;height:12.5px;background:#b4b4b4;"></div>
<span class="t" style="left:541.4px;top:905.5px;color:#9a9a9a;font-size:10.5px;letter-spacing:0.2px">40</span>
<div style="left:604.9px;top:922px;width:1.6px;height:12.5px;background:#b4b4b4;"></div>
<span class="t" style="left:607.9px;top:905.5px;color:#9a9a9a;font-size:10.5px;letter-spacing:0.2px">45</span>
<div style="left:671.4px;top:922px;width:1.6px;height:12.5px;background:#b4b4b4;"></div>
<span class="t" style="left:674.3px;top:905.5px;color:#9a9a9a;font-size:10.5px;letter-spacing:0.2px">50</span>
<div style="left:737.9px;top:922px;width:1.6px;height:12.5px;background:#b4b4b4;"></div>
<span class="t" style="left:740.8px;top:905.5px;color:#9a9a9a;font-size:10.5px;letter-spacing:0.2px">55</span>
<div style="left:804.4px;top:922px;width:1.6px;height:12.5px;background:#b4b4b4;"></div>
<span class="t" style="left:807.3px;top:905.5px;color:#9a9a9a;font-size:10.5px;letter-spacing:0.2px">60</span>
<div style="left:870.9px;top:922px;width:1.6px;height:12.5px;background:#b4b4b4;"></div>
<span class="t" style="left:873.8px;top:905.5px;color:#9a9a9a;font-size:10.5px;letter-spacing:0.2px">65</span>
<div style="left:937.4px;top:922px;width:1.6px;height:12.5px;background:#b4b4b4;"></div>
<span class="t" style="left:940.3px;top:905.5px;color:#9a9a9a;font-size:10.5px;letter-spacing:0.2px">70</span>
<div style="left:1003.9px;top:922px;width:1.6px;height:12.5px;background:#b4b4b4;"></div>
<span class="t" style="left:1006.8px;top:905.5px;color:#9a9a9a;font-size:10.5px;letter-spacing:0.2px">75</span>
<div style="left:1070.4px;top:922px;width:1.6px;height:12.5px;background:#b4b4b4;"></div>
<span class="t" style="left:1073.3px;top:905.5px;color:#9a9a9a;font-size:10.5px;letter-spacing:0.2px">80</span>
<div style="left:1136.8px;top:922px;width:1.6px;height:12.5px;background:#b4b4b4;"></div>
<span class="t" style="left:1139.8px;top:905.5px;color:#9a9a9a;font-size:10.5px;letter-spacing:0.2px">85</span>
<div style="left:1203.3px;top:922px;width:1.6px;height:12.5px;background:#b4b4b4;"></div>
<span class="t" style="left:1206.2px;top:905.5px;color:#9a9a9a;font-size:10.5px;letter-spacing:0.2px">90</span>
<div style="left:1269.8px;top:922px;width:1.6px;height:12.5px;background:#b4b4b4;"></div>
<span class="t" style="left:1272.7px;top:905.5px;color:#9a9a9a;font-size:10.5px;letter-spacing:0.2px">95</span>
<div style="left:1336.3px;top:922px;width:1.6px;height:12.5px;background:#b4b4b4;"></div>
<span class="t" style="left:1339.2px;top:905.5px;color:#9a9a9a;font-size:10.5px;letter-spacing:0.2px">100</span>
<div style="left:1402.8px;top:922px;width:1.6px;height:12.5px;background:#b4b4b4;"></div>
<span class="t" style="left:1405.7px;top:905.5px;color:#9a9a9a;font-size:10.5px;letter-spacing:0.2px">105</span>
<div style="left:1469.3px;top:922px;width:1.6px;height:12.5px;background:#b4b4b4;"></div>
<span class="t" style="left:1472.2px;top:905.5px;color:#9a9a9a;font-size:10.5px;letter-spacing:0.2px">110</span>
<div style="left:1535.8px;top:922px;width:1.6px;height:12.5px;background:#b4b4b4;"></div>
<span class="t" style="left:1538.7px;top:905.5px;color:#9a9a9a;font-size:10.5px;letter-spacing:0.2px">115</span>
<div style="left:1602.3px;top:922px;width:1.6px;height:12.5px;background:#b4b4b4;"></div>
<span class="t" style="left:1605.2px;top:905.5px;color:#9a9a9a;font-size:10.5px;letter-spacing:0.2px">120</span>
<div style="left:0px;top:941px;width:1920px;height:3px;background:#3a3a3a;"></div>
<div style="left:1632px;top:915px;width:87px;height:18px;background:#2b2b2b;border-radius:2px"></div>
<span class="t" style="left:1636.5px;top:917px;color:#e0e0e0;font-size:11px;">0</span>
<svg style="left:1728.5px;top:917px;" width="18" height="13" viewBox="0 0 18 13"><rect x="1" y="0.500" width="1.800" height="12" fill="#d4d4d4"/><path d="M10 0.500 V12.500 L3.500 6.500Z M17 0.500 V12.500 L10.500 6.500Z" fill="#d4d4d4"/></svg>
<svg style="left:1752.5px;top:917px;" width="18" height="13" viewBox="0 0 18 13"><rect x="3" y="0.500" width="1.800" height="12" fill="#d4d4d4"/><path d="M14 0.500 V12.500 L6 6.500Z" fill="#d4d4d4"/></svg>
<svg style="left:1773.5px;top:917px;" width="18" height="13" viewBox="0 0 18 13"><rect x="3" y="-1" width="2.200" height="15" fill="#e5954d"/><path d="M15 0.500 V12.500 L6.500 6.500Z" fill="#d4d4d4"/></svg>
<svg style="left:1797.5px;top:917px;" width="18" height="13" viewBox="0 0 18 13"><path d="M15 0 V13 L3 6.500Z" fill="#d4d4d4"/></svg>
<svg style="left:1821px;top:917px;" width="18" height="13" viewBox="0 0 18 13"><path d="M3 0 V13 L15 6.500Z" fill="#d4d4d4"/></svg>
<svg style="left:1844.5px;top:917px;" width="18" height="13" viewBox="0 0 18 13"><rect x="12.800" y="-1" width="2.200" height="15" fill="#e5954d"/><path d="M3 0.500 V12.500 L11.500 6.500Z" fill="#d4d4d4"/></svg>
<svg style="left:1867px;top:917px;" width="18" height="13" viewBox="0 0 18 13"><rect x="13" y="0.500" width="1.800" height="12" fill="#d4d4d4"/><path d="M4 0.500 V12.500 L12 6.500Z" fill="#d4d4d4"/></svg>
<svg style="left:1890px;top:917px;" width="18" height="13" viewBox="0 0 18 13"><rect x="15.200" y="0.500" width="1.800" height="12" fill="#d4d4d4"/><path d="M1 0.500 V12.500 L7.500 6.500Z M8 0.500 V12.500 L14.500 6.500Z" fill="#d4d4d4"/></svg>
<div style="left:3px;top:948px;width:6px;height:30px;background-image:radial-gradient(circle at 1px 1px,#6c6c6c 0.6px,transparent 0.85px);background-size:3px 3px"></div>
<div style="left:14px;top:950px;width:88px;height:25px;background:#2b2b2b;border-radius:3px"></div>
<span class="t" style="left:18.5px;top:956px;color:#e8e8e8;font-size:11px;">1</span>
<div style="left:110px;top:950px;width:88px;height:25px;background:#2b2b2b;border-radius:3px"></div>
<span class="t" style="left:114.5px;top:956px;color:#e8e8e8;font-size:11px;">1</span>
<div style="left:205px;top:948px;width:920px;height:29px;background:#3f3f3f;"></div>
<div style="left:210px;top:952px;width:556.5px;height:20px;background:#5d5d5d;border-radius:4px"></div>
<div style="left:214px;top:955px;width:15px;height:14px;background:#9c9c9c;border-radius:3px"></div>
<div style="left:748.5px;top:955px;width:15px;height:14px;background:#9c9c9c;border-radius:3px"></div>
<span class="t" style="left:231.5px;top:955px;color:#e0e0e0;font-size:10.5px;">1</span>
<span class="t" style="left:725.5px;top:955px;color:#e0e0e0;font-size:10.5px;">120</span>
<div style="left:1132px;top:950px;width:88px;height:25px;background:#2b2b2b;border-radius:3px"></div>
<span class="t" style="left:1137.5px;top:956px;color:#e8e8e8;font-size:11px;">120</span>
<div style="left:1228px;top:950px;width:88px;height:25px;background:#2b2b2b;border-radius:3px"></div>
<span class="t" style="left:1233.5px;top:956px;color:#e8e8e8;font-size:11px;">200</span>
<div style="left:1321px;top:951px;width:1px;height:24px;background:#666;"></div><div style="left:1320px;top:956px;width:3px;height:13px;background:#777;border-radius:1px"></div>
<svg style="left:1337px;top:953px;" width="17" height="19" viewBox="0 0 17 19"><path d="M1 3 H10 V18 L5.500 13 L1 18Z" fill="#e5954d"/><path d="M13 0 V8 M9 4 H17" stroke="#f0f0f0" stroke-width="2"/></svg>
<div style="left:1365px;top:951px;width:1px;height:24px;background:#666;"></div><div style="left:1364px;top:956px;width:3px;height:13px;background:#777;border-radius:1px"></div>
<svg style="left:1381px;top:959px;" width="8" height="5" viewBox="0 0 8 5"><path d="M0 0 L8 0 L4.0 5Z" fill="#9a9a9a"/></svg>
<div style="left:1397.5px;top:950px;width:101.5px;height:25px;background:#444;border:1px solid #5c5c5c;border-radius:3px"></div>
<span class="t" style="left:1403.5px;top:956px;color:#d8d8d8;font-size:11px;letter-spacing:0.040px;">No Character Set</span>
<svg style="left:1510px;top:959px;" width="8" height="5" viewBox="0 0 8 5"><path d="M0 0 L8 0 L4.0 5Z" fill="#9a9a9a"/></svg>
<div style="left:1526px;top:950px;width:101.5px;height:25px;background:#444;border:1px solid #5c5c5c;border-radius:3px"></div>
<span class="t" style="left:1532px;top:956px;color:#d8d8d8;font-size:11px;letter-spacing:0.018px;">No Anim Layer</span>
<div style="left:1638px;top:951px;width:1px;height:24px;background:#666;"></div><div style="left:1637px;top:956px;width:3px;height:13px;background:#777;border-radius:1px"></div>
<div style="left:1651.5px;top:952.5px;width:95px;height:19px;background:#5d5d5d;border-radius:2px"></div>
<div style="left:1726px;top:952.5px;width:1px;height:19px;background:#4a4a4a;"></div>
<span class="t" style="left:1655px;top:955.5px;color:#d8d8d8;font-size:11px;letter-spacing:0.058px;">24 fps</span>
<svg style="left:1732px;top:959.5px;" width="9" height="5" viewBox="0 0 9 5"><path d="M0 0 L9 0 L4.500 5Z" fill="#d8d8d8"/></svg>
<svg style="left:1760px;top:954px;" width="17" height="15" viewBox="0 0 17 15"><path d="M4 11.500 A4 4 0 0 1 4 3.500 H12 A4 4 0 0 1 12 11.500 H9" fill="none" stroke="#d0d0d0" stroke-width="1.700"/><path d="M10 8.500 V14.500 L6 11.500Z" fill="#d0d0d0"/></svg>
<div style="left:1787.5px;top:951px;width:22.5px;height:23px;background:#5285a6;"></div>
<svg style="left:1790px;top:954px;" width="18" height="17" viewBox="0 0 18 17"><rect x="0.500" y="3.500" width="16" height="12" fill="#e5954d" stroke="#1e3a4a" stroke-width="1"/><path d="M0.500 6.500 H16.500 M0.500 12.500 H16.500" stroke="#1e3a4a" stroke-width="1"/><rect x="3" y="7.500" width="4" height="4" fill="#e8e8e8"/><rect x="9" y="7.500" width="4" height="4" fill="#e8e8e8"/><path d="M12 0 L17.500 3 L12 6Z" fill="#e8e8e8" stroke="#1e3a4a" stroke-width=".6"/></svg>
<div style="left:1820px;top:951px;width:1px;height:24px;background:#666;"></div><div style="left:1819px;top:956px;width:3px;height:13px;background:#777;border-radius:1px"></div>
<svg style="left:1834px;top:955px;" width="18" height="14" viewBox="0 0 18 14"><path d="M0.500 4.500 H4 L8.500 0.500 V13.500 L4 9.500 H0.500Z" fill="#d0d0d0"/><path d="M11 4 A4 4 0 0 1 11 10 M13.500 1.500 A7 7 0 0 1 13.500 12.500" fill="none" stroke="#d0d0d0" stroke-width="1.300"/></svg>
<div style="left:1860px;top:951px;width:22.5px;height:23px;background:#c23a3a;"></div>
<svg style="left:1862px;top:953px;" width="18" height="19" viewBox="0 0 18 19"><circle cx="9" cy="9.500" r="6.500" fill="none" stroke="#f0d0d0" stroke-width="1.600" stroke-dasharray="14 4"/><path d="M9 5 V10 H13" fill="none" stroke="#402020" stroke-width="1.600"/><path d="M2 3 l4 0 l-1 4z" fill="#f0d0d0"/></svg>
<svg style="left:1890px;top:952px;" width="20" height="21" viewBox="0 0 20 21"><circle cx="11" cy="3.500" r="2.300" fill="#e5954d"/><path d="M5 9 L9.500 6.500 L13 9.500 L16.500 9.500 M9.500 7 L9 12.500 L13 15.500 L12 20 M9 12.500 L6 15.500 L2 15.500" fill="none" stroke="#e5954d" stroke-width="2" stroke-linecap="round" stroke-linejoin="round"/><circle cx="3.500" cy="3.500" r="2.300" fill="none" stroke="#d0d0d0" stroke-width="1.300" stroke-dasharray="1.500 1"/></svg>
<div style="left:0px;top:980px;width:1920px;height:3px;background:#3a3a3a;"></div>
<div style="left:3px;top:986px;width:6px;height:26px;background-image:radial-gradient(circle at 1px 1px,#6c6c6c 0.6px,transparent 0.85px);background-size:3px 3px"></div>
<span class="t" style="left:24.25px;top:991px;color:#e8e8e8;font-size:11px;letter-spacing:0.148px;">MEL</span>
<div style="left:59px;top:987px;width:527px;height:22px;background:#2b2b2b;border-radius:3px"></div>
<div style="left:589.5px;top:992px;width:1px;height:12px;background-image:linear-gradient(#888 1px,transparent 1px);background-size:1px 3px"></div>
<div style="left:594px;top:987px;width:1292.5px;height:22px;background:#2b2b2b;border-radius:3px"></div>
<svg style="left:1892.5px;top:987.5px;" width="19" height="21" viewBox="0 0 19 21"><rect x="0.600" y="0.600" width="17.800" height="19.800" rx="1.500" fill="#c8c8c8"/><rect x="0.600" y="0.600" width="17.800" height="4" fill="#e8e8e8"/><path d="M2 2.600 H12" stroke="#555" stroke-width="1" stroke-dasharray="1 1"/><text x="9.500" y="15.500" text-anchor="middle" font-size="9" font-weight="bold" fill="#333" font-family="Liberation Sans,sans-serif" style="position:static">{;}</text></svg>
<div style="left:0px;top:1013px;width:1920px;height:3px;background:#3a3a3a;"></div>
<div style="left:3px;top:1018px;width:6px;height:22px;background-image:radial-gradient(circle at 1px 1px,#6c6c6c 0.6px,transparent 0.85px);background-size:3px 3px"></div>
<!-- taskbar -->
<div style="left:0px;top:1041px;width:1920px;height:39px;background:linear-gradient(90deg,#0d2c66 0px,#0e3070 330px,#123a7e 480px,#2c5da6 560px,#3f73ba 660px,#4278c0 900px,#3c70b8 1050px,#2558a6 1130px,#0c3a88 1190px,#0a3380 1320px,#08296a 1520px,#06235a 1720px,#051f4e 1920px)"></div>
<div style="left:0px;top:1041px;width:1920px;height:39px;background:linear-gradient(rgba(255,255,255,.10),rgba(255,255,255,0) 40%,rgba(0,0,20,.12))"></div>
<div style="left:0px;top:1040px;width:1920px;height:1px;background:#243a5c;"></div>
<div style="left:0px;top:1041px;width:1920px;height:1px;background:#86a8d8;opacity:.85"></div>
<div style="left:8px;top:1041px;width:38px;height:38px;border-radius:19px;background:radial-gradient(circle at 50% 35%,#9fd0f4 0%,#4a8fd0 35%,#1d4f98 70%,#0d2c66 100%);box-shadow:0 0 0 1.500px rgba(180,210,240,.55),0 0 4px #000"></div>
<svg style="left:15px;top:1048px;" width="24" height="24" viewBox="0 0 24 24"><path d="M2 5 Q6.500 2.500 11 5 L10 11.500 Q6 9.500 1 11.500Z" fill="#e8552d"/><path d="M12.500 5.500 Q17 8 22 5.500 L21 12 Q16.500 14 11.500 12Z" fill="#7cc142"/><path d="M0.800 13 Q5.500 11 9.800 13 L8.800 19.500 Q4.500 17.500 -0.200 19.500Z" fill="#3c9de0"/><path d="M11.200 13.500 Q16 16 20.800 13.500 L19.800 20 Q15 22 10.200 20Z" fill="#f9c81e"/></svg>
<div style="left:60px;top:1041px;width:53px;height:38px;border:1px solid rgba(10,20,50,.75);border-radius:3px;box-shadow:inset 0 0 0 1px rgba(255,255,255,.5);background:linear-gradient(rgba(255,255,255,.20) 0%,rgba(255,255,255,.10) 46%,rgba(255,255,255,.02) 52%,rgba(255,255,255,.08) 100%)"></div>
<div style="left:113px;top:1041px;width:5px;height:38px;border:1px solid rgba(10,20,50,.7);border-left:none;border-radius:0 3px 3px 0;box-shadow:inset -1px 0 0 rgba(255,255,255,.4);background:rgba(255,255,255,.12)"></div>
<svg style="left:70px;top:1044px;" width="32" height="32" viewBox="0 0 32 32"><ellipse cx="16" cy="16" rx="15" ry="15.500" fill="#e3182d"/><ellipse cx="16" cy="16" rx="6.500" ry="11.500" fill="#12306a"/></svg>
<svg style="left:135.5px;top:1045px;" width="30" height="30" viewBox="0 0 30 30"><circle cx="15" cy="15" r="15" fill="#dd4b3e"/><path d="M15 15 L2 7.500 A15 15 0 0 0 13.500 30 L20.500 18Z" fill="#1aa260"/><path d="M15 15 L28.500 9 A15 15 0 0 1 13.500 30 L20 18Z" fill="#fcc934"/><path d="M15 9 H28.500 A15 15 0 0 0 2 7.500 L8.500 16Z" fill="#dd4b3e"/><circle cx="15" cy="15" r="6.800" fill="#f4f4f4"/><circle cx="15" cy="15" r="5.400" fill="#4a8af4"/></svg>
<svg style="left:197px;top:1043px;" width="32" height="33" viewBox="0 0 32 33"><circle cx="16" cy="18" r="14.500" fill="#ff9b1e"/><path d="M16 3.500 C24 5 31 11 30.500 20 C30 28 23 32.500 16 32.500 C8 32.500 1.500 26 1.500 18 C1.500 14 3 11 5 9 C5 11 6 12 7 12 C8 8 12 7 13 3 C14 5 14 6 16 3.500Z" fill="#ff6a1a"/><path d="M22 2 C27 5 30 10 30.500 16 C28 12 25 10 22 9 C23 6 23 4 22 2Z" fill="#ffcb2e"/><circle cx="15" cy="19" r="8" fill="#6b3fd0"/><path d="M7 15 C10 13 13 14 15 16 C18 16 20 18 19 21 C17 24 12 25 9 22 C7 20 6.500 17 7 15Z" fill="#ff9b1e"/></svg>
<div style="left:246px;top:1041px;width:58px;height:38px;border:1px solid rgba(10,20,50,.75);border-radius:3px;box-shadow:inset 0 0 0 1px rgba(255,255,255,.5);background:linear-gradient(rgba(255,255,255,.46) 0%,rgba(255,255,255,.34) 46%,rgba(255,255,255,.20) 52%,rgba(255,255,255,.30) 100%)"></div>
<svg style="left:259px;top:1046px;" width="32" height="30" viewBox="0 0 32 30"><path d="M1 4 H11 L13 7 H27 V24 H1Z" fill="#e8c860"/><path d="M5 8 H15 L17 11 H31 V28 H5Z" fill="#f4dc84" stroke="#c8a040" stroke-width=".8"/><rect x="9" y="20" width="18" height="8" fill="#9cc8ec" stroke="#4a80b8" stroke-width="1"/><rect x="12" y="23" width="12" height="5" fill="#e8f4fc"/><rect x="6" y="5" width="3" height="2" fill="#3c9c3c"/><rect x="20" y="8.500" width="3" height="2" fill="#d04030"/></svg>
<div style="left:308px;top:1041px;width:58px;height:38px;border:1px solid rgba(10,20,50,.75);border-radius:3px;box-shadow:inset 0 0 0 1px rgba(255,255,255,.5);background:linear-gradient(rgba(255,255,255,.78) 0%,rgba(255,255,255,.62) 46%,rgba(255,255,255,.46) 52%,rgba(255,255,255,.56) 100%)"></div>
<div style="left:321px;top:1044px;width:32px;height:33px;background:#dfeeee;"></div>
<svg style="left:325px;top:1046.5px" width="24" height="20" viewBox="0 0 35.2 33"><defs><linearGradient id="mA3" x1="0" y1="0" x2="1" y2="1"><stop offset="0" stop-color="#a8dcdc"/><stop offset="1" stop-color="#4aa4a8"/></linearGradient><linearGradient id="mB3" x1="0" y1="0" x2="0" y2="1"><stop offset="0" stop-color="#0f8f98"/><stop offset="1" stop-color="#2cc4c4"/></linearGradient><linearGradient id="mC3" x1="1" y1="0" x2="0" y2="1"><stop offset="0" stop-color="#1fb8bc"/><stop offset="1" stop-color="#0c7884"/></linearGradient></defs><path d="M0 0.800 L8.400 9 V32 L0 33Z" fill="url(#mB3)"/><path d="M0 33 L8.400 17 V32Z" fill="#16707e"/><path d="M35.200 0.800 V33 L26.500 32 V17Z" fill="url(#mB3)"/><path d="M35.200 0.800 L26.500 32 V17Z" fill="#157686" opacity=".85"/><path d="M24.500 0.800 H35.200 L26.500 17 L21.500 24.400 L15.700 26.300 Z" fill="url(#mC3)"/><path d="M0 0.800 L10.300 0 L21.500 24.400 L15.700 26.300 Z" fill="url(#mA3)"/></svg>
<span class="t" style="left:335px;top:1066px;color:#2a939d;font-size:6.5px;font-weight:bold;font-family:Liberation Sans,sans-serif;line-height:8pxmargin-top:0;">MAYA</span>
<div style="left:370px;top:1041px;width:58px;height:38px;border:1px solid rgba(10,20,50,.75);border-radius:3px;box-shadow:inset 0 0 0 1px rgba(255,255,255,.5);background:linear-gradient(rgba(255,255,255,.46) 0%,rgba(255,255,255,.34) 46%,rgba(255,255,255,.20) 52%,rgba(255,255,255,.30) 100%)"></div>
<div style="left:385px;top:1045px;width:28px;height:28px;background:#0a1c2c;border:2px solid #31c5f0"></div>
<span class="t" style="left:389.5px;top:1050px;color:#31c5f0;font-size:16px;font-weight:bold;font-family:Liberation Sans,sans-serif;line-height:18pxmargin-top:0;">Ps</span>
<div style="left:432px;top:1041px;width:58px;height:38px;border:1px solid rgba(10,20,50,.75);border-radius:3px;box-shadow:inset 0 0 0 1px rgba(255,255,255,.5);background:linear-gradient(rgba(255,255,255,.46) 0%,rgba(255,255,255,.34) 46%,rgba(255,255,255,.20) 52%,rgba(255,255,255,.30) 100%)"></div>
<svg style="left:445px;top:1044px;" width="32" height="33" viewBox="0 0 32 33"><rect x="1.500" y="1.500" width="23" height="29" fill="#f0f0f0" stroke="#888" stroke-width="1"/><rect x="3.500" y="3.500" width="19" height="20" fill="#2a50b0"/><path d="M3.500 14 Q10 8 22.500 12 V23.500 H3.500Z" fill="#88b0e8"/><path d="M3.500 19 Q12 14 22.500 18 V23.500 H3.500Z" fill="#d8e4f4"/><path d="M29 4 L9 25" stroke="#c02030" stroke-width="2.600" stroke-linecap="round"/><path d="M10 23 L5.500 29.500 L11.500 26Z" fill="#e8e8e8" stroke="#555" stroke-width=".7"/></svg>
<span class="t" style="left:1607.5px;top:1050px;color:#fff;font-size:11.5px;letter-spacing:-0.887px;font-family:Liberation Sans,sans-serif;margin-top:0;">EN</span>
<svg style="left:1637px;top:1053px;" width="17" height="16" viewBox="0 0 17 16"><path d="M2 3 L14 0.500 L16 12 L4 15.500Z" fill="#e8943a" stroke="#8a4a10" stroke-width=".8"/><path d="M5 5 L12 3.500 M5.500 8 L13 6.500 M6 11 L13.500 9.500" stroke="#fbe0a0" stroke-width="1.200"/><path d="M12 2 L9 14" stroke="#703808" stroke-width="1.500"/></svg>
<svg style="left:1661px;top:1053px;" width="17" height="16" viewBox="0 0 17 16"><path d="M1 2 L8 6 L15 5 L16.500 6.500 L10.500 9 L12 15 L10.500 15.500 L7 10.500 L3 12 L2 10.500 L5.500 8 L0.500 3Z" fill="#f0f0f0" stroke="#666" stroke-width=".6"/></svg>
<svg style="left:1685px;top:1053px;" width="17" height="16" viewBox="0 0 17 16"><rect x="0.500" y="1.500" width="15" height="13" rx="1.500" fill="#2a2a2a" stroke="#111" stroke-width="1"/><path d="M3 8 C5 4 10 4 12 8 C10 12 5 12 3 8Z" fill="none" stroke="#76b900" stroke-width="1.600"/><circle cx="7.500" cy="8" r="1.600" fill="#76b900"/><rect x="12.800" y="6" width="2" height="6" fill="#f8e020"/><rect x="12.800" y="12.800" width="2" height="2" fill="#f8e020"/></svg>
<svg style="left:1710px;top:1053px;" width="17" height="17" viewBox="0 0 17 17"><circle cx="8.500" cy="8.500" r="7" fill="none" stroke="#8a1420" stroke-width="1.300"/><path d="M3 10 L7.500 14 L12 4" fill="none" stroke="#b01828" stroke-width="1.300"/><path d="M8.500 1 V4" stroke="#b01828" stroke-width="1"/></svg>
<svg style="left:1734px;top:1052px;" width="18" height="18" viewBox="0 0 18 18"><path d="M2 6 A8 8 0 0 1 14 3 L9 8.500Z" fill="#e8e8e8" stroke="#222" stroke-width=".8"/><path d="M9 8.500 L14 16 M9 8.500 L5 16 M3 16 H16" stroke="#ddd" stroke-width="1.400"/><circle cx="12" cy="11" r="3.500" fill="#222" stroke="#ccc" stroke-width=".8"/></svg>
<svg style="left:1758px;top:1052px;" width="18" height="18" viewBox="0 0 18 18"><path d="M2.500 1 V17" stroke="#e8e8e8" stroke-width="1.500"/><path d="M3.500 2 H13 V9 H3.500Z" fill="#f4f4f4" stroke="#888" stroke-width=".6"/><circle cx="12" cy="12.500" r="4.800" fill="#e02020" stroke="#fff" stroke-width=".7"/><path d="M10 10.500 L14 14.500 M14 10.500 L10 14.500" stroke="#fff" stroke-width="1.500"/></svg>
<svg style="left:1782px;top:1052px;" width="18" height="18" viewBox="0 0 18 18"><rect x="5" y="4.500" width="11.500" height="9" fill="#1a3a6a" stroke="#f0f0f0" stroke-width="1.400"/><path d="M8 16.500 H14 M11 14 V16.500" stroke="#f0f0f0" stroke-width="1.400"/><path d="M2.500 1 V9 M1 1.500 H4 M1 4 H4" stroke="#f0f0f0" stroke-width="1.300"/><path d="M2.500 9 V13 H5" fill="none" stroke="#f0f0f0" stroke-width="1"/></svg>
<svg style="left:1806px;top:1053px;" width="18" height="16" viewBox="0 0 18 16"><path d="M0.500 5.500 H4 L8.500 1.500 V14.500 L4 10.500 H0.500Z" fill="#f4f4f4"/><path d="M10.500 5.500 A3.500 3.500 0 0 1 10.500 10.500 M12.500 3.500 A6 6 0 0 1 12.500 12.500 M14.500 1.500 A8.500 8.500 0 0 1 14.500 14.500" fill="none" stroke="#f4f4f4" stroke-width="1.100"/></svg>
<span class="t" style="left:1853.7px;top:1044.5px;color:#fff;font-size:11.5px;letter-spacing:-0.436px;font-family:Liberation Sans,sans-serif;margin-top:0;">21:18</span>
<span class="t" style="left:1840px;top:1062.5px;color:#fff;font-size:11.5px;letter-spacing:-0.506px;font-family:Liberation Sans,sans-serif;margin-top:0;">31.01.2021</span>
<div style="left:1906px;top:1041px;width:14px;height:39px;border:1px solid rgba(10,20,50,.8);box-shadow:inset 0 0 0 1px rgba(255,255,255,.35);background:linear-gradient(rgba(255,255,255,.25),rgba(255,255,255,.05) 50%,rgba(255,255,255,.12))"></div>
<!-- dialog -->
<div style="left:1182px;top:289px;width:419px;height:474px;border-radius:7px;box-shadow:0 0 0 1px rgba(15,25,45,.9),0 2px 10px 2px rgba(0,0,0,.55);background:linear-gradient(180deg,#7d9cca 0px,#5a7db6 20px,#3f64a8 30px,#1f4690 48px,#16367c 120px,#14306e 300px,#17357a 420px,#1d3e88 475px)"></div>
<div style="left:1183px;top:290px;width:417px;height:27px;border-radius:6px 6px 0 0;background:linear-gradient(90deg,#b9cbe6 0px,#c4d3ea 40px,#b4c8e4 150px,#8fb0cc 185px,#6da59a 205px,#4f80b4 235px,#2f5ea6 262px,#2257a0 285px,#4a73b0 320px,#6c8cc0 360px,#7f9ccc 417px)"></div>
<div style="left:1183px;top:290px;width:417px;height:12px;border-radius:6px 6px 0 0;background:linear-gradient(rgba(255,255,255,.35),rgba(255,255,255,.05))"></div>
<div style="left:1183px;top:318px;width:6px;height:438px;background:linear-gradient(180deg,#b8cce8 0px,#d4e0f2 50px,#eef3fa 110px,#7fb0c4 114px,#146078 119px,#125c74 318px,#2258a8 332px,#2f62b8 440px)"></div>
<div style="left:1183px;top:755px;width:417px;height:7px;border-radius:0 0 6px 6px;background:linear-gradient(180deg,#2f5eb0,#3a68b8 60%,#6f98d8)"></div>
<div style="left:1594px;top:318px;width:6px;height:438px;background:linear-gradient(180deg,#6e8ec2 0px,#86a4d2 40px,#c2d4ee 88px,#dce8f8 108px,#7f9ccc 111px,#1a3a88 115px,#16367c 300px,#1b3c86 440px)"></div>
<div style="left:1183px;top:290px;width:417px;height:472px;border-radius:6px;border:1px solid rgba(225,236,250,.55)"></div>
<div style="left:1188px;top:316.5px;width:408px;height:440.5px;background:#444;border:1px solid #1c2a44;box-shadow:0 0 0 1px rgba(200,218,244,.65)"></div>
<div style="left:1189px;top:295px;width:16px;height:16px;background:#dcefef;"></div>
<svg style="left:1190px;top:296.5px;" width="14" height="12" viewBox="0 0 14 12"><path d="M0.500 0.500 H4 L7 6.500 L10 0.500 H13.500 V10 H10 V5 L8 9.500 H6 L4 5 V10 H0.500Z" fill="#2aa3ad"/><path d="M0.500 0.500 H4 V10 H0.500Z" fill="#3cb8c0"/><rect x="4.500" y="10.800" width="5" height="1.200" fill="#2aa3ad"/></svg>
<span class="t" style="left:1210.4px;top:295.5px;color:#000;font-size:12px;letter-spacing:-0.126px;font-family:Liberation Sans,sans-serif;text-shadow:0 0 5px #fff,0 0 8px #fff,0 0 11px rgba(255,255,255,.9);margin-top:0;">Hardware Renderer 2.0 Settings</span>
<div style="left:1491px;top:289px;width:105px;height:19.5px;border:1px solid #22334f;border-top:none;border-radius:0 0 5px 5px;box-shadow:0 0 0 1px rgba(230,240,255,.6);background:linear-gradient(#9cb4d8 0%,#7c98c4 45%,#4f70a8 50%,#6a88ba 100%)"></div>
<div style="left:1547.5px;top:289px;width:47.5px;height:18.5px;border-radius:0 0 4px 0;background:linear-gradient(#e0a698 0%,#d07866 45%,#bf3420 52%,#c4432c 80%,#d8704c 100%)"></div>
<div style="left:1519.5px;top:289px;width:1px;height:18.5px;background:#22334f;box-shadow:1px 0 0 rgba(230,240,255,.5)"></div>
<div style="left:1547px;top:289px;width:1px;height:18.5px;background:#22334f;box-shadow:-1px 0 0 rgba(230,240,255,.5)"></div>
<div style="left:1500.5px;top:297.5px;width:12px;height:5px;background:#fff;border:1px solid #333;border-radius:1px"></div>
<svg style="left:1528px;top:292px;" width="12" height="11" viewBox="0 0 12 11"><rect x="1.500" y="1.500" width="9" height="7.500" fill="none" stroke="#333" stroke-width="3.400"/><rect x="1.500" y="1.500" width="9" height="7.500" fill="none" stroke="#fff" stroke-width="1.900"/></svg>
<svg style="left:1565.5px;top:292px;" width="12" height="11" viewBox="0 0 12 11"><path d="M1.500 1.500 L10.500 9.500 M10.500 1.500 L1.500 9.500" stroke="#333" stroke-width="4.600"/><path d="M1.500 1.500 L10.500 9.500 M10.500 1.500 L1.500 9.500" stroke="#fff" stroke-width="2.700"/></svg>
<span class="t" style="left:1198.2px;top:321px;color:#e0e0e0;font-size:11px;letter-spacing:-0.096px;">Presets</span>
<span class="t" style="left:1249.3px;top:321px;color:#e0e0e0;font-size:11px;letter-spacing:0.182px;">Help</span>
<div style="left:1196px;top:366px;width:140px;height:16px;overflow:hidden"><span class="t" style="left:-3.5px;top:1.5px;color:#c8c8c8;font-size:11px;letter-spacing:0.255px;">hardwareRenderingGlobals:</span></div>
<div style="left:1344px;top:365px;width:208px;height:17.5px;background:#484848;border-radius:2px"></div>
<span class="t" style="left:1349.3px;top:367.5px;color:#e0e0e0;font-size:11px;letter-spacing:0.329px;">hardwareRenderingGlobals</span>
<div style="left:1199px;top:409px;width:376px;height:292px;background:#494949;"></div>
<div style="left:1198px;top:409px;width:377px;height:20px;background:#5d5d5d;border-radius:2px"></div>
<svg style="left:1205px;top:415px;" width="11" height="6" viewBox="0 0 11 6"><path d="M0 0 L11 0 L5.500 6Z" fill="#f0f0f0"/></svg>
<span class="t" style="left:1231.5px;top:413px;color:#d0d0d0;font-size:11px;letter-spacing:-0.532px;font-weight:bold;">Performance</span>
<div style="left:1351px;top:433.7px;width:13px;height:13px;background:#2b2b2b;border-radius:1px"></div><svg style="left:1351px;top:433.7px;" width="13" height="13" viewBox="0 0 13 13"><path d="M2.500 6.500 L5.500 10 L11 2.500" fill="none" stroke="#f4f4f4" stroke-width="1.800"/></svg>
<span class="t" style="left:1370px;top:434px;color:#c8c8c8;font-size:11px;letter-spacing:0.335px;">Consolidate World</span>
<div style="left:1351px;top:454px;width:13px;height:13px;background:#2b2b2b;border-radius:1px"></div>
<span class="t" style="left:1370.5px;top:453.5px;color:#c8c8c8;font-size:11px;letter-spacing:0.190px;">GPU Instancing</span>
<span class="t" style="left:1290.4px;top:474.5px;color:#c8c8c8;font-size:11px;letter-spacing:-0.007px;">Light Limit</span>
<div style="left:1351px;top:473.5px;width:67.5px;height:17px;background:#2b2b2b;border-radius:2px"></div>
<span class="t" style="left:1356px;top:475.6px;color:#e0e0e0;font-size:11px;letter-spacing:-0.295px;">8</span>
<div style="left:1422px;top:480px;width:153px;height:3px;background:#2b2b2b;border-radius:1.500px"></div>
<div style="left:1491px;top:474.5px;width:7px;height:13.5px;background:#c0c0c0;border-radius:2px"></div>
<span class="t" style="left:1223.2px;top:496.5px;color:#c8c8c8;font-size:11px;letter-spacing:0.094px;">Transparency Algorithm</span>
<div style="left:1351px;top:494.5px;width:138.5px;height:18.5px;background:#5d5d5d;border-radius:2px"></div>
<div style="left:1470px;top:494.5px;width:1px;height:18.5px;background:#4a4a4a;"></div>
<span class="t" style="left:1355.2px;top:497.5px;color:#e8e8e8;font-size:11px;letter-spacing:0.238px;">Depth Peeling</span>
<svg style="left:1475.5px;top:501px;" width="9" height="5" viewBox="0 0 9 5"><path d="M0 0 L9 0 L4.500 5Z" fill="#d0d0d0"/></svg>
<span class="t" style="left:1237px;top:518.5px;color:#c8c8c8;font-size:11px;letter-spacing:0.064px;">Transparency Quality</span>
<div style="left:1351px;top:517px;width:67.5px;height:17.5px;background:#2b2b2b;border-radius:2px"></div>
<span class="t" style="left:1356px;top:519.5px;color:#e0e0e0;font-size:11px;letter-spacing:-0.464px;">0.336</span>
<div style="left:1422px;top:524px;width:153px;height:3px;background:#2b2b2b;border-radius:1.500px"></div>
<div style="left:1472px;top:518.5px;width:7px;height:13.5px;background:#c0c0c0;border-radius:2px"></div>
<div style="left:1351px;top:539.7px;width:13px;height:13px;background:#2b2b2b;border-radius:1px"></div>
<span class="t" style="left:1369px;top:540px;color:#c8c8c8;font-size:11px;letter-spacing:0.186px;">Transparent Shadows</span>
<div style="left:1202.5px;top:558px;width:372.5px;height:18.5px;background:#5d5d5d;border-radius:2px"></div>
<svg style="left:1209px;top:563.5px;" width="11" height="6" viewBox="0 0 11 6"><path d="M0 0 L11 0 L5.500 6Z" fill="#f0f0f0"/></svg>
<span class="t" style="left:1235.7px;top:561px;color:#d0d0d0;font-size:11px;letter-spacing:-0.364px;font-weight:bold;">Maximum Texture Resolution Clamping</span>
<div style="left:1355px;top:582.5px;width:13px;height:13px;background:#2b2b2b;border-radius:1px"></div><svg style="left:1355px;top:582.5px;" width="13" height="13" viewBox="0 0 13 13"><path d="M2.500 6.500 L5.500 10 L11 2.500" fill="none" stroke="#f4f4f4" stroke-width="1.800"/></svg>
<span class="t" style="left:1373.7px;top:582px;color:#c8c8c8;font-size:11px;letter-spacing:0.129px;">Clamp Texture Resolution</span>
<span class="t" style="left:1228.3px;top:601.5px;color:#c8c8c8;font-size:11px;letter-spacing:0.164px;">Max Texture Resolution</span>
<div style="left:1355px;top:599.5px;width:96.5px;height:18.5px;background:#5d5d5d;border-radius:2px"></div>
<div style="left:1431.5px;top:599.5px;width:1px;height:18.5px;background:#4a4a4a;"></div>
<span class="t" style="left:1359px;top:602.5px;color:#d0d0d0;font-size:11px;letter-spacing:0.106px;">Automatic</span>
<svg style="left:1437.5px;top:606.5px;" width="9" height="5" viewBox="0 0 9 5"><path d="M0 0 L9 0 L4.500 5Z" fill="#d0d0d0"/></svg>
<div style="left:1355px;top:625px;width:69px;height:17.5px;background:#3b3b3b;border-radius:2px"></div>
<span class="t" style="left:1359.8px;top:627.5px;color:#727272;font-size:11px;letter-spacing:-0.255px;">16384</span>
<div style="left:1427px;top:632px;width:144px;height:3px;background:#3d3d3d;border-radius:1.500px"></div>
<div style="left:1564.5px;top:626.5px;width:6.5px;height:13.5px;background:#6c6c6c;border-radius:2px"></div>
<div style="left:1355px;top:648.3px;width:220px;height:25.2px;background:#5d5d5d;"></div>
<span class="t" style="left:1416.8px;top:655px;color:#eee;font-size:11px;letter-spacing:0.130px;">Reload All Textures</span>
<div style="left:1355px;top:676.2px;width:220px;height:25.8px;background:#5d5d5d;"></div>
<span class="t" style="left:1365px;top:683px;color:#eee;font-size:11px;letter-spacing:0.061px;">Regenerate All UV Tile Preview Textures</span>
<div style="left:1575px;top:405px;width:12px;height:300px;background:#3d3d3d;"></div>
<svg style="left:1576px;top:409px;" width="9" height="5" viewBox="0 0 9 5"><path d="M0 5 L9 5 L4.500 0Z" fill="#c4c4c4"/></svg>
<div style="left:1576px;top:418px;width:9.5px;height:163px;background:#5d5d5d;border-radius:5px"></div>
<svg style="left:1576px;top:696px;" width="9" height="5" viewBox="0 0 9 5"><path d="M0 0 L9 0 L4.500 5Z" fill="#c4c4c4"/></svg>
<div style="left:1196px;top:706px;width:379px;height:12px;background:#3b3b3b;"></div>
<svg style="left:1199px;top:707.5px;" width="6" height="9" viewBox="0 0 6 9"><path d="M6 0 L6 9 L0 4.500Z" fill="#c4c4c4"/></svg>
<div style="left:1208.7px;top:707px;width:342.8px;height:9.5px;background:#5d5d5d;border-radius:4.750px"></div>
<svg style="left:1566px;top:707.5px;" width="6" height="9" viewBox="0 0 6 9"><path d="M0 0 L0 9 L6 4.500Z" fill="#c4c4c4"/></svg>
<div style="left:1195px;top:724px;width:193.7px;height:25.5px;background:#5d5d5d;"></div>
<span class="t" style="left:1277.4px;top:731px;color:#eee;font-size:11px;letter-spacing:-0.157px;">Select</span>
<div style="left:1394px;top:724px;width:194px;height:25.5px;background:#5d5d5d;"></div>
<span class="t" style="left:1477.4px;top:731px;color:#eee;font-size:11px;letter-spacing:0.007px;">Close</span>
</body></html>
